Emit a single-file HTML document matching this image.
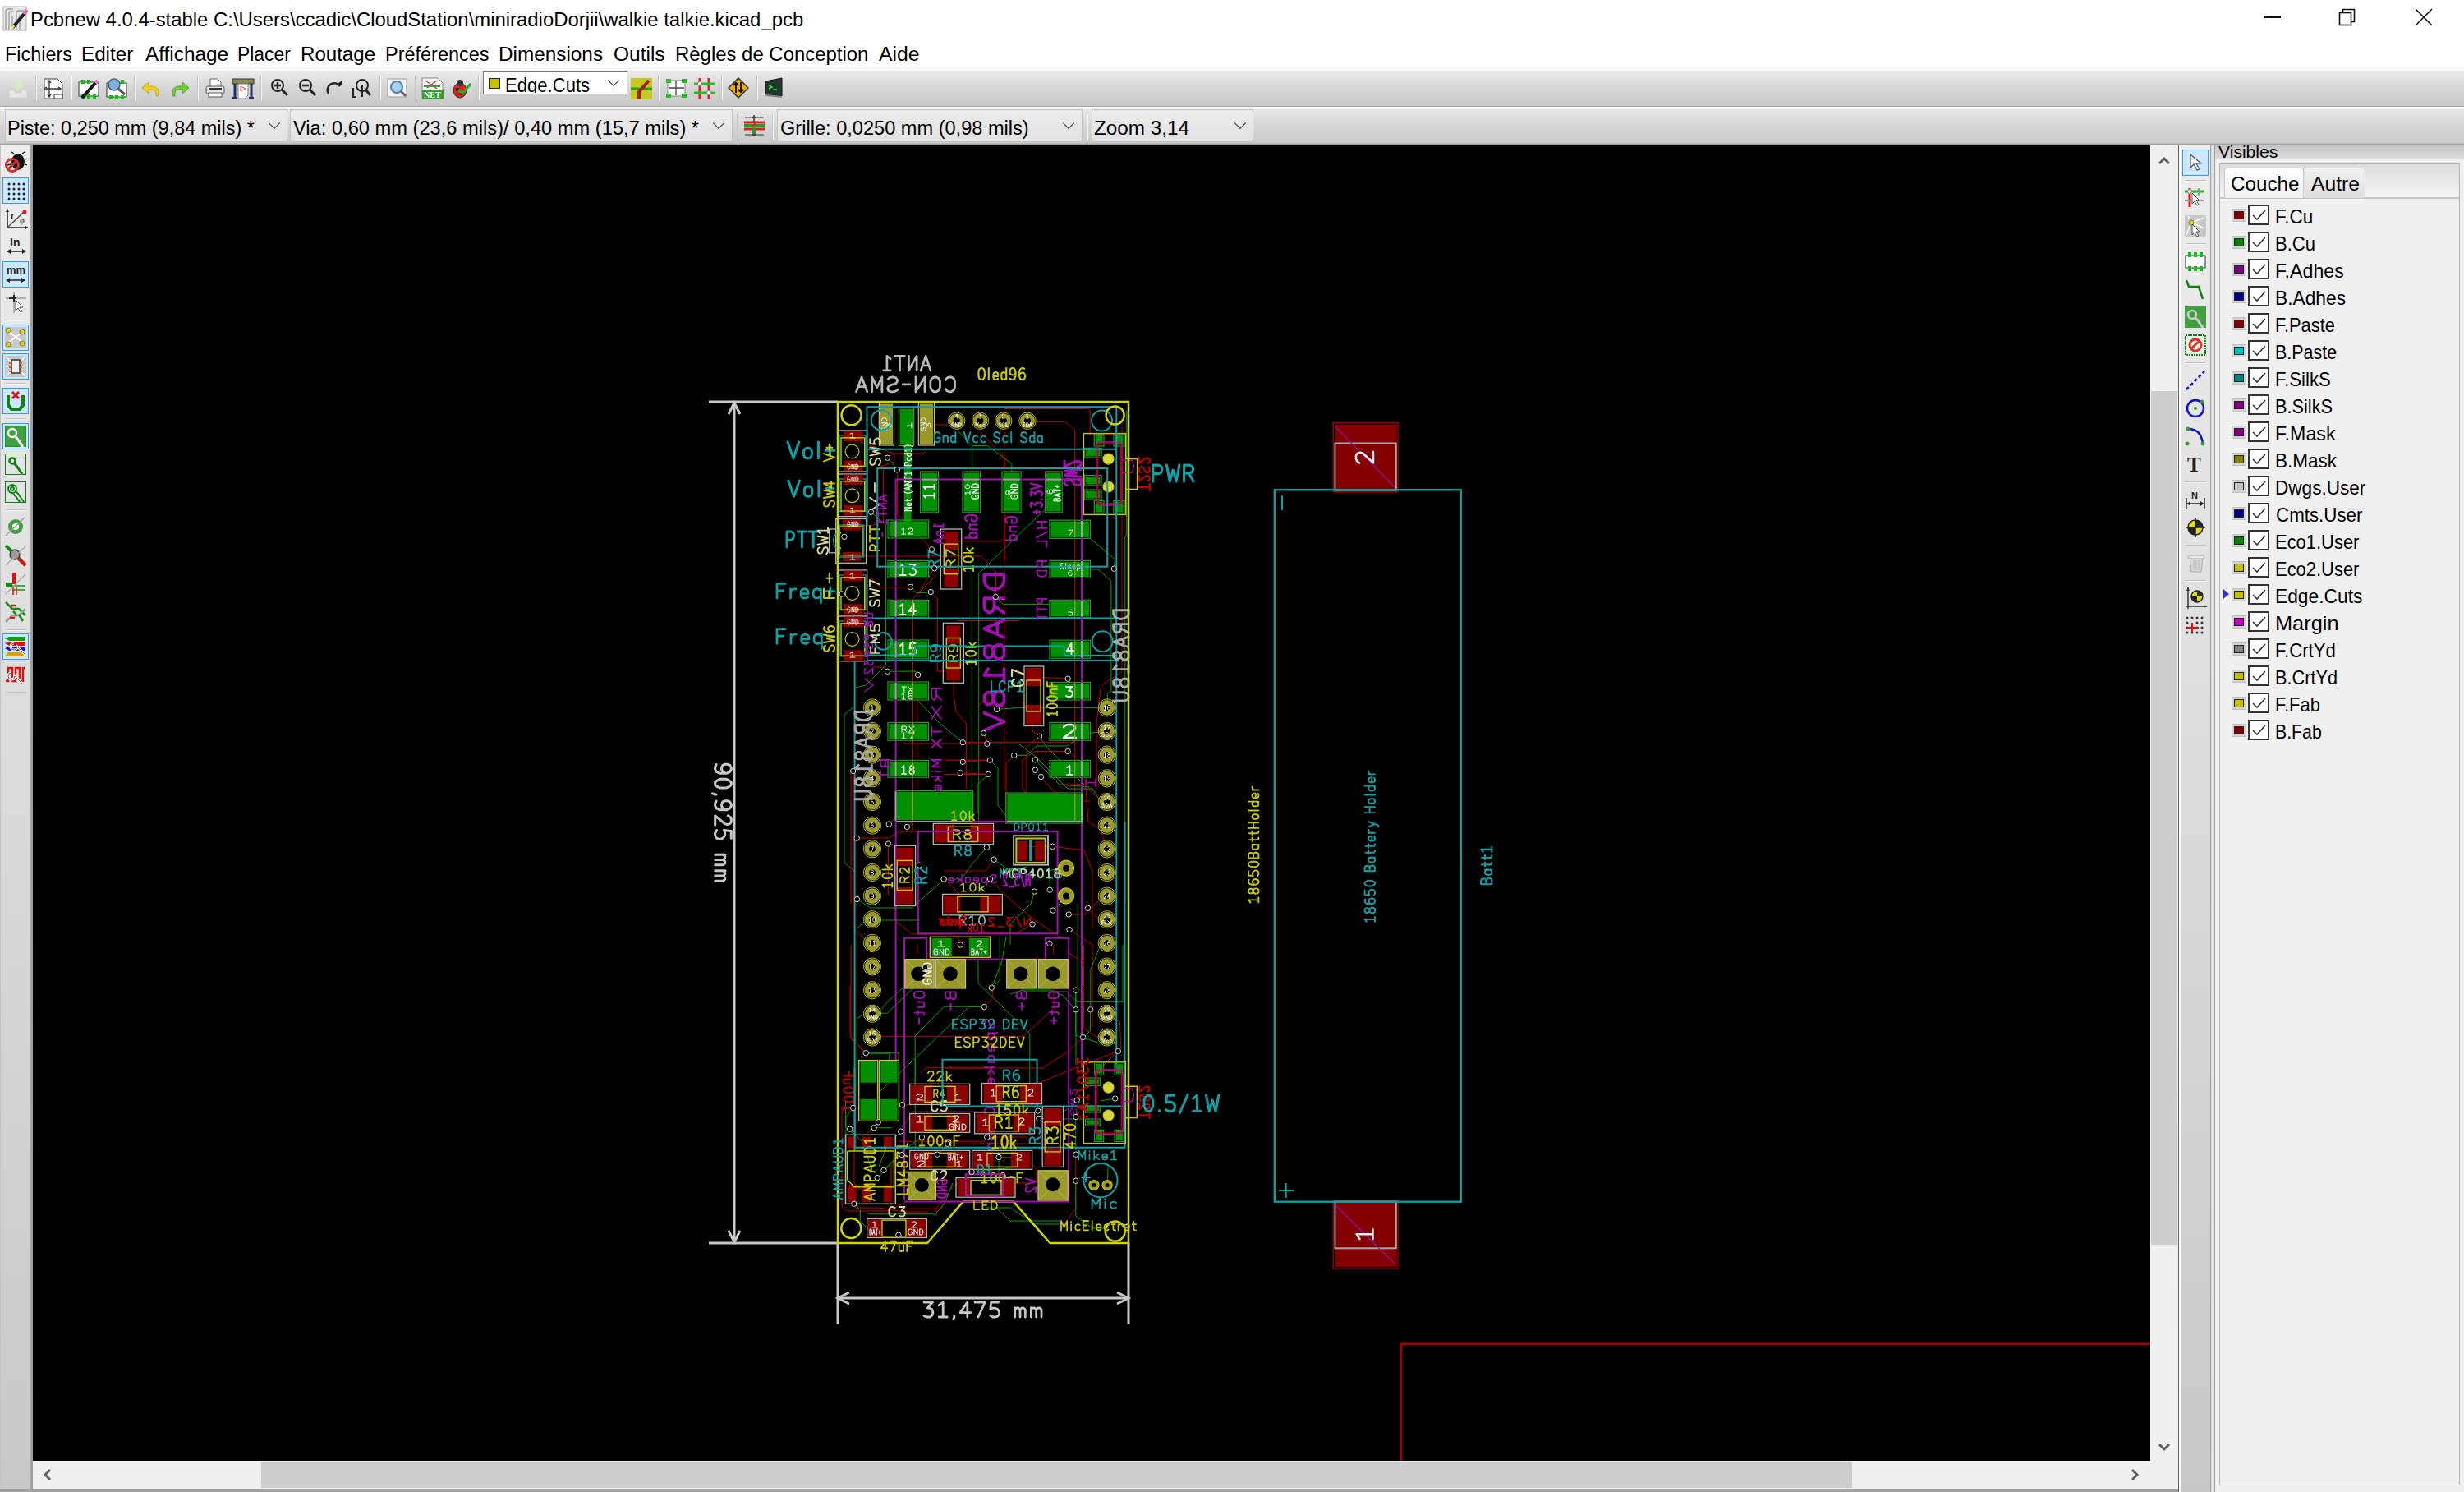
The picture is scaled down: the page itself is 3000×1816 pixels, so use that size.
<!DOCTYPE html>
<html><head><meta charset="utf-8"><style>
*{margin:0;padding:0;box-sizing:border-box}
html,body{width:3000px;height:1816px;overflow:hidden;background:#fff;font-family:"Liberation Sans",sans-serif;color:#000}
.a{position:absolute}
.t{position:absolute;white-space:nowrap;font-size:23px;line-height:1;transform-origin:0 0}
#title{left:0;top:0;width:3000px;height:46px;background:#fff}
#menu{left:0;top:46px;width:3000px;height:37px;background:#fff}
#tb1{left:0;top:83px;width:3000px;height:47px;background:linear-gradient(#f0f0f0 0,#f0f0f0 1px,#ffffff 1px,#ffffff 2px,#ececec 3px,#d6d6d6 50%,#c8c8c8 97%,#a4a4a4 97%,#a4a4a4 100%)}
#tb2{left:0;top:130px;width:3000px;height:47px;background:linear-gradient(#ffffff 0,#ffffff 2px,#e8e8e8 3px,#d6d6d6 50%,#cacaca 94%,#a0a0a0 96%,#a0a0a0 100%)}
#ltb{left:0;top:177px;width:40px;height:1639px;background:linear-gradient(90deg,#c4c4c4 0,#c4c4c4 1px,transparent 1px,transparent 36px,#a8a8a8 36px,#9a9a9a 40px),linear-gradient(#ececec,#c8c8c8)}
#canvas{left:40px;top:177px;width:2578px;height:1601px;background:#000;overflow:hidden}
#hsb{left:40px;top:1778px;width:2578px;height:34px;background:#f0f0f0}
#hth{left:318px;top:1779px;width:1937px;height:32px;background:#cdcdcd}
#vsb{left:2618px;top:177px;width:34px;height:1635px;background:#f0f0f0}
#vth{left:2619px;top:476px;width:32px;height:1039px;background:#cdcdcd}
#bot{left:0;top:1812px;width:3000px;height:4px;background:#a0a0a0}
#rtb{left:2652px;top:177px;width:45px;height:1639px;background:linear-gradient(90deg,#606060 0,#606060 1px,#ffffff 1px,#ffffff 3px,transparent 3px,transparent 39px,#a0a0a0 39px,#a0a0a0 40px,#e0e0e0 40px,#e0e0e0 44px,#a0a0a0 44px,#a0a0a0 45px),linear-gradient(#ededed,#c8c8c8)}
#lp{left:2697px;top:177px;width:303px;height:1639px;background:#f0f0f0}
#vish{left:2697px;top:177px;width:303px;height:17px;background:linear-gradient(#c4c4c4,#dedede)}
#nb{left:2702px;top:199px;width:293px;height:1609px;border:1px solid #b4b4b4;background:linear-gradient(#dcdcdc 0,#f4f4f4 40px,#f0f0f0 44px)}
#nbc{left:2703px;top:240px;width:291px;height:1567px;background:#f0f0f0;border-top:2px solid #c4c4c4}
.tab{position:absolute;top:204px;height:37px;border:1px solid #c6c6c6;border-bottom:none;border-radius:3px 3px 0 0}
.sw{position:absolute;left:2717px;width:18px;height:16px;background:#d4d4d4;border:1px solid #c0c0c0}
.sw i{position:absolute;left:2px;top:2px;width:12px;height:10px;border:1px solid #222}
.ck{position:absolute;left:2737px;width:26px;height:25px;background:#fff;border:2px solid #333}
.ck svg{position:absolute;left:1px;top:1px}
.lt{left:2771px}
.cb{position:absolute;background:linear-gradient(#ececec,#e2e2e2);border:1px solid #c4c4c4}
.chev{position:absolute;width:10px;height:10px;border-right:1.6px solid #333;border-bottom:1.6px solid #333;transform:rotate(45deg)}
.sep{position:absolute;width:2px;background:linear-gradient(90deg,#c4c4c4 50%,#f8f8f8 50%)}
.hsep{position:absolute;height:2px;background:linear-gradient(#c0c0c0 50%,#f6f6f6 50%)}
.btn{position:absolute;width:32px;height:32px;background:#cce8ff;border:1px solid #3399ff}
.ic{position:absolute}
</style></head><body>

<div id="title" class="a"></div>
<div id="menu" class="a"></div>
<div id="tb1" class="a"></div>
<div id="tb2" class="a"></div>
<div id="ltb" class="a"></div>
<div id="canvas" class="a"></div>
<div id="hsb" class="a"></div><div id="hth" class="a"></div>
<div id="vsb" class="a"></div><div id="vth" class="a"></div>
<div id="bot" class="a"></div>
<div id="rtb" class="a"></div>
<div id="lp" class="a"></div>
<div id="vish" class="a"></div>
<div id="nb" class="a"></div>
<div id="nbc" class="a"></div>
<!-- app icon -->
<svg class="ic" style="left:3px;top:6px" width="32" height="32" viewBox="0 0 32 32">
<rect x="1" y="2" width="28" height="29" fill="#e8e8e8" stroke="#b0b0b0"/>
<path d="M4 30V8q0-3 3-3h6M8 30V10q0-2 2-2h4M12 30V13M17 30V10q0-3 3-3h6M21 30V12" fill="none" stroke="#9a9a9a" stroke-width="1.3"/>
<path d="M12 28 L28 9" stroke="#222" stroke-width="4"/><path d="M26 11 L30 6" stroke="#e070b0" stroke-width="4"/><path d="M11 29 l3-4" stroke="#e8e070" stroke-width="3"/>
</svg>
<!-- window buttons -->
<div class="a" style="left:2757px;top:20px;width:20px;height:2px;background:#111"></div>
<svg class="ic" style="left:2846px;top:9px" width="24" height="24"><rect x="2.5" y="6.5" width="14" height="15" fill="none" stroke="#111" stroke-width="1.6"/><path d="M6.5 6.5V2.5H20.5V17.5H16.5" fill="none" stroke="#111" stroke-width="1.6"/></svg>
<svg class="ic" style="left:2939px;top:9px" width="24" height="24"><path d="M2 2L22 22M22 2L2 22" stroke="#111" stroke-width="1.6"/></svg>
<!-- menus -->
<!-- toolbar 1 separators -->
<div class="sep" style="left:43px;top:92px;height:30px"></div>
<div class="sep" style="left:86px;top:92px;height:30px"></div>
<div class="sep" style="left:163px;top:92px;height:30px"></div>
<div class="sep" style="left:240px;top:92px;height:30px"></div>
<div class="sep" style="left:317px;top:92px;height:30px"></div>
<div class="sep" style="left:462px;top:92px;height:30px"></div>
<div class="sep" style="left:505px;top:92px;height:30px"></div>
<div class="sep" style="left:582px;top:92px;height:30px"></div>
<div class="sep" style="left:801px;top:92px;height:30px"></div>
<div class="sep" style="left:878px;top:92px;height:30px"></div>
<div class="sep" style="left:921px;top:92px;height:30px"></div>
<!-- toolbar 1 icons -->
<svg class="ic" style="left:9px;top:95px" width="26" height="26"><path d="M2 14h6l2 4h6l2-4h6v10H2z" fill="#e6e6e6" stroke="#d0d0d0"/><path d="M9 2h8v7h4l-8 7-8-7h4z" fill="#d8e8c0"/></svg>
<svg class="ic" style="left:53px;top:95px" width="25" height="26"><path d="M1 1h16l6 6v18H1z" fill="#fff" stroke="#444"/><path d="M7 3v20M3 13h18M5 6l2-3 2 3M5 20l2 3 2-3M4 11l-3 2 3 2M18 11l3 2-3 2" fill="none" stroke="#333" stroke-width="1.3"/><rect x="13" y="20" width="10" height="5" fill="#fff" stroke="#333"/></svg>
<svg class="ic" style="left:95px;top:95px" width="26" height="26"><rect x="1" y="5" width="24" height="17" fill="#fff" stroke="#333"/><g fill="#10c010"><rect x="4" y="2" width="4" height="5"/><rect x="11" y="2" width="4" height="5"/><rect x="4" y="20" width="4" height="5"/><rect x="11" y="20" width="4" height="5"/><rect x="18" y="20" width="4" height="5"/></g><path d="M5 24L23 4" stroke="#111" stroke-width="4"/><path d="M21 6l3-3" stroke="#e080c0" stroke-width="4"/></svg>
<svg class="ic" style="left:129px;top:94px" width="26" height="27"><rect x="1" y="7" width="24" height="17" fill="#fff" stroke="#333"/><g fill="#10c010"><rect x="18" y="3" width="4" height="5"/><rect x="4" y="22" width="4" height="5"/><rect x="11" y="22" width="4" height="5"/><rect x="18" y="22" width="4" height="5"/></g><circle cx="10" cy="9" r="7" fill="#80b0d8" stroke="#406080" stroke-width="1.5"/><path d="M15 14l8 7" stroke="#555" stroke-width="3"/></svg>
<svg class="ic" style="left:172px;top:95px" width="23" height="24"><path d="M20 22c3-6 0-12-8-12H9V5L1 12l8 7v-5h3c5 0 7 3 6 8z" fill="#f0d020" stroke="#c8a800"/></svg>
<svg class="ic" style="left:208px;top:95px" width="23" height="24"><path d="M3 22c-3-6 0-12 8-12h3V5l8 7-8 7v-5h-3c-5 0-7 3-6 8z" fill="#70d030" stroke="#50a020"/></svg>
<svg class="ic" style="left:250px;top:95px" width="24" height="24"><path d="M6 1h9l4 4v6H6z" fill="#fff" stroke="#666"/><rect x="1" y="10" width="22" height="9" rx="2" fill="#e8e8e8" stroke="#555"/><rect x="4" y="12" width="16" height="3" fill="#333"/><rect x="4" y="18" width="16" height="5" fill="#fff" stroke="#555"/></svg>
<svg class="ic" style="left:282px;top:94px" width="28" height="27"><rect x="1" y="2" width="26" height="6" fill="#8a8a50" stroke="#333"/><path d="M4 8v17M24 8v17" stroke="#203060" stroke-width="3"/><path d="M1 25h6M21 25h6" stroke="#203060" stroke-width="2"/><path d="M8 8h12v14l-4 4H8z" fill="#fff" stroke="#888"/><path d="M11 11l6 3-6 3z" fill="none" stroke="#e04040"/></svg>
<svg class="ic" style="left:329px;top:95px" width="23" height="24"><circle cx="9" cy="9" r="7" fill="none" stroke="#222" stroke-width="2"/><path d="M14 14l7 7" stroke="#222" stroke-width="3"/><path d="M5 9h8M9 5v8" stroke="#222" stroke-width="2.5"/></svg>
<svg class="ic" style="left:363px;top:95px" width="23" height="24"><circle cx="9" cy="9" r="7" fill="none" stroke="#222" stroke-width="2"/><path d="M14 14l7 7" stroke="#222" stroke-width="3"/><path d="M5 9h8" stroke="#222" stroke-width="2.5"/></svg>
<svg class="ic" style="left:397px;top:97px" width="22" height="22"><path d="M3 17A8 8 0 1 1 17 8" fill="none" stroke="#222" stroke-width="2.5"/><path d="M12 7h8v-7z" fill="#222"/></svg>
<svg class="ic" style="left:428px;top:95px" width="25" height="25"><circle cx="13" cy="9" r="7" fill="none" stroke="#222" stroke-width="2"/><path d="M17 14l6 7" stroke="#222" stroke-width="3"/><path d="M2 12v11h4M13 9v14" fill="none" stroke="#222" stroke-width="2"/></svg>
<svg class="ic" style="left:471px;top:95px" width="26" height="25"><rect x="1" y="1" width="23" height="22" fill="#f4f4f4" stroke="#999"/><circle cx="12" cy="11" r="7" fill="#a8d0f0" stroke="#5080b0" stroke-width="2"/><path d="M17 16l6 6" stroke="#666" stroke-width="3"/></svg>
<svg class="ic" style="left:513px;top:94px" width="28" height="27"><path d="M1 1h19l6 6v19H1z" fill="#f8f8f8" stroke="#888"/><path d="M5 4l14 10M19 4L7 13" stroke="#e04040" stroke-width="1.5"/><path d="M3 11h20" stroke="#30a030" stroke-width="2"/><rect x="1" y="16" width="26" height="10" fill="#30a030"/><text x="3" y="25" font-family="Liberation Serif" font-weight="bold" font-size="10" fill="#fff">NET</text></svg>
<svg class="ic" style="left:548px;top:95px" width="26" height="25"><ellipse cx="12" cy="15" rx="8" ry="9" fill="#e02020" stroke="#333"/><circle cx="12" cy="6" r="4" fill="#333"/><circle cx="9" cy="14" r="2" fill="#111"/><circle cx="14" cy="19" r="2" fill="#111"/><path d="M10 14l5 5 10-12" fill="none" stroke="#20b020" stroke-width="3"/></svg>
<!-- layer combo -->
<div class="a" style="left:588px;top:87px;width:176px;height:28px;background:#fff;border:1px solid #7a7a7a"></div>
<div class="a" style="left:595px;top:95px;width:14px;height:13px;background:#c2c200;border:1px solid #222"></div>
<div class="a" style="left:589px;top:88px;width:150px;height:25px;overflow:hidden"><div class="t" style="left:25.5px;top:5px;transform:scaleX(0.96)">Edge.Cuts</div></div>
<div class="chev" style="left:742px;top:93px;border-color:#333"></div>
<svg class="ic" style="left:768px;top:95px" width="26" height="25"><rect x="0" y="0" width="26" height="25" fill="#c8c820"/><path d="M0 13h26" stroke="#20a020" stroke-width="3"/><path d="M10 25v-8l12-14" fill="none" stroke="#a02020" stroke-width="4"/></svg>
<svg class="ic" style="left:810px;top:95px" width="27" height="25"><rect x="3" y="3" width="21" height="19" fill="#fff" stroke="#888"/><g fill="#20c020"><rect x="1" y="1" width="6" height="5"/><rect x="20" y="1" width="6" height="5"/><rect x="1" y="19" width="6" height="5"/><rect x="20" y="19" width="6" height="5"/></g><path d="M13 4v17M4 12h19" stroke="#444" stroke-width="1.3"/></svg>
<svg class="ic" style="left:845px;top:95px" width="25" height="25"><path d="M7 0v25M18 0v25" stroke="#e02020" stroke-width="3"/><path d="M0 7h25M0 18h25" stroke="#20c020" stroke-width="3"/><circle cx="7" cy="7" r="2.5" fill="#fff" stroke="#888"/><circle cx="18" cy="18" r="2.5" fill="#fff" stroke="#888"/></svg>
<svg class="ic" style="left:886px;top:94px" width="26" height="26"><path d="M13 1l12 12-12 12L1 13z" fill="#f0b000" stroke="#333" stroke-width="1.5"/><path d="M10 7v12M7 10l3-3 3 3M16 6v12M13 15l3 3 3-3" fill="none" stroke="#111" stroke-width="2"/></svg>
<svg class="ic" style="left:930px;top:94px" width="26" height="26"><path d="M2 5l20-4v22L2 21z" fill="#333" stroke="#111"/><rect x="4" y="6" width="16" height="13" fill="#1a3a2a"/><path d="M6 10l4 2-4 2M11 15h5" stroke="#40e040" stroke-width="1.5" fill="none"/><path d="M2 21l20 2v2L2 23z" fill="#888"/></svg>
<!-- toolbar 2 -->
<div class="cb" style="left:6px;top:133px;width:344px;height:40px"></div>
<div class="chev" style="left:329px;top:145px"></div>
<div class="cb" style="left:353px;top:133px;width:539px;height:40px"></div>
<div class="chev" style="left:870px;top:145px"></div>
<div class="sep" style="left:897px;top:138px;height:32px"></div>
<svg class="ic" style="left:904px;top:138px" width="29" height="30"><path d="M2 11h25M2 19h25" stroke="#e02020" stroke-width="3"/><path d="M2 15h25" stroke="#20a020" stroke-width="4"/><path d="M14 2v8M14 20v8" stroke="#333" stroke-width="1.5"/><path d="M3 5h8M17 5h9M3 26h8M17 26h9" stroke="#333" stroke-width="1.2"/><path d="M11 3l3 2-3 2M17 3l-3 2 3 2M11 24l3 2-3 2M17 24l-3 2 3 2" fill="#333"/><path d="M14 17v8" stroke="#20a020" stroke-width="4"/><path d="M16 12l-4 4" stroke="#e02020" stroke-width="2"/></svg>
<div class="sep" style="left:940px;top:138px;height:32px"></div>
<div class="cb" style="left:946px;top:133px;width:372px;height:40px"></div>
<div class="chev" style="left:1296px;top:145px"></div>
<div class="sep" style="left:1323px;top:138px;height:32px"></div>
<div class="cb" style="left:1329px;top:133px;width:197px;height:40px"></div>
<div class="chev" style="left:1505px;top:145px"></div>
<!-- scrollbar arrows -->
<svg class="ic" style="left:50px;top:1787px" width="16" height="16"><path d="M11 2L5 8l6 6" fill="none" stroke="#606060" stroke-width="3"/></svg>
<svg class="ic" style="left:2591px;top:1787px" width="16" height="16"><path d="M5 2l6 6-6 6" fill="none" stroke="#606060" stroke-width="3"/></svg>
<svg class="ic" style="left:2627px;top:188px" width="16" height="16"><path d="M2 11l6-6 6 6" fill="none" stroke="#606060" stroke-width="3"/></svg>
<svg class="ic" style="left:2627px;top:1753px" width="16" height="16"><path d="M2 5l6 6 6-6" fill="none" stroke="#606060" stroke-width="3"/></svg>
<!-- right panel -->
<div class="tab" style="left:2708px;width:97px;background:linear-gradient(#ffffff,#f0f0f0)"></div>
<div class="tab" style="left:2806px;width:74px;background:linear-gradient(#f0f0f0,#dedede)"></div>
<svg class="ic" style="left:2706px;top:716px" width="9" height="14"><path d="M1 1l7 6-7 6z" fill="#3030f0"/></svg>
<!-- left toolbar -->
<svg class="ic" style="left:5px;top:184px" width="28" height="27"><ellipse cx="17" cy="13" rx="8" ry="10" fill="#111"/><path d="M12 3l-3-2M22 3l3-2M8 10l-3-1M8 16l-4 1M26 10l2-1M26 16l2 1" stroke="#111" stroke-width="1.3"/><circle cx="10" cy="17" r="7.5" fill="none" stroke="#d03030" stroke-width="3"/><path d="M5 22l10-10" stroke="#d03030" stroke-width="3"/></svg>
<div class="btn" style="left:3px;top:216px"></div>
<svg class="ic" style="left:7px;top:220px" width="26" height="26"><g fill="#222"><circle cx="4" cy="4" r="1.5"/><circle cx="10" cy="4" r="1.5"/><circle cx="16" cy="4" r="1.5"/><circle cx="22" cy="4" r="1.5"/><circle cx="4" cy="10" r="1.5"/><circle cx="10" cy="10" r="1.5"/><circle cx="16" cy="10" r="1.5"/><circle cx="22" cy="10" r="1.5"/><circle cx="4" cy="16" r="1.5"/><circle cx="10" cy="16" r="1.5"/><circle cx="16" cy="16" r="1.5"/><circle cx="22" cy="16" r="1.5"/><circle cx="4" cy="22" r="1.5"/><circle cx="10" cy="22" r="1.5"/><circle cx="16" cy="22" r="1.5"/><circle cx="22" cy="22" r="1.5"/></g></svg>
<svg class="ic" style="left:6px;top:253px" width="28" height="27"><path d="M3 2v22h25" fill="none" stroke="#222" stroke-width="1.5"/><path d="M1 5l2-4 2 4M25 22l3 2-3 2" fill="#222"/><path d="M3 24L23 5" stroke="#444" stroke-width="1.3"/><circle cx="24" cy="5" r="2.5" fill="#e02020"/><text x="7" y="13" font-size="11" font-weight="bold" fill="#222" font-family="Liberation Sans">r</text><text x="18" y="19" font-size="10" fill="#222" font-family="Liberation Serif">φ</text></svg>
<svg class="ic" style="left:6px;top:287px" width="28" height="24"><text x="6" y="13" font-size="14" font-weight="bold" fill="#222" font-family="Liberation Sans">In</text><path d="M3 19h22" stroke="#222" stroke-width="1.5"/><path d="M2 19l5-3v6zM26 19l-5-3v6z" fill="#222"/></svg>
<div class="btn" style="left:3px;top:318px"></div>
<svg class="ic" style="left:5px;top:320px" width="28" height="28"><text x="3" y="13" font-size="13" font-weight="bold" fill="#222" font-family="Liberation Sans">mm</text><path d="M3 21h22" stroke="#222" stroke-width="1.5"/><path d="M2 21l5-3v6zM26 21l-5-3v6z" fill="#222"/></svg>
<svg class="ic" style="left:6px;top:355px" width="28" height="26"><path d="M11 1v25M1 8h25" stroke="#999" stroke-width="1.3"/><path d="M11 4v8M5 8h9" stroke="#222" stroke-width="2"/><path d="M13 10v13l3-3 3 5 2-1-3-5h4z" fill="#fff" stroke="#555"/></svg>
<div class="hsep" style="left:7px;top:389px;width:25px"></div>
<div class="btn" style="left:3px;top:395px"></div>
<svg class="ic" style="left:6px;top:398px" width="26" height="26"><rect x="0" y="0" width="26" height="26" fill="#c8c8c8"/><path d="M4 5l18 14M4 19L22 6" stroke="#fff" stroke-width="2"/><g fill="#e0e000" stroke="#777"><circle cx="4" cy="4" r="3"/><circle cx="21" cy="6" r="3"/><circle cx="4" cy="21" r="3"/><circle cx="21" cy="20" r="3"/></g></svg>
<div class="btn" style="left:3px;top:430px"></div>
<svg class="ic" style="left:6px;top:433px" width="26" height="26"><rect x="0" y="0" width="26" height="26" fill="#c8c8c8"/><path d="M1 1l24 24M25 1L1 25M1 13h24" stroke="#fff" stroke-width="1.5"/><rect x="8" y="5" width="10" height="16" fill="#eee" stroke="#333" stroke-width="1.5"/><g fill="#e06020"><rect x="5" y="8" width="3" height="2"/><rect x="5" y="13" width="3" height="2"/><rect x="5" y="18" width="3" height="2"/><rect x="18" y="8" width="3" height="2"/><rect x="18" y="13" width="3" height="2"/><rect x="18" y="18" width="3" height="2"/></g></svg>
<div class="hsep" style="left:7px;top:466px;width:25px"></div>
<div class="btn" style="left:3px;top:472px"></div>
<svg class="ic" style="left:6px;top:475px" width="26" height="26"><path d="M4 6v12l4 5h10l4-5V6" fill="none" stroke="#108010" stroke-width="4"/><path d="M9 2l8 8M17 2l-8 8" stroke="#e01010" stroke-width="3"/></svg>
<div class="hsep" style="left:7px;top:509px;width:25px"></div>
<div class="btn" style="left:3px;top:515px"></div>
<svg class="ic" style="left:6px;top:518px" width="26" height="26"><rect x="0" y="0" width="26" height="26" fill="#40a040" stroke="#108010"/><circle cx="9" cy="9" r="5" fill="none" stroke="#fff" stroke-width="2.5"/><path d="M12 12l3 4 7 10" fill="none" stroke="#fff" stroke-width="3"/></svg>
<svg class="ic" style="left:6px;top:552px" width="26" height="26"><rect x="0.5" y="0.5" width="25" height="25" fill="none" stroke="#108010"/><circle cx="9" cy="9" r="3.5" fill="none" stroke="#108010" stroke-width="2.5"/><path d="M11 12l3 3 7 10" fill="none" stroke="#108010" stroke-width="3"/></svg>
<svg class="ic" style="left:6px;top:586px" width="26" height="26"><rect x="0.5" y="0.5" width="25" height="25" fill="none" stroke="#108010"/><circle cx="9" cy="9" r="5" fill="none" stroke="#108010" stroke-width="2"/><circle cx="9" cy="9" r="2" fill="none" stroke="#108010" stroke-width="2"/><path d="M13 12l3 3 7 10M10 15l3 3 5 7" fill="none" stroke="#108010" stroke-width="2"/></svg>
<div class="hsep" style="left:7px;top:620px;width:25px"></div>
<svg class="ic" style="left:6px;top:628px" width="26" height="26"><circle cx="13" cy="13" r="9" fill="#40a040"/><circle cx="13" cy="13" r="4" fill="#fff"/><path d="M1 24L24 2" stroke="#999" stroke-width="1.3"/></svg>
<svg class="ic" style="left:6px;top:662px" width="26" height="28"><path d="M1 2l24 24" stroke="#109010" stroke-width="4"/><path d="M13 14l12 12" stroke="#e01010" stroke-width="4"/><circle cx="12" cy="13" r="6" fill="#999" stroke="#444" stroke-width="1.5"/><path d="M1 26L25 3" stroke="#aaa" stroke-width="1.3"/></svg>
<svg class="ic" style="left:6px;top:697px" width="26" height="27"><rect x="9" y="0" width="5" height="14" fill="#e01010"/><rect x="1" y="12" width="8" height="5" fill="#109010"/><path d="M9 16h16M9 21h16" stroke="#109010" stroke-width="1.5"/><path d="M10 18v9M14 18v9" stroke="#e01010" stroke-width="1.5"/><path d="M1 26L25 2" stroke="#aaa" stroke-width="1.3"/></svg>
<svg class="ic" style="left:6px;top:732px" width="26" height="26"><path d="M1 1l8 8 8 0 8 8" fill="none" stroke="#109010" stroke-width="2.5"/><path d="M1 25l8-8 8 0 8-8" fill="none" stroke="#999" stroke-width="2.5"/><path d="M7 5h6M6 20h6" stroke="#e01010" stroke-width="2.5"/><path d="M10 12l4 4M17 16l5 8" stroke="#109010" stroke-width="2.5"/></svg>
<div class="hsep" style="left:7px;top:766px;width:25px"></div>
<div class="btn" style="left:3px;top:771px"></div>
<svg class="ic" style="left:6px;top:774px" width="26" height="26"><path d="M5 1h20v5H5L0 3z" fill="#10a010"/><path d="M5 7h20v5H5L0 9z" fill="#e01010"/><path d="M5 13h20v5H5L0 15z" fill="#1010d0"/><path d="M3 20h20l3 5H0z" fill="#d8a010"/><path d="M11 9a4 4 0 1 0 4 4l10 10" fill="none" stroke="#eee" stroke-width="3"/><path d="M11 9a4 4 0 1 0 4 4l10 10" fill="none" stroke="#666" stroke-width="1"/></svg>
<svg class="ic" style="left:6px;top:809px" width="26" height="26"><path d="M1 20h3V4h5v16h4V4h5v16h4V4h2" fill="none" stroke="#e01010" stroke-width="2.5"/><path d="M8 10a4 4 0 1 0 4 4l9 9" fill="none" stroke="#eee" stroke-width="3.5"/><path d="M8 10a4 4 0 1 0 4 4l9 9" fill="none" stroke="#666" stroke-width="1"/></svg>
<div class="hsep" style="left:7px;top:842px;width:25px"></div>
<!-- right toolbar -->
<div class="btn" style="left:2657px;top:182px"></div>
<svg class="ic" style="left:2665px;top:187px" width="18" height="22"><path d="M2 1v16l4-4 4 7 3-1-4-7h6z" fill="#f4f4f4" stroke="#555" stroke-width="1.2"/></svg>
<div class="hsep" style="left:2661px;top:219px;width:25px"></div>
<svg class="ic" style="left:2659px;top:228px" width="28" height="25"><path d="M1 5h24" stroke="#10c010" stroke-width="3"/><path d="M7 1v23" stroke="#e01010" stroke-width="3"/><path d="M18 1v10M1 16h24" stroke="#999" stroke-width="2.5"/><circle cx="7" cy="5" r="2.5" fill="#fff" stroke="#888"/><path d="M10 7v13l3-3 3 5 2-1-3-5h4z" fill="#fff" stroke="#555"/></svg>
<svg class="ic" style="left:2660px;top:262px" width="26" height="26"><rect x="0" y="0" width="26" height="26" rx="2" fill="#c8c8c8"/><path d="M8 9L2 24M8 9l16-6M8 9L24 16M8 9L4 1" stroke="#fff" stroke-width="1.5"/><circle cx="8" cy="9" r="3" fill="#e0e000" stroke="#777"/><path d="M9 11v13l3-3 3 5 2-1-3-5h4z" fill="#fff" stroke="#555"/></svg>
<div class="hsep" style="left:2661px;top:296px;width:25px"></div>
<svg class="ic" style="left:2660px;top:306px" width="26" height="25"><rect x="1" y="5" width="24" height="15" fill="#fff" stroke="#333"/><g fill="#10c010"><rect x="4" y="1" width="4" height="6"/><rect x="11" y="1" width="4" height="6"/><rect x="18" y="1" width="4" height="6"/><rect x="4" y="18" width="4" height="6"/><rect x="11" y="18" width="4" height="6"/><rect x="18" y="18" width="4" height="6"/></g></svg>
<svg class="ic" style="left:2660px;top:340px" width="26" height="25"><path d="M2 1l3 8h12l5 15" fill="none" stroke="#108010" stroke-width="2.5"/></svg>
<svg class="ic" style="left:2660px;top:373px" width="26" height="26"><rect x="0" y="0" width="26" height="26" fill="#40a040"/><circle cx="9" cy="10" r="5" fill="none" stroke="#ccc" stroke-width="2.5"/><path d="M12 13l4 4 6 9" fill="none" stroke="#ccc" stroke-width="3"/></svg>
<svg class="ic" style="left:2660px;top:407px" width="26" height="26"><rect x="1" y="1" width="24" height="24" fill="#e8f8e8" stroke="#108010" stroke-width="2" stroke-dasharray="2 1"/><circle cx="13" cy="13" r="7" fill="none" stroke="#e03030" stroke-width="3"/><path d="M8 17l10-9" stroke="#e03030" stroke-width="3"/></svg>
<div class="hsep" style="left:2661px;top:441px;width:25px"></div>
<svg class="ic" style="left:2660px;top:450px" width="26" height="26"><path d="M2 24L24 2" stroke="#1010d0" stroke-width="2.5" stroke-dasharray="4 3"/></svg>
<svg class="ic" style="left:2660px;top:484px" width="26" height="26"><circle cx="13" cy="13" r="10" fill="none" stroke="#1010d0" stroke-width="2.5"/><circle cx="13" cy="13" r="2" fill="#30a030"/><circle cx="21" cy="5" r="2.5" fill="#30a030"/></svg>
<svg class="ic" style="left:2660px;top:518px" width="26" height="26"><path d="M4 4q16 0 18 18" fill="none" stroke="#1010d0" stroke-width="2.5"/><circle cx="4" cy="4" r="2.5" fill="#30a030"/><circle cx="22" cy="22" r="2.5" fill="#30a030"/><circle cx="3" cy="22" r="2.5" fill="#30a030"/></svg>
<svg class="ic" style="left:2662px;top:554px" width="24" height="22"><text x="1" y="20" font-size="25" font-weight="bold" font-family="Liberation Serif" fill="#222">T</text></svg>
<div class="hsep" style="left:2661px;top:586px;width:25px"></div>
<svg class="ic" style="left:2660px;top:596px" width="26" height="25"><text x="8" y="11" font-size="11" font-weight="bold" font-family="Liberation Sans" fill="#222">N</text><path d="M2 10v14M24 10v14M2 17h22" stroke="#222" stroke-width="1.5"/><path d="M3 17l4-3v6zM23 17l-4-3v6z" fill="#222"/></svg>
<svg class="ic" style="left:2661px;top:630px" width="24" height="24"><circle cx="12" cy="12" r="9" fill="#e0e000" stroke="#222" stroke-width="1.5"/><path d="M12 3a9 9 0 0 1 9 9H12zM12 21a9 9 0 0 1-9-9h9z" fill="#222"/><path d="M12 0v24M0 12h24" stroke="#222" stroke-width="1.5"/></svg>
<div class="hsep" style="left:2661px;top:663px;width:25px"></div>
<svg class="ic" style="left:2663px;top:673px" width="22" height="24"><path d="M3 6h16l-2 17H5z" fill="#d8d8d8" stroke="#aaa"/><rect x="1" y="3" width="20" height="4" rx="2" fill="#e8e8e8" stroke="#aaa"/><path d="M8 9v12M11 9v12M14 9v12" stroke="#bbb"/></svg>
<div class="hsep" style="left:2661px;top:706px;width:25px"></div>
<svg class="ic" style="left:2660px;top:714px" width="28" height="28"><path d="M4 1v26M1 24h26" stroke="#333" stroke-width="1.5"/><path d="M2 5l2-4 2 4M23 22l4 2-4 2" fill="#333"/><circle cx="15" cy="12" r="7" fill="#e0e000" stroke="#222" stroke-width="1.5"/><path d="M15 5a7 7 0 0 1 7 7h-7zM15 19a7 7 0 0 1-7-7h7z" fill="#222"/></svg>
<svg class="ic" style="left:2661px;top:750px" width="26" height="24"><g fill="#333"><circle cx="2" cy="2" r="1.5"/><circle cx="8" cy="2" r="1.5"/><circle cx="14" cy="2" r="1.5"/><circle cx="20" cy="2" r="1.5"/><circle cx="2" cy="8" r="1.5"/><circle cx="20" cy="8" r="1.5"/><circle cx="2" cy="14" r="1.5"/><circle cx="20" cy="14" r="1.5"/><circle cx="2" cy="20" r="1.5"/><circle cx="8" cy="20" r="1.5"/><circle cx="14" cy="20" r="1.5"/><circle cx="20" cy="20" r="1.5"/><circle cx="14" cy="8" r="1.5"/><circle cx="14" cy="14" r="1.5"/></g><path d="M2 14h14M8 8v12" stroke="#e01010" stroke-width="2"/></svg>
<div class="sw" style="top:254px"><i style="background:#840000"></i></div><div class="ck" style="top:249px"><svg width="21" height="20"><path d="M3 10 L8 15 L18 4" fill="none" stroke="#333" stroke-width="1.6"/></svg></div>
<div class="sw" style="top:287px"><i style="background:#008400"></i></div><div class="ck" style="top:282px"><svg width="21" height="20"><path d="M3 10 L8 15 L18 4" fill="none" stroke="#333" stroke-width="1.6"/></svg></div>
<div class="sw" style="top:320px"><i style="background:#840084"></i></div><div class="ck" style="top:315px"><svg width="21" height="20"><path d="M3 10 L8 15 L18 4" fill="none" stroke="#333" stroke-width="1.6"/></svg></div>
<div class="sw" style="top:353px"><i style="background:#000084"></i></div><div class="ck" style="top:348px"><svg width="21" height="20"><path d="M3 10 L8 15 L18 4" fill="none" stroke="#333" stroke-width="1.6"/></svg></div>
<div class="sw" style="top:386px"><i style="background:#840000"></i></div><div class="ck" style="top:381px"><svg width="21" height="20"><path d="M3 10 L8 15 L18 4" fill="none" stroke="#333" stroke-width="1.6"/></svg></div>
<div class="sw" style="top:419px"><i style="background:#00c2c2"></i></div><div class="ck" style="top:414px"><svg width="21" height="20"><path d="M3 10 L8 15 L18 4" fill="none" stroke="#333" stroke-width="1.6"/></svg></div>
<div class="sw" style="top:452px"><i style="background:#008484"></i></div><div class="ck" style="top:447px"><svg width="21" height="20"><path d="M3 10 L8 15 L18 4" fill="none" stroke="#333" stroke-width="1.6"/></svg></div>
<div class="sw" style="top:485px"><i style="background:#840084"></i></div><div class="ck" style="top:480px"><svg width="21" height="20"><path d="M3 10 L8 15 L18 4" fill="none" stroke="#333" stroke-width="1.6"/></svg></div>
<div class="sw" style="top:518px"><i style="background:#840084"></i></div><div class="ck" style="top:513px"><svg width="21" height="20"><path d="M3 10 L8 15 L18 4" fill="none" stroke="#333" stroke-width="1.6"/></svg></div>
<div class="sw" style="top:551px"><i style="background:#848400"></i></div><div class="ck" style="top:546px"><svg width="21" height="20"><path d="M3 10 L8 15 L18 4" fill="none" stroke="#333" stroke-width="1.6"/></svg></div>
<div class="sw" style="top:584px"><i style="background:#c2c2c2"></i></div><div class="ck" style="top:579px"><svg width="21" height="20"><path d="M3 10 L8 15 L18 4" fill="none" stroke="#333" stroke-width="1.6"/></svg></div>
<div class="sw" style="top:617px"><i style="background:#000084"></i></div><div class="ck" style="top:612px"><svg width="21" height="20"><path d="M3 10 L8 15 L18 4" fill="none" stroke="#333" stroke-width="1.6"/></svg></div>
<div class="sw" style="top:650px"><i style="background:#008400"></i></div><div class="ck" style="top:645px"><svg width="21" height="20"><path d="M3 10 L8 15 L18 4" fill="none" stroke="#333" stroke-width="1.6"/></svg></div>
<div class="sw" style="top:683px"><i style="background:#c2c200"></i></div><div class="ck" style="top:678px"><svg width="21" height="20"><path d="M3 10 L8 15 L18 4" fill="none" stroke="#333" stroke-width="1.6"/></svg></div>
<div class="sw" style="top:716px"><i style="background:#c2c200"></i></div><div class="ck" style="top:711px"><svg width="21" height="20"><path d="M3 10 L8 15 L18 4" fill="none" stroke="#333" stroke-width="1.6"/></svg></div>
<div class="sw" style="top:749px"><i style="background:#c200c2"></i></div><div class="ck" style="top:744px"><svg width="21" height="20"><path d="M3 10 L8 15 L18 4" fill="none" stroke="#333" stroke-width="1.6"/></svg></div>
<div class="sw" style="top:782px"><i style="background:#848484"></i></div><div class="ck" style="top:777px"><svg width="21" height="20"><path d="M3 10 L8 15 L18 4" fill="none" stroke="#333" stroke-width="1.6"/></svg></div>
<div class="sw" style="top:815px"><i style="background:#c2c200"></i></div><div class="ck" style="top:810px"><svg width="21" height="20"><path d="M3 10 L8 15 L18 4" fill="none" stroke="#333" stroke-width="1.6"/></svg></div>
<div class="sw" style="top:848px"><i style="background:#c2c200"></i></div><div class="ck" style="top:843px"><svg width="21" height="20"><path d="M3 10 L8 15 L18 4" fill="none" stroke="#333" stroke-width="1.6"/></svg></div>
<div class="sw" style="top:881px"><i style="background:#840000"></i></div><div class="ck" style="top:876px"><svg width="21" height="20"><path d="M3 10 L8 15 L18 4" fill="none" stroke="#333" stroke-width="1.6"/></svg></div>
<div class="t" style="left:37.3px;top:13px;font-size:23px;transform:scaleX(1.0384)">Pcbnew 4.0.4-stable C:\Users\ccadic\CloudStation\miniradioDorjii\walkie talkie.kicad_pcb</div>
<div class="t" style="left:6.1px;top:55px;font-size:23px;transform:scaleX(1.0169)">Fichiers</div>
<div class="t" style="left:99.4px;top:55px;font-size:23px;transform:scaleX(1.0526)">Editer</div>
<div class="t" style="left:176.5px;top:55px;font-size:23px;transform:scaleX(1.0585)">Affichage</div>
<div class="t" style="left:289.4px;top:55px;font-size:23px;transform:scaleX(0.9935)">Placer</div>
<div class="t" style="left:366.4px;top:55px;font-size:23px;transform:scaleX(1.0470)">Routage</div>
<div class="t" style="left:468.8px;top:55px;font-size:23px;transform:scaleX(1.0208)">Préférences</div>
<div class="t" style="left:606.7px;top:55px;font-size:23px;transform:scaleX(1.0573)">Dimensions</div>
<div class="t" style="left:746.9px;top:55px;font-size:23px;transform:scaleX(1.0643)">Outils</div>
<div class="t" style="left:821.9px;top:55px;font-size:23px;transform:scaleX(1.0401)">Règles de Conception</div>
<div class="t" style="left:1070.0px;top:55px;font-size:23px;transform:scaleX(1.0773)">Aide</div>
<div class="t" style="left:8.5px;top:145px;font-size:23px;transform:scaleX(1.0188)">Piste: 0,250 mm (9,84 mils) *</div>
<div class="t" style="left:356.8px;top:145px;font-size:23px;transform:scaleX(1.0290)">Via: 0,60 mm (23,6 mils)/ 0,40 mm (15,7 mils) *</div>
<div class="t" style="left:949.6px;top:145px;font-size:23px;transform:scaleX(1.0253)">Grille: 0,0250 mm (0,98 mils)</div>
<div class="t" style="left:1331.9px;top:145px;font-size:23px;transform:scaleX(1.0561)">Zoom 3,14</div>
<div class="t" style="left:2700.6px;top:175px;font-size:20px;transform:scaleX(1.0552)">Visibles</div>
<div class="t" style="left:2715.6px;top:213px;font-size:23px;transform:scaleX(1.0526)">Couche</div>
<div class="t" style="left:2813.6px;top:213px;font-size:23px;transform:scaleX(1.0717)">Autre</div>
<div class="t" style="left:2770.1px;top:252px;font-size:24px;transform:scaleX(0.9378)">F.Cu</div>
<div class="t" style="left:2770.2px;top:285px;font-size:24px;transform:scaleX(0.9184)">B.Cu</div>
<div class="t" style="left:2770.1px;top:318px;font-size:24px;transform:scaleX(0.9663)">F.Adhes</div>
<div class="t" style="left:2770.1px;top:351px;font-size:24px;transform:scaleX(0.9483)">B.Adhes</div>
<div class="t" style="left:2770.2px;top:384px;font-size:24px;transform:scaleX(0.9105)">F.Paste</div>
<div class="t" style="left:2770.2px;top:417px;font-size:24px;transform:scaleX(0.8938)">B.Paste</div>
<div class="t" style="left:2770.2px;top:450px;font-size:24px;transform:scaleX(0.9246)">F.SilkS</div>
<div class="t" style="left:2770.2px;top:483px;font-size:24px;transform:scaleX(0.9055)">B.SilkS</div>
<div class="t" style="left:2770.1px;top:516px;font-size:24px;transform:scaleX(0.9671)">F.Mask</div>
<div class="t" style="left:2770.1px;top:549px;font-size:24px;transform:scaleX(0.9390)">B.Mask</div>
<div class="t" style="left:2770.1px;top:582px;font-size:24px;transform:scaleX(0.9404)">Dwgs.User</div>
<div class="t" style="left:2771.1px;top:615px;font-size:24px;transform:scaleX(0.9306)">Cmts.User</div>
<div class="t" style="left:2770.2px;top:648px;font-size:24px;transform:scaleX(0.9138)">Eco1.User</div>
<div class="t" style="left:2770.2px;top:681px;font-size:24px;transform:scaleX(0.9138)">Eco2.User</div>
<div class="t" style="left:2770.1px;top:714px;font-size:24px;transform:scaleX(0.9491)">Edge.Cuts</div>
<div class="t" style="left:2769.9px;top:747px;font-size:24px;transform:scaleX(1.0565)">Margin</div>
<div class="t" style="left:2770.2px;top:780px;font-size:24px;transform:scaleX(0.9211)">F.CrtYd</div>
<div class="t" style="left:2770.2px;top:813px;font-size:24px;transform:scaleX(0.9038)">B.CrtYd</div>
<div class="t" style="left:2770.2px;top:846px;font-size:24px;transform:scaleX(0.9143)">F.Fab</div>
<div class="t" style="left:2770.2px;top:879px;font-size:24px;transform:scaleX(0.8867)">B.Fab</div><svg class="a" style="left:40px;top:177px" width="2578" height="1601" viewBox="40 177 2578 1601"><polyline points="1222.6,676.0 1222.6,497.5 1326.1,497.5 1327.2,499.2 1327.2,529.3 1364.5,529.3" fill="none" stroke="#c00000" stroke-width="1.0"/>
<polyline points="1261.5,513.4 1297.7,513.4 1308.6,523.8 1308.6,590.0" fill="none" stroke="#c00000" stroke-width="1.0"/>
<polyline points="1137.0,517.0 1154.0,517.0" fill="none" stroke="#c00000" stroke-width="1.0"/>
<polyline points="1047.0,538.0 1088.3,552.0 1124.4,552.0 1127.5,548.0 1127.5,540.0" fill="none" stroke="#c00000" stroke-width="1.0"/>
<polyline points="1088.9,552.0 1088.9,561.7 1068.3,569.6" fill="none" stroke="#c00000" stroke-width="1.0"/>
<polyline points="1075.6,570.0 1075.6,635.3 1061.7,639.5 1040.0,639.5" fill="none" stroke="#c00000" stroke-width="1.0"/>
<polyline points="1092.5,571.8 1092.5,625.6 1134.7,667.9" fill="none" stroke="#c00000" stroke-width="1.0"/>
<polyline points="1040.0,676.9 1194.4,676.9 1212.5,695.6 1212.5,726.6" fill="none" stroke="#c00000" stroke-width="1.0"/>
<polyline points="1222.1,655.8 1218.5,658.8 1167.9,658.8" fill="none" stroke="#c00000" stroke-width="1.0"/>
<polyline points="1137.7,691.7 1119.6,719.7" fill="none" stroke="#c00000" stroke-width="1.0"/>
<polyline points="1059.3,702.4 1072.0,714.5 1108.5,714.5" fill="none" stroke="#c00000" stroke-width="1.0"/>
<polyline points="1133.5,720.3 1141.3,728.3 1141.3,817.0 1153.4,817.0" fill="none" stroke="#c00000" stroke-width="1.0"/>
<polyline points="1140.0,700.0 1110.6,729.6 1110.6,1010.0" fill="none" stroke="#c00000" stroke-width="1.0"/>
<polyline points="1165.5,755.5 1240.0,755.5 1245.0,750.0" fill="none" stroke="#c00000" stroke-width="1.0"/>
<polyline points="1116.6,821.4 1116.6,960.0" fill="none" stroke="#c00000" stroke-width="1.0"/>
<polyline points="1161.2,828.5 1161.2,846.6 1164.2,867.0 1176.3,880.0 1176.3,960.0" fill="none" stroke="#c00000" stroke-width="1.0"/>
<polyline points="1080.4,817.3 1075.0,812.2 1061.7,812.0" fill="none" stroke="#c00000" stroke-width="1.0"/>
<polyline points="1308.7,590.0 1308.7,1000.0" fill="none" stroke="#c00000" stroke-width="1.0"/>
<polyline points="1366.0,520.0 1366.0,817.6 1340.7,834.5 1335.0,880.0 1335.0,960.0" fill="none" stroke="#c00000" stroke-width="1.0"/>
<polyline points="1267.5,824.2 1300.2,826.2" fill="none" stroke="#c00000" stroke-width="1.0"/>
<polyline points="1222.5,676.0 1222.5,960.0" fill="none" stroke="#c00000" stroke-width="1.0"/>
<polyline points="1165.0,523.3 1183.7,542.5 1202.3,542.5 1231.9,564.4 1231.9,574.0" fill="none" stroke="#00a000" stroke-width="1.0"/>
<polyline points="1183.7,542.5 1183.7,574.0" fill="none" stroke="#00a000" stroke-width="1.0"/>
<polyline points="1183.5,623.0 1183.5,1000.0" fill="none" stroke="#00a000" stroke-width="1.0"/>
<polyline points="1194.6,523.8 1194.6,527.0 1223.1,556.7 1223.1,680.0" fill="none" stroke="#c00000" stroke-width="1.0"/>
<polyline points="1080.5,557.2 1092.4,571.8" fill="none" stroke="#00a000" stroke-width="1.0"/>
<polyline points="1060.5,623.3 1078.6,638.9 1078.6,809.2 1054.5,833.9 1040.0,837.5" fill="none" stroke="#00a000" stroke-width="1.0"/>
<polyline points="1191.7,698.0 1240.0,651.0 1272.6,620.0" fill="none" stroke="#00a000" stroke-width="1.0"/>
<polyline points="1191.7,698.0 1191.7,1000.0" fill="none" stroke="#00a000" stroke-width="1.0"/>
<polyline points="1108.5,714.5 1116.0,721.7 1133.5,721.0" fill="none" stroke="#00a000" stroke-width="1.0"/>
<polyline points="1080.4,817.3 1114.2,817.0 1117.6,821.4" fill="none" stroke="#00a000" stroke-width="1.0"/>
<polyline points="1117.2,852.6 1143.7,880.0 1172.3,903.7" fill="none" stroke="#00a000" stroke-width="1.0"/>
<polyline points="1212.4,726.6 1221.5,735.6 1278.0,735.6" fill="none" stroke="#00a000" stroke-width="1.0"/>
<polyline points="1213.6,863.3 1240.0,861.6 1347.8,861.6" fill="none" stroke="#00a000" stroke-width="1.0"/>
<polyline points="1327.0,655.0 1357.6,680.7 1356.4,692.2" fill="none" stroke="#00a000" stroke-width="1.0"/>
<polyline points="1327.0,693.0 1337.0,693.0 1352.9,707.0 1352.9,842.0 1348.2,843.9 1348.2,861.0" fill="none" stroke="#00a000" stroke-width="1.0"/>
<polyline points="1371.7,500.0 1371.7,650.0 1369.8,654.4 1369.8,1100.0" fill="none" stroke="#00a000" stroke-width="1.0"/>
<polyline points="1300.2,826.2 1303.2,830.5" fill="none" stroke="#00a000" stroke-width="1.0"/>
<polyline points="1293.0,590.0 1300.0,583.0 1320.0,583.0" fill="none" stroke="#00a000" stroke-width="1.0"/>
<polyline points="1038.6,938.5 1038.6,1094.6 1043.5,1094.6" fill="none" stroke="#c00000" stroke-width="1.0"/>
<polyline points="1038.6,1094.6 1038.6,1130.0 1055.0,1145.0" fill="none" stroke="#c00000" stroke-width="1.0"/>
<polyline points="1172.3,903.7 1240.0,903.7 1309.0,903.7" fill="none" stroke="#c00000" stroke-width="1.0"/>
<polyline points="1172.3,927.3 1205.4,925.2" fill="none" stroke="#c00000" stroke-width="1.0"/>
<polyline points="1169.3,940.6 1203.3,942.5" fill="none" stroke="#c00000" stroke-width="1.0"/>
<polyline points="1198.4,892.4 1201.8,905.3" fill="none" stroke="#c00000" stroke-width="1.0"/>
<polyline points="1201.8,905.3 1180.0,905.0 1100.0,905.0" fill="none" stroke="#c00000" stroke-width="1.0"/>
<polyline points="1205.4,925.2 1150.0,925.2" fill="none" stroke="#c00000" stroke-width="1.0"/>
<polyline points="1203.3,942.5 1150.0,942.5" fill="none" stroke="#c00000" stroke-width="1.0"/>
<polyline points="1234.6,919.4 1225.0,929.0 1225.0,1003.0" fill="none" stroke="#c00000" stroke-width="1.0"/>
<polyline points="1265.5,896.3 1250.0,910.0 1250.0,965.0" fill="none" stroke="#c00000" stroke-width="1.0"/>
<polyline points="1300.2,914.5 1320.0,930.0 1325.0,1000.0 1340.0,1010.0 1347.8,1032.5" fill="none" stroke="#c00000" stroke-width="1.0"/>
<polyline points="1082.3,1003.0 1095.0,990.0 1110.0,975.0" fill="none" stroke="#c00000" stroke-width="1.0"/>
<polyline points="1104.4,1006.4 1120.0,990.0 1130.0,975.0" fill="none" stroke="#c00000" stroke-width="1.0"/>
<polyline points="1043.2,1020.2 1082.0,1020.0 1095.0,1012.0 1130.0,1012.0" fill="none" stroke="#c00000" stroke-width="1.0"/>
<polyline points="1081.6,1027.0 1081.6,1090.0" fill="none" stroke="#c00000" stroke-width="1.0"/>
<polyline points="1090.0,1029.0 1090.0,1120.0 1110.0,1137.0 1160.0,1137.0 1175.0,1150.0" fill="none" stroke="#c00000" stroke-width="1.0"/>
<polyline points="1149.7,1070.2 1170.0,1090.0" fill="none" stroke="#c00000" stroke-width="1.0"/>
<polyline points="1205.5,1070.0 1230.0,1095.0 1260.0,1120.0 1290.0,1140.0" fill="none" stroke="#c00000" stroke-width="1.0"/>
<polyline points="1281.1,1030.1 1320.0,1035.0 1330.0,1060.0 1330.0,1130.0" fill="none" stroke="#c00000" stroke-width="1.0"/>
<polyline points="1257.0,1125.0 1240.0,1135.0 1190.0,1135.0" fill="none" stroke="#c00000" stroke-width="1.0"/>
<polyline points="1302.0,1131.5 1330.0,1150.0 1330.0,1250.0" fill="none" stroke="#c00000" stroke-width="1.0"/>
<polyline points="1210.3,1046.2 1200.0,1060.0 1150.0,1060.0" fill="none" stroke="#c00000" stroke-width="1.0"/>
<polyline points="1281.5,1030.3 1240.0,1030.3" fill="none" stroke="#c00000" stroke-width="1.0"/>
<polyline points="1324.6,1105.4 1340.0,1120.0 1347.8,1118.0" fill="none" stroke="#c00000" stroke-width="1.0"/>
<polyline points="1301.4,1113.3 1320.0,1113.0 1345.0,1090.0" fill="none" stroke="#c00000" stroke-width="1.0"/>
<polyline points="1201.4,1031.4 1185.0,1050.0 1170.0,1070.0 1150.0,1070.0" fill="none" stroke="#00a000" stroke-width="1.0"/>
<polyline points="1210.2,1046.2 1230.0,1060.0 1250.0,1055.0" fill="none" stroke="#00a000" stroke-width="1.0"/>
<polyline points="1043.5,1094.6 1060.0,1105.0 1110.0,1105.0 1150.0,1070.0 1149.7,1070.2" fill="none" stroke="#00a000" stroke-width="1.0"/>
<polyline points="1120.0,1120.0 1055.0,1120.0 1043.4,1130.0" fill="none" stroke="#00a000" stroke-width="1.0"/>
<polyline points="1282.0,1108.1 1295.0,1095.0 1298.0,1090.4" fill="none" stroke="#00a000" stroke-width="1.0"/>
<polyline points="1259.4,1085.1 1255.0,1100.0 1240.0,1115.0 1230.0,1125.0 1230.0,1150.0" fill="none" stroke="#00a000" stroke-width="1.0"/>
<polyline points="1278.2,1083.2 1278.0,1060.0 1290.0,1056.0" fill="none" stroke="#00a000" stroke-width="1.0"/>
<polyline points="1126.7,1177.3 1080.0,1220.0 1070.0,1232.0 1062.0,1232.5" fill="none" stroke="#00a000" stroke-width="1.0"/>
<polyline points="1309.8,1205.2 1309.8,1260.0 1340.0,1270.0 1360.0,1270.0" fill="none" stroke="#00a000" stroke-width="1.0"/>
<polyline points="1198.4,1225.5 1180.0,1225.5 1070.0,1330.0" fill="none" stroke="#00a000" stroke-width="1.0"/>
<polyline points="1207.3,1202.2 1220.0,1170.0 1225.0,1140.0" fill="none" stroke="#00a000" stroke-width="1.0"/>
<polyline points="1230.0,1210.0 1245.0,1205.0 1280.0,1205.0 1295.0,1212.0 1310.0,1230.0" fill="none" stroke="#00a000" stroke-width="1.0"/>
<polyline points="1327.8,1228.8 1327.8,1180.0 1340.0,1150.0 1347.8,1147.0" fill="none" stroke="#00a000" stroke-width="1.0"/>
<polyline points="1054.3,1281.7 1035.0,1262.0 1035.0,1200.0" fill="none" stroke="#c00000" stroke-width="1.0"/>
<polyline points="1098.5,1344.7 1140.0,1344.7 1150.0,1340.0" fill="none" stroke="#c00000" stroke-width="1.0"/>
<polyline points="1153.7,1392.3 1200.0,1392.0 1260.0,1392.0" fill="none" stroke="#c00000" stroke-width="1.0"/>
<polyline points="1098.0,1405.6 1085.0,1420.0 1085.0,1470.0" fill="none" stroke="#c00000" stroke-width="1.0"/>
<polyline points="1141.3,1405.2 1155.0,1395.0" fill="none" stroke="#c00000" stroke-width="1.0"/>
<polyline points="1182.9,1426.3 1160.0,1445.0 1140.0,1470.0 1140.0,1480.0" fill="none" stroke="#c00000" stroke-width="1.0"/>
<polyline points="1201.8,1384.2 1225.0,1384.0 1250.0,1384.0" fill="none" stroke="#c00000" stroke-width="1.0"/>
<polyline points="1216.1,1408.6 1245.0,1408.6 1260.0,1420.0" fill="none" stroke="#c00000" stroke-width="1.0"/>
<polyline points="1263.8,1352.1 1250.0,1340.0 1250.0,1330.0" fill="none" stroke="#c00000" stroke-width="1.0"/>
<polyline points="1309.8,1405.2 1309.8,1470.0 1300.0,1485.0" fill="none" stroke="#c00000" stroke-width="1.0"/>
<polyline points="1318.6,1262.5 1300.0,1280.0 1270.0,1300.0 1200.0,1300.0 1150.0,1300.0" fill="none" stroke="#c00000" stroke-width="1.0"/>
<polyline points="1361.4,1279.5 1350.0,1290.0 1340.0,1300.0" fill="none" stroke="#c00000" stroke-width="1.0"/>
<polyline points="1040.0,1470.0 1070.0,1470.0 1100.0,1475.0 1130.0,1475.0" fill="none" stroke="#c00000" stroke-width="1.0"/>
<polyline points="1069.3,1365.8 1055.0,1380.0" fill="none" stroke="#c00000" stroke-width="1.0"/>
<polyline points="1054.3,1281.7 1094.0,1281.7 1094.0,1290.0" fill="none" stroke="#00a000" stroke-width="1.0"/>
<polyline points="1038.6,1348.5 1030.0,1360.0 1030.0,1440.0" fill="none" stroke="#00a000" stroke-width="1.0"/>
<polyline points="1034.7,1374.2 1050.0,1390.0 1060.0,1420.0" fill="none" stroke="#00a000" stroke-width="1.0"/>
<polyline points="1064.2,1372.7 1085.0,1372.7" fill="none" stroke="#00a000" stroke-width="1.0"/>
<polyline points="1096.6,1377.1 1080.0,1395.0 1070.0,1420.0" fill="none" stroke="#00a000" stroke-width="1.0"/>
<polyline points="1122.4,1384.2 1100.0,1400.0" fill="none" stroke="#00a000" stroke-width="1.0"/>
<polyline points="1311.3,1339.2 1300.0,1350.0 1280.0,1360.0" fill="none" stroke="#00a000" stroke-width="1.0"/>
<polyline points="1357.7,1337.0 1340.0,1340.0" fill="none" stroke="#00a000" stroke-width="1.0"/>
<polyline points="1264.8,1361.4 1290.0,1362.0 1320.0,1362.0" fill="none" stroke="#00a000" stroke-width="1.0"/>
<polyline points="1309.8,1359.4 1309.8,1400.0" fill="none" stroke="#00a000" stroke-width="1.0"/>
<polyline points="1309.8,1437.3 1309.8,1480.0 1330.0,1495.0 1350.0,1495.0" fill="none" stroke="#00a000" stroke-width="1.0"/>
<polyline points="1216.1,1408.6 1216.0,1440.0" fill="none" stroke="#00a000" stroke-width="1.0"/>
<polyline points="1349.0,1420.0 1348.0,1442.5" fill="none" stroke="#00a000" stroke-width="1.0"/>
<polyline points="1200.0,1470.0 1230.0,1470.0 1260.0,1490.0 1290.0,1490.0" fill="none" stroke="#00a000" stroke-width="1.0"/>
<polyline points="1111.3,1203.3 1079.9,1233.3 1062.0,1233.3" fill="none" stroke="#00a000" stroke-width="1.0"/>
<polyline points="1051.4,1234.7 1043.4,1239.9 1043.4,1330.0" fill="none" stroke="#00a000" stroke-width="1.0"/>
<polyline points="1054.3,1282.2 1082.8,1282.2 1082.8,1290.0" fill="none" stroke="#00a000" stroke-width="1.0"/>
<polyline points="1198.3,1225.2 1149.3,1225.2 1114.2,1261.0 1114.2,1340.0" fill="none" stroke="#00a000" stroke-width="1.0"/>
<polyline points="1191.0,1167.5 1191.0,1196.8 1253.8,1258.0 1253.8,1320.0" fill="none" stroke="#00a000" stroke-width="1.0"/>
<polyline points="1207.8,1201.9 1217.3,1193.1 1217.3,1140.0" fill="none" stroke="#00a000" stroke-width="1.0"/>
<polyline points="1243.6,1203.0 1248.0,1207.0 1299.0,1207.0 1310.0,1218.7 1367.0,1218.7 1367.0,1150.0" fill="none" stroke="#00a000" stroke-width="1.0"/>
<polyline points="1310.0,1205.5 1310.0,1296.0" fill="none" stroke="#00a000" stroke-width="1.0"/>
<polyline points="1327.6,1228.8 1327.6,1254.5 1318.8,1262.5" fill="none" stroke="#00a000" stroke-width="1.0"/>
<polyline points="1312.2,1100.0 1312.2,1205.0" fill="none" stroke="#00a000" stroke-width="1.0"/>
<polyline points="1062.0,1261.8 1245.7,1261.8 1283.0,1227.4 1283.0,1180.0" fill="none" stroke="#c00000" stroke-width="1.0"/>
<polyline points="1198.3,1225.2 1208.5,1215.0 1207.8,1201.9" fill="none" stroke="#c00000" stroke-width="1.0"/>
<polyline points="1036.0,1150.0 1036.0,1264.0 1054.3,1282.2" fill="none" stroke="#c00000" stroke-width="1.0"/>
<polyline points="1319.5,1150.0 1319.5,1250.8 1334.0,1261.8 1347.8,1261.8" fill="none" stroke="#c00000" stroke-width="1.0"/>
<polyline points="1361.2,1279.3 1302.0,1302.7 1265.5,1318.0" fill="none" stroke="#c00000" stroke-width="1.0"/>
<polyline points="1120.8,1307.0 1127.4,1299.8 1205.6,1299.8 1205.6,1330.0" fill="none" stroke="#c00000" stroke-width="1.0"/>
<polyline points="1347.8,1232.5 1363.4,1243.5 1364.8,1277.0" fill="none" stroke="#c00000" stroke-width="1.0"/>
<polyline points="1297.6,1157.3 1319.5,1171.9" fill="none" stroke="#c00000" stroke-width="1.0"/>
<polyline points="1282.3,1150.0 1282.3,1161.7" fill="none" stroke="#c00000" stroke-width="1.0"/>
<polyline points="1265.5,896.3 1257.0,890.0 1257.0,870.0 1245.0,855.0" fill="none" stroke="#c00000" stroke-width="1.0"/>
<polyline points="1300.2,914.5 1260.0,914.5 1245.0,925.0 1245.0,960.0 1255.0,975.0 1270.0,985.0" fill="none" stroke="#c00000" stroke-width="1.0"/>
<polyline points="1213.6,863.3 1200.0,850.0 1190.0,860.0" fill="none" stroke="#c00000" stroke-width="1.0"/>
<polyline points="1201.8,905.3 1240.0,905.3 1260.0,920.0 1280.0,940.0 1300.0,960.0 1330.0,960.0 1340.0,975.0" fill="none" stroke="#00a000" stroke-width="1.0"/>
<polyline points="1234.6,919.4 1250.0,919.4 1262.0,908.0 1300.0,908.0 1320.0,893.0 1347.8,890.0" fill="none" stroke="#00a000" stroke-width="1.0"/>
<polyline points="1260.4,924.8 1270.0,935.0 1290.0,955.0 1327.0,958.0" fill="none" stroke="#00a000" stroke-width="1.0"/>
<polyline points="1205.4,925.2 1215.0,935.0 1215.0,980.0 1230.0,1000.0" fill="none" stroke="#00a000" stroke-width="1.0"/>
<polyline points="1203.3,942.5 1190.0,955.0 1190.0,990.0" fill="none" stroke="#00a000" stroke-width="1.0"/>
<polyline points="1267.5,945.5 1280.0,960.0 1300.0,975.0 1327.0,975.0" fill="none" stroke="#c00000" stroke-width="1.0"/>
<polyline points="1296.0,955.0 1320.0,955.0 1340.0,975.0 1347.8,976.0" fill="none" stroke="#c00000" stroke-width="1.0"/>
<polyline points="1265.5,896.3 1275.0,910.0 1300.0,935.0 1320.0,955.0" fill="none" stroke="#00a000" stroke-width="1.0"/>
<polyline points="1117.0,1150.0 1117.0,1160.0" fill="none" stroke="#c00000" stroke-width="1.0"/>
<polyline points="1040.0,860.0 1028.0,870.0 1028.0,1050.0 1040.0,1060.0" fill="none" stroke="#00a000" stroke-width="1.0"/>
<polyline points="1036.0,940.0 1036.0,1100.0" fill="none" stroke="#c00000" stroke-width="1.0"/>
<polyline points="1025.0,1346.6 1025.0,1468.9 1031.5,1474.0 1081.0,1474.0 1101.5,1463.8" fill="none" stroke="#c00000" stroke-width="1.0"/>
<polyline points="1101.5,1471.4 1146.0,1471.4 1150.0,1462.5 1150.0,1428.0" fill="none" stroke="#c00000" stroke-width="1.0"/>
<polyline points="1096.4,1377.1 1111.7,1353.0 1198.3,1353.0" fill="none" stroke="#c00000" stroke-width="1.0"/>
<polyline points="1093.9,1389.2 1199.6,1389.2" fill="none" stroke="#c00000" stroke-width="1.0"/>
<polyline points="1029.6,1340.0 1029.6,1372.0 1040.4,1381.0" fill="none" stroke="#00a000" stroke-width="1.0"/>
<polyline points="1039.7,1465.0 1047.4,1472.7 1047.4,1486.7 1068.4,1505.8" fill="none" stroke="#00a000" stroke-width="1.0"/>
<polyline points="1057.0,1477.8 1138.5,1477.8 1150.0,1465.0 1160.0,1440.0" fill="none" stroke="#00a000" stroke-width="1.0"/>
<polyline points="1114.3,1290.0 1114.3,1398.8" fill="none" stroke="#00a000" stroke-width="1.0"/>
<polyline points="1068.4,1433.2 1096.4,1405.2" fill="none" stroke="#00a000" stroke-width="1.0"/>
<polyline points="1076.0,1424.3 1099.0,1401.0" fill="none" stroke="#00a000" stroke-width="1.0"/>
<polyline points="1066.5,1416.6 1066.5,1433.0" fill="none" stroke="#00a000" stroke-width="1.0"/>
<polyline points="1040.0,1380.0 1040.0,1440.0 1060.0,1460.0" fill="none" stroke="#c00000" stroke-width="1.0"/>
<polyline points="1183.0,1426.8 1200.0,1425.0 1240.0,1420.0" fill="none" stroke="#00a000" stroke-width="1.0"/>
<polyline points="1236.0,1440.0 1262.0,1440.0 1262.0,1420.0" fill="none" stroke="#c00000" stroke-width="1.0"/>
<polyline points="1290.0,1486.0 1230.0,1486.0 1215.0,1472.0" fill="none" stroke="#00a000" stroke-width="1.0"/>
<polyline points="894.0,490.0 894.0,1512.0" fill="none" stroke="#c8c8c8" stroke-width="3"/>
<polyline points="887.0,504.0 894.0,490.0 901.0,504.0" fill="none" stroke="#c8c8c8" stroke-width="3"/>
<polyline points="887.0,1498.0 894.0,1512.0 901.0,1498.0" fill="none" stroke="#c8c8c8" stroke-width="3"/>
<polyline points="863.0,489.0 1020.0,489.0" fill="none" stroke="#c8c8c8" stroke-width="3"/>
<polyline points="863.0,1513.0 1020.0,1513.0" fill="none" stroke="#c8c8c8" stroke-width="3"/>
<polyline points="1020.0,1513.0 1020.0,1611.0" fill="none" stroke="#c8c8c8" stroke-width="3"/>
<polyline points="1374.0,1513.0 1374.0,1611.0" fill="none" stroke="#c8c8c8" stroke-width="3"/>
<polyline points="1020.0,1580.0 1374.0,1580.0" fill="none" stroke="#c8c8c8" stroke-width="3"/>
<polyline points="1034.0,1573.0 1020.0,1580.0 1034.0,1587.0" fill="none" stroke="#c8c8c8" stroke-width="3"/>
<polyline points="1360.0,1573.0 1374.0,1580.0 1360.0,1587.0" fill="none" stroke="#c8c8c8" stroke-width="3"/>
<path transform="translate(1196.5,1594.0)" d="M-71.5 -9.0 L-61.1 -9.0 L-67.2 -1.8 L-64.6 -1.8 L-61.7 -0.4 L-60.5 3.6 L-61.7 7.2 L-64.0 9.0 L-68.9 9.0 L-71.5 7.6 M-53.2 -5.4 L-48.3 -9.0 L-48.3 9.0 M-53.2 9.0 L-43.3 9.0 M-34.7 7.7 L-34.7 9.5 L-35.8 11.9 M-18.7 9.0 L-18.7 -9.0 L-27.4 3.6 L-14.8 3.6 M-9.5 -9.0 L2.8 -9.0 L-5.5 9.0 M19.1 -9.0 L10.2 -9.0 L9.3 -0.7 L11.6 -1.8 L15.2 -1.8 L18.3 -0.4 L20.1 2.7 L20.1 5.4 L18.3 8.1 L15.2 9.0 L12.2 9.0 L9.3 7.2 M39.2 -2.3 L39.2 9.0 M39.2 0.0 L41.2 -2.0 L43.5 -2.0 L45.5 0.0 L45.5 9.0 M45.5 0.0 L47.5 -2.0 L49.8 -2.0 L51.8 0.0 L51.8 9.0 M58.9 -2.3 L58.9 9.0 M58.9 0.0 L60.9 -2.0 L63.2 -2.0 L65.2 0.0 L65.2 9.0 M65.2 0.0 L67.2 -2.0 L69.5 -2.0 L71.5 0.0 L71.5 9.0" fill="none" stroke="#c8c8c8" stroke-width="2.79" stroke-linecap="round" stroke-linejoin="round"/>
<rect x="1070.4" y="490.0" width="18.1" height="52.0" fill="none" stroke="#c8c860" stroke-width="1.2"/>
<rect x="1071.9" y="491.5" width="15.1" height="49.0" fill="#9a9a2a"/>
<rect x="1094.4" y="496.5" width="18.3" height="46.0" fill="none" stroke="#30b030" stroke-width="1.2"/>
<rect x="1095.9" y="498.0" width="15.3" height="43.0" fill="#009000"/>
<rect x="1118.3" y="490.0" width="19.2" height="52.0" fill="none" stroke="#c8c860" stroke-width="1.2"/>
<rect x="1119.8" y="491.5" width="16.2" height="49.0" fill="#9a9a2a"/>
<rect x="1100.8" y="540.0" width="8.8" height="100.0" fill="#009000"/>
<path transform="translate(1105.5,581.8) rotate(-90)" d="M-39.8 4.0 L-39.8 -4.0 L-36.1 4.0 L-36.1 -4.0 M-33.6 1.6 L-30.4 1.6 L-30.4 0.6 L-30.8 -0.6 L-31.6 -1.1 L-32.4 -1.1 L-33.3 -0.6 L-33.6 0.4 L-33.6 2.4 L-33.3 3.6 L-32.4 4.0 L-31.5 4.0 L-30.6 3.5 M-27.3 -3.4 L-27.3 3.1 L-26.8 3.9 L-25.8 4.0 M-28.3 -1.1 L-25.8 -1.1 M-23.7 0.0 L-20.7 0.0 M-17.0 -4.5 L-17.8 -2.8 L-18.3 -0.8 L-18.3 1.2 L-17.8 3.2 L-17.0 4.9 M-15.0 4.0 L-12.7 -4.0 L-10.4 4.0 M-14.2 1.3 L-11.2 1.3 M-8.4 4.0 L-8.4 -4.0 L-4.7 4.0 L-4.7 -4.0 M-2.7 -4.0 L1.8 -4.0 M-0.5 -4.0 L-0.5 4.0 M3.9 -2.4 L5.6 -4.0 L5.6 4.0 M3.9 4.0 L7.2 4.0 M9.8 0.0 L12.8 0.0 M15.3 4.0 L15.3 -4.0 L17.6 -4.0 L18.6 -3.4 L19.1 -2.0 L18.6 -0.4 L17.6 0.2 L15.3 0.2 M24.5 -1.1 L24.5 4.0 M24.4 0.0 L23.7 -0.8 L23.1 -1.1 L22.4 -1.1 L21.6 -0.6 L21.3 0.4 L21.3 2.4 L21.6 3.6 L22.4 4.0 L23.1 4.0 L23.7 3.7 L24.4 2.8 M30.0 -4.0 L30.0 4.0 M29.9 0.0 L29.2 -0.8 L28.6 -1.1 L27.9 -1.1 L27.1 -0.6 L26.8 0.4 L26.8 2.4 L27.1 3.6 L27.9 4.0 L28.6 4.0 L29.2 3.7 L29.9 2.8 M32.5 -2.4 L34.2 -4.0 L34.2 4.0 M32.5 4.0 L35.9 4.0 M38.5 -4.5 L39.3 -2.8 L39.8 -0.8 L39.8 1.2 L39.3 3.2 L38.5 4.9" fill="none" stroke="#f0f0f0" stroke-width="1.26" stroke-linecap="round" stroke-linejoin="round"/>
<path transform="translate(1076.5,516.5) rotate(-90)" d="M-4.1 -2.1 L-4.7 -2.8 L-5.7 -3.0 L-6.3 -3.0 L-7.3 -2.4 L-7.7 -1.2 L-7.7 1.2 L-7.3 2.4 L-6.3 3.0 L-5.4 3.0 L-4.4 2.5 L-3.9 1.8 L-3.9 0.3 L-5.7 0.3 M-1.8 3.0 L-1.8 -3.0 L1.8 3.0 L1.8 -3.0 M4.0 3.0 L4.0 -3.0 L5.6 -3.0 L6.7 -2.5 L7.4 -1.5 L7.7 0.0 L7.4 1.5 L6.7 2.5 L5.6 3.0 L4.0 3.0" fill="none" stroke="#f0f0f0" stroke-width="1.00" stroke-linecap="round" stroke-linejoin="round"/>
<path transform="translate(1082.5,517.5) rotate(-90)" d="M-2.5 -2.5 L2.2 -2.5 L-0.5 -0.5 L0.6 -0.5 L2.0 -0.1 L2.5 1.0 L2.0 2.0 L0.9 2.5 L-1.3 2.5 L-2.5 2.1" fill="none" stroke="#f0f0f0" stroke-width="1.00" stroke-linecap="round" stroke-linejoin="round"/>
<path transform="translate(1124.0,516.5) rotate(-90)" d="M-4.1 -2.1 L-4.7 -2.8 L-5.7 -3.0 L-6.3 -3.0 L-7.3 -2.4 L-7.7 -1.2 L-7.7 1.2 L-7.3 2.4 L-6.3 3.0 L-5.4 3.0 L-4.4 2.6 L-3.9 1.8 L-3.9 0.3 L-5.7 0.3 M-1.8 3.0 L-1.8 -3.0 L1.8 3.0 L1.8 -3.0 M4.0 3.0 L4.0 -3.0 L5.6 -3.0 L6.7 -2.5 L7.4 -1.5 L7.7 0.0 L7.4 1.5 L6.7 2.5 L5.6 3.0 L4.0 3.0" fill="none" stroke="#f0f0f0" stroke-width="1.00" stroke-linecap="round" stroke-linejoin="round"/>
<path transform="translate(1130.5,517.5) rotate(-90)" d="M-2.5 -2.5 L2.2 -2.5 L-0.5 -0.5 L0.6 -0.5 L2.0 -0.1 L2.5 1.0 L2.0 2.0 L0.9 2.5 L-1.3 2.5 L-2.5 2.1" fill="none" stroke="#f0f0f0" stroke-width="1.00" stroke-linecap="round" stroke-linejoin="round"/>
<path transform="translate(1107.3,518.0) rotate(-90)" d="M-3.0 -1.6 L0.0 -2.6 L0.0 2.6 M-3.0 2.6 L3.0 2.6" fill="none" stroke="#f0f0f0" stroke-width="1.00" stroke-linecap="round" stroke-linejoin="round"/>
<path transform="translate(1104.3,442.1) scale(-1,1)" d="M-28.7 8.8 L-22.8 -8.8 L-16.9 8.8 M-26.6 2.8 L-19.0 2.8 M-11.8 8.8 L-11.8 -8.8 L-2.1 8.8 L-2.1 -8.8 M2.9 -8.8 L14.7 -8.8 M8.8 -8.8 L8.8 8.8 M20.1 -5.3 L24.4 -8.8 L24.4 8.8 M20.1 8.8 L28.7 8.8" fill="none" stroke="#b8b8b8" stroke-width="2.74" stroke-linecap="round" stroke-linejoin="round"/>
<path transform="translate(1102.5,467.9) scale(-1,1)" d="M-48.6 -5.3 L-50.6 -8.0 L-53.4 -8.9 L-55.7 -8.9 L-58.7 -7.1 L-60.0 -3.6 L-60.0 3.6 L-58.7 7.1 L-55.7 8.9 L-53.4 8.9 L-50.6 8.0 L-48.6 5.3 M-37.6 -8.9 L-40.6 -7.1 L-42.0 -3.6 L-42.0 3.6 L-40.6 7.1 L-37.6 8.9 L-34.7 8.9 L-31.7 7.1 L-30.4 3.6 L-30.4 -3.6 L-31.7 -7.1 L-34.7 -8.9 L-37.6 -8.9 M-23.5 8.9 L-23.5 -8.9 L-12.5 8.9 L-12.5 -8.9 M-5.4 0.0 L3.4 0.0 M21.3 -6.2 L19.4 -8.4 L16.4 -8.9 L14.4 -8.9 L11.5 -8.0 L10.1 -5.7 L10.1 -3.6 L11.5 -1.4 L14.4 -0.4 L18.0 0.7 L20.7 2.3 L21.9 5.0 L20.9 7.7 L18.0 8.9 L14.4 8.9 L11.5 8.0 L9.5 6.2 M28.6 8.9 L28.6 -8.9 L34.7 3.6 L40.8 -8.9 L40.8 8.9 M46.7 8.9 L53.4 -8.9 L60.0 8.9 M49.0 2.8 L57.7 2.8" fill="none" stroke="#b8b8b8" stroke-width="2.76" stroke-linecap="round" stroke-linejoin="round"/>
<path transform="translate(1219.8,455.0)" d="M-25.6 -7.0 L-27.5 -5.6 L-28.4 -2.8 L-28.4 2.8 L-27.5 5.6 L-25.6 7.0 L-23.8 7.0 L-21.9 5.6 L-21.0 2.8 L-21.0 -2.8 L-21.9 -5.6 L-23.8 -7.0 L-25.6 -7.0 M-16.0 -7.0 L-16.0 7.0 M-10.4 2.8 L-4.5 2.8 L-4.5 1.1 L-5.2 -1.0 L-6.7 -1.8 L-8.2 -1.8 L-9.8 -1.0 L-10.4 0.7 L-10.4 4.2 L-9.8 6.2 L-8.2 7.0 L-6.4 7.0 L-4.8 6.0 M5.4 -7.0 L5.4 7.0 M5.3 0.0 L4.1 -1.4 L2.8 -1.8 L1.6 -1.8 L0.1 -1.0 L-0.5 0.7 L-0.5 4.2 L0.1 6.2 L1.6 7.0 L2.8 7.0 L4.1 6.4 L5.3 4.9 M16.7 -2.1 L15.5 0.4 L13.6 1.4 L12.4 1.4 L10.5 0.4 L9.7 -1.7 L9.7 -3.5 L10.5 -5.9 L12.4 -7.0 L13.6 -7.0 L15.5 -5.9 L16.7 -2.8 L16.7 2.8 L15.5 5.9 L13.6 7.0 L11.8 7.0 L9.9 6.0 M27.4 -6.3 L25.5 -7.0 L24.3 -7.0 L22.4 -5.6 L21.2 -2.8 L21.2 2.8 L22.4 6.0 L24.3 7.0 L26.1 7.0 L27.4 6.0 L28.4 3.5 L28.4 2.1 L27.4 -0.4 L26.1 -1.4 L24.3 -1.4 L22.4 -0.4 L21.2 2.1" fill="none" stroke="#c8c800" stroke-width="2.17" stroke-linecap="round" stroke-linejoin="round"/>
<circle cx="1164.7" cy="512.2" r="10.2" fill="none" stroke="#b0b030" stroke-width="1.0"/>
<circle cx="1164.7" cy="512.2" r="9.0" fill="#9a9a2a"/>
<circle cx="1164.7" cy="512.2" r="4.2" fill="#000"/>
<path transform="translate(1164.7,506.5)" d="M0.6 2.5 L0.6 -2.5 L-1.5 1.0 L1.5 1.0" fill="none" stroke="#f0f0f0" stroke-width="1.00" stroke-linecap="round" stroke-linejoin="round"/>
<path transform="translate(1164.7,517.0)" d="M-2.9 -1.8 L-3.4 -2.4 L-4.1 -2.5 L-4.5 -2.5 L-5.2 -2.0 L-5.5 -1.0 L-5.5 1.0 L-5.2 2.0 L-4.5 2.5 L-3.8 2.5 L-3.2 2.2 L-2.8 1.5 L-2.8 0.2 L-4.1 0.2 M-1.3 2.5 L-1.3 -2.5 L1.3 2.5 L1.3 -2.5 M2.9 2.5 L2.9 -2.5 L4.0 -2.5 L4.8 -2.1 L5.3 -1.2 L5.5 0.0 L5.3 1.2 L4.8 2.1 L4.0 2.5 L2.9 2.5" fill="none" stroke="#f0f0f0" stroke-width="1.00" stroke-linecap="round" stroke-linejoin="round"/>
<circle cx="1193.4" cy="512.2" r="10.2" fill="none" stroke="#b0b030" stroke-width="1.0"/>
<circle cx="1193.4" cy="512.2" r="9.0" fill="#9a9a2a"/>
<circle cx="1193.4" cy="512.2" r="4.2" fill="#000"/>
<path transform="translate(1193.4,506.5)" d="M-1.5 -2.5 L1.3 -2.5 L-0.3 -0.5 L0.4 -0.5 L1.2 -0.1 L1.5 1.0 L1.2 2.0 L0.5 2.5 L-0.8 2.5 L-1.5 2.1" fill="none" stroke="#f0f0f0" stroke-width="1.00" stroke-linecap="round" stroke-linejoin="round"/>
<path transform="translate(1193.4,517.0)" d="M-5.5 -2.5 L-3.8 2.5 L-2.1 -2.5 M1.5 -0.2 L1.0 -0.6 L0.3 -0.6 L-0.4 -0.4 L-0.7 0.2 L-0.7 1.5 L-0.4 2.2 L0.3 2.5 L1.0 2.5 L1.5 2.2 M5.5 -0.2 L5.0 -0.6 L4.3 -0.6 L3.6 -0.4 L3.3 0.2 L3.3 1.5 L3.6 2.2 L4.3 2.5 L5.0 2.5 L5.5 2.2" fill="none" stroke="#f0f0f0" stroke-width="1.00" stroke-linecap="round" stroke-linejoin="round"/>
<circle cx="1221.7" cy="512.2" r="10.2" fill="none" stroke="#b0b030" stroke-width="1.0"/>
<circle cx="1221.7" cy="512.2" r="9.0" fill="#9a9a2a"/>
<circle cx="1221.7" cy="512.2" r="4.2" fill="#000"/>
<path transform="translate(1221.7,506.5)" d="M-1.5 -1.5 L-1.0 -2.2 L-0.5 -2.5 L0.6 -2.5 L1.1 -2.1 L1.3 -1.2 L1.1 -0.5 L-1.5 2.5 L1.5 2.5" fill="none" stroke="#f0f0f0" stroke-width="1.00" stroke-linecap="round" stroke-linejoin="round"/>
<path transform="translate(1221.7,517.0)" d="M-2.8 -1.8 L-3.2 -2.4 L-3.9 -2.5 L-4.4 -2.5 L-5.0 -2.2 L-5.4 -1.6 L-5.4 -1.0 L-5.0 -0.4 L-4.4 -0.1 L-3.5 0.2 L-2.9 0.6 L-2.6 1.4 L-2.9 2.2 L-3.5 2.5 L-4.4 2.5 L-5.0 2.2 L-5.5 1.8 M1.5 -1.5 L1.0 -2.2 L0.4 -2.5 L-0.2 -2.5 L-0.9 -2.0 L-1.2 -1.0 L-1.2 1.0 L-0.9 2.0 L-0.2 2.5 L0.4 2.5 L1.0 2.2 L1.5 1.5 M3.1 -2.5 L3.1 2.5 L5.5 2.5" fill="none" stroke="#f0f0f0" stroke-width="1.00" stroke-linecap="round" stroke-linejoin="round"/>
<circle cx="1251.0" cy="512.2" r="10.2" fill="none" stroke="#b0b030" stroke-width="1.0"/>
<circle cx="1251.0" cy="512.2" r="9.0" fill="#9a9a2a"/>
<circle cx="1251.0" cy="512.2" r="4.2" fill="#000"/>
<path transform="translate(1251.0,506.5)" d="M-1.5 -1.5 L0.0 -2.5 L0.0 2.5 M-1.5 2.5 L1.5 2.5" fill="none" stroke="#f0f0f0" stroke-width="1.00" stroke-linecap="round" stroke-linejoin="round"/>
<path transform="translate(1251.0,517.0)" d="M-2.9 -1.8 L-3.3 -2.4 L-4.0 -2.5 L-4.4 -2.5 L-5.1 -2.2 L-5.4 -1.6 L-5.4 -1.0 L-5.1 -0.4 L-4.4 -0.1 L-3.6 0.2 L-3.0 0.6 L-2.7 1.4 L-3.0 2.2 L-3.6 2.5 L-4.4 2.5 L-5.1 2.2 L-5.5 1.8 M-1.2 2.5 L-1.2 -2.5 L-0.2 -2.5 L0.6 -2.1 L1.1 -1.2 L1.3 0.0 L1.1 1.2 L0.6 2.1 L-0.2 2.5 L-1.2 2.5 M2.5 2.5 L4.0 -2.5 L5.5 2.5 M3.0 0.8 L5.0 0.8" fill="none" stroke="#f0f0f0" stroke-width="1.00" stroke-linecap="round" stroke-linejoin="round"/>
<path transform="translate(1203.3,532.2)" d="M-59.1 -4.3 L-60.2 -5.8 L-61.9 -6.2 L-63.1 -6.2 L-64.8 -5.0 L-65.6 -2.5 L-65.6 2.5 L-64.8 5.0 L-63.1 6.2 L-61.4 6.2 L-59.6 5.3 L-58.7 3.7 L-58.7 0.6 L-61.9 0.6 M-54.8 -1.6 L-54.8 6.2 M-54.8 0.0 L-53.4 -1.2 L-52.1 -1.6 L-50.9 -1.6 L-49.8 -0.9 L-49.3 0.6 L-49.3 6.2 M-39.9 -6.2 L-39.9 6.2 M-40.1 0.0 L-41.2 -1.2 L-42.4 -1.6 L-43.5 -1.6 L-44.9 -0.9 L-45.5 0.6 L-45.5 3.7 L-44.9 5.5 L-43.5 6.2 L-42.4 6.2 L-41.2 5.7 L-40.1 4.3 M-29.5 -6.2 L-25.6 6.2 L-21.7 -6.2 M-13.1 -0.6 L-14.2 -1.6 L-16.0 -1.6 L-17.6 -0.9 L-18.3 0.6 L-18.3 3.7 L-17.6 5.5 L-16.0 6.2 L-14.2 6.2 L-13.1 5.3 M-3.8 -0.6 L-5.0 -1.6 L-6.7 -1.6 L-8.3 -0.9 L-9.0 0.6 L-9.0 3.7 L-8.3 5.5 L-6.7 6.2 L-5.0 6.2 L-3.8 5.3 M13.7 -4.3 L12.5 -5.8 L10.8 -6.2 L9.6 -6.2 L7.9 -5.6 L7.1 -4.0 L7.1 -2.5 L7.9 -1.0 L9.6 -0.2 L11.7 0.5 L13.3 1.6 L14.0 3.5 L13.4 5.3 L11.7 6.2 L9.6 6.2 L7.9 5.6 L6.7 4.3 M23.2 -0.6 L22.0 -1.6 L20.3 -1.6 L18.6 -0.9 L17.9 0.6 L17.9 3.7 L18.6 5.5 L20.3 6.2 L22.0 6.2 L23.2 5.3 M27.9 -6.2 L27.9 6.2 M46.5 -4.3 L45.4 -5.8 L43.7 -6.2 L42.5 -6.2 L40.8 -5.6 L39.9 -4.0 L39.9 -2.5 L40.8 -1.0 L42.5 -0.2 L44.6 0.5 L46.2 1.6 L46.9 3.5 L46.3 5.3 L44.6 6.2 L42.5 6.2 L40.8 5.6 L39.6 4.3 M56.2 -6.2 L56.2 6.2 M56.0 0.0 L54.9 -1.2 L53.7 -1.6 L52.6 -1.6 L51.2 -0.9 L50.6 0.6 L50.6 3.7 L51.2 5.5 L52.6 6.2 L53.7 6.2 L54.9 5.7 L56.0 4.3 M65.6 -1.6 L65.6 6.2 M65.5 0.0 L64.4 -1.2 L63.2 -1.6 L62.1 -1.6 L60.7 -0.9 L60.1 0.6 L60.1 3.7 L60.7 5.5 L62.1 6.2 L63.2 6.2 L64.4 5.7 L65.5 4.3" fill="none" stroke="#0fa0a4" stroke-width="1.92" stroke-linecap="round" stroke-linejoin="round"/>
<rect x="1120.5" y="574.0" width="22.1" height="49.8" fill="none" stroke="#20a020" stroke-width="1.2"/>
<rect x="1122.0" y="575.5" width="19.1" height="46.8" fill="#009000"/>
<rect x="1172.0" y="574.0" width="21.5" height="49.8" fill="none" stroke="#20a020" stroke-width="1.2"/>
<rect x="1173.5" y="575.5" width="18.5" height="46.8" fill="#009000"/>
<rect x="1220.0" y="574.0" width="23.0" height="49.8" fill="none" stroke="#20a020" stroke-width="1.2"/>
<rect x="1221.5" y="575.5" width="20.0" height="46.8" fill="#009000"/>
<rect x="1272.6" y="574.0" width="20.6" height="49.8" fill="none" stroke="#20a020" stroke-width="1.2"/>
<rect x="1274.1" y="575.5" width="17.6" height="46.8" fill="#009000"/>
<path transform="translate(1131.1,598.0) rotate(-90)" d="M-8.2 -3.9 L-5.3 -6.5 L-5.3 6.5 M-8.2 6.5 L-2.4 6.5 M2.4 -3.9 L5.3 -6.5 L5.3 6.5 M2.4 6.5 L8.2 6.5" fill="none" stroke="#f0f0f0" stroke-width="2.02" stroke-linecap="round" stroke-linejoin="round"/>
<path transform="translate(1178.0,596.0) rotate(-90)" d="M-6.0 -1.8 L-3.9 -3.0 L-3.9 3.0 M-6.0 3.0 L-1.8 3.0 M1.4 -1.2 L1.4 1.2 L2.2 2.4 L3.1 3.0 L4.3 3.0 L5.2 2.4 L6.0 1.2 L6.0 -1.2 L5.2 -2.4 L4.3 -3.0 L3.1 -3.0 L2.2 -2.4 L1.4 -1.2" fill="none" stroke="#f0f0f0" stroke-width="1.00" stroke-linecap="round" stroke-linejoin="round"/>
<path transform="translate(1187.3,598.0) rotate(-90)" d="M-4.8 -3.0 L-5.5 -4.0 L-6.6 -4.3 L-7.4 -4.3 L-8.5 -3.4 L-9.0 -1.7 L-9.0 1.7 L-8.5 3.4 L-7.4 4.3 L-6.3 4.3 L-5.2 3.7 L-4.6 2.6 L-4.6 0.4 L-6.6 0.4 M-2.1 4.3 L-2.1 -4.3 L2.1 4.3 L2.1 -4.3 M4.7 4.3 L4.7 -4.3 L6.6 -4.3 L7.8 -3.6 L8.6 -2.1 L9.0 0.0 L8.6 2.1 L7.8 3.6 L6.6 4.3 L4.7 4.3" fill="none" stroke="#f0f0f0" stroke-width="1.33" stroke-linecap="round" stroke-linejoin="round"/>
<path transform="translate(1227.3,599.4) rotate(-90)" d="M2.6 -0.8 L1.7 0.2 L0.3 0.5 L-0.6 0.5 L-2.0 0.2 L-2.6 -0.6 L-2.6 -1.3 L-2.0 -2.2 L-0.6 -2.6 L0.3 -2.6 L1.7 -2.2 L2.6 -1.1 L2.6 1.1 L1.7 2.2 L0.3 2.6 L-1.1 2.6 L-2.5 2.3" fill="none" stroke="#f0f0f0" stroke-width="1.00" stroke-linecap="round" stroke-linejoin="round"/>
<path transform="translate(1234.8,598.0) rotate(-90)" d="M-4.8 -2.8 L-5.5 -3.7 L-6.6 -4.0 L-7.4 -4.0 L-8.5 -3.2 L-9.0 -1.6 L-9.0 1.6 L-8.5 3.2 L-7.4 4.0 L-6.3 4.0 L-5.2 3.4 L-4.6 2.4 L-4.6 0.4 L-6.6 0.4 M-2.1 4.0 L-2.1 -4.0 L2.1 4.0 L2.1 -4.0 M4.7 4.0 L4.7 -4.0 L6.6 -4.0 L7.8 -3.3 L8.6 -2.0 L9.0 0.0 L8.6 2.0 L7.8 3.3 L6.6 4.0 L4.7 4.0" fill="none" stroke="#f0f0f0" stroke-width="1.22" stroke-linecap="round" stroke-linejoin="round"/>
<path transform="translate(1278.2,598.5) rotate(-90)" d="M0.0 -0.3 L-1.6 -0.6 L-2.2 -1.3 L-2.2 -2.2 L-1.1 -3.1 L1.0 -3.1 L2.1 -2.2 L2.1 -1.3 L1.5 -0.6 L0.0 -0.3 L-1.6 0.1 L-2.5 1.0 L-2.5 2.3 L-1.3 3.2 L1.2 3.2 L2.5 2.3 L2.5 1.0 L1.6 0.1 L0.0 -0.3" fill="none" stroke="#f0f0f0" stroke-width="1.00" stroke-linecap="round" stroke-linejoin="round"/>
<path transform="translate(1287.0,600.2) rotate(-90)" d="M-9.6 4.0 L-9.6 -4.0 L-7.5 -4.0 L-6.7 -3.4 L-6.4 -2.0 L-6.7 -0.8 L-7.5 -0.2 L-9.6 -0.2 M-7.5 -0.2 L-6.7 0.4 L-6.2 1.8 L-6.5 3.4 L-7.4 4.0 L-9.6 4.0 M-4.5 4.0 L-2.5 -4.0 L-0.5 4.0 M-3.8 1.3 L-1.2 1.3 M0.8 -4.0 L4.8 -4.0 M2.8 -4.0 L2.8 4.0 M6.4 0.2 L9.6 0.2 M8.0 -2.0 L8.0 2.3" fill="none" stroke="#f0f0f0" stroke-width="1.24" stroke-linecap="round" stroke-linejoin="round"/>
<rect x="1081.0" y="633.0" width="49.6" height="22.0" fill="none" stroke="#20a020" stroke-width="1.2"/>
<rect x="1082.5" y="634.5" width="46.6" height="19.0" fill="#009000"/>
<rect x="1081.0" y="682.4" width="49.6" height="21.1" fill="none" stroke="#20a020" stroke-width="1.2"/>
<rect x="1082.5" y="683.9" width="46.6" height="18.1" fill="#009000"/>
<rect x="1081.0" y="730.3" width="49.6" height="21.4" fill="none" stroke="#20a020" stroke-width="1.2"/>
<rect x="1082.5" y="731.8" width="46.6" height="18.4" fill="#009000"/>
<rect x="1081.0" y="779.0" width="49.6" height="22.8" fill="none" stroke="#20a020" stroke-width="1.2"/>
<rect x="1082.5" y="780.5" width="46.6" height="19.8" fill="#009000"/>
<rect x="1081.0" y="830.0" width="49.6" height="22.0" fill="none" stroke="#20a020" stroke-width="1.2"/>
<rect x="1082.5" y="831.5" width="46.6" height="19.0" fill="#009000"/>
<rect x="1278.0" y="633.2" width="49.5" height="22.2" fill="none" stroke="#20a020" stroke-width="1.2"/>
<rect x="1279.5" y="634.7" width="46.5" height="19.2" fill="#009000"/>
<rect x="1278.0" y="682.4" width="49.5" height="21.1" fill="none" stroke="#20a020" stroke-width="1.2"/>
<rect x="1279.5" y="683.9" width="46.5" height="18.1" fill="#009000"/>
<rect x="1278.0" y="730.3" width="49.5" height="21.4" fill="none" stroke="#20a020" stroke-width="1.2"/>
<rect x="1279.5" y="731.8" width="46.5" height="18.4" fill="#009000"/>
<rect x="1278.0" y="779.2" width="49.5" height="22.1" fill="none" stroke="#20a020" stroke-width="1.2"/>
<rect x="1279.5" y="780.7" width="46.5" height="19.1" fill="#009000"/>
<rect x="1278.0" y="830.5" width="49.5" height="21.5" fill="none" stroke="#20a020" stroke-width="1.2"/>
<rect x="1279.5" y="832.0" width="46.5" height="18.5" fill="#009000"/>
<path transform="translate(1104.5,646.5)" d="M-6.5 -2.1 L-4.3 -3.5 L-4.3 3.5 M-6.5 3.5 L-2.1 3.5 M1.4 -2.1 L2.3 -3.1 L3.1 -3.5 L4.9 -3.5 L5.8 -2.9 L6.2 -1.8 L5.8 -0.7 L1.4 3.5 L6.5 3.5" fill="none" stroke="#f0f0f0" stroke-width="1.08" stroke-linecap="round" stroke-linejoin="round"/>
<path transform="translate(1105.5,693.5)" d="M-9.5 -3.9 L-6.2 -6.5 L-6.2 6.5 M-9.5 6.5 L-2.9 6.5 M2.2 -6.5 L9.1 -6.5 L5.0 -1.3 L6.7 -1.3 L8.7 -0.3 L9.5 2.6 L8.7 5.2 L7.1 6.5 L3.9 6.5 L2.2 5.5" fill="none" stroke="#f0f0f0" stroke-width="2.02" stroke-linecap="round" stroke-linejoin="round"/>
<path transform="translate(1105.5,741.5)" d="M-9.5 -3.9 L-6.3 -6.5 L-6.3 6.5 M-9.5 6.5 L-3.1 6.5 M6.9 6.5 L6.9 -6.5 L1.3 2.6 L9.5 2.6" fill="none" stroke="#f0f0f0" stroke-width="2.02" stroke-linecap="round" stroke-linejoin="round"/>
<path transform="translate(1105.5,790.0)" d="M-9.5 -4.2 L-6.2 -7.0 L-6.2 7.0 M-9.5 7.0 L-2.9 7.0 M8.8 -7.0 L2.9 -7.0 L2.2 -0.6 L3.8 -1.4 L6.2 -1.4 L8.3 -0.3 L9.5 2.1 L9.5 4.2 L8.3 6.3 L6.2 7.0 L4.2 7.0 L2.2 5.6" fill="none" stroke="#f0f0f0" stroke-width="2.17" stroke-linecap="round" stroke-linejoin="round"/>
<path transform="translate(1303.5,648.2)" d="M-2.5 -3.0 L2.5 -3.0 L-0.9 3.0" fill="none" stroke="#f0f0f0" stroke-width="1.00" stroke-linecap="round" stroke-linejoin="round"/>
<path transform="translate(1302.8,688.9)" d="M-8.0 -2.3 L-8.7 -3.1 L-9.7 -3.3 L-10.4 -3.3 L-11.4 -3.0 L-11.8 -2.1 L-11.8 -1.3 L-11.4 -0.5 L-10.4 -0.1 L-9.2 0.3 L-8.2 0.9 L-7.8 1.8 L-8.2 2.8 L-9.2 3.3 L-10.4 3.3 L-11.4 3.0 L-12.1 2.3 M-5.2 -3.3 L-5.2 3.3 M-2.1 1.3 L1.1 1.3 L1.1 0.5 L0.7 -0.5 L-0.1 -0.9 L-0.9 -0.9 L-1.8 -0.5 L-2.1 0.3 L-2.1 2.0 L-1.8 2.9 L-0.9 3.3 L0.0 3.3 L0.9 2.8 M3.3 1.3 L6.6 1.3 L6.6 0.5 L6.2 -0.5 L5.4 -0.9 L4.6 -0.9 L3.7 -0.5 L3.3 0.3 L3.3 2.0 L3.7 2.9 L4.6 3.3 L5.5 3.3 L6.4 2.8 M8.8 -0.9 L8.8 5.5 M8.8 0.0 L9.5 -0.7 L10.2 -0.9 L10.8 -0.9 L11.6 -0.5 L12.1 0.3 L12.1 2.0 L11.6 2.9 L10.8 3.3 L10.2 3.3 L9.5 3.0 L8.8 2.3" fill="none" stroke="#f0f0f0" stroke-width="1.02" stroke-linecap="round" stroke-linejoin="round"/>
<path transform="translate(1303.0,697.7)" d="M1.6 -2.7 L0.5 -3.0 L-0.3 -3.0 L-1.5 -2.4 L-2.2 -1.2 L-2.2 1.2 L-1.5 2.6 L-0.3 3.0 L0.9 3.0 L1.6 2.6 L2.2 1.5 L2.2 0.9 L1.6 -0.2 L0.9 -0.6 L-0.3 -0.6 L-1.5 -0.2 L-2.2 0.9" fill="none" stroke="#f0f0f0" stroke-width="1.00" stroke-linecap="round" stroke-linejoin="round"/>
<path transform="translate(1303.5,745.6)" d="M2.0 -3.4 L-2.0 -3.4 L-2.5 -0.3 L-1.4 -0.7 L0.2 -0.7 L1.7 -0.1 L2.5 1.0 L2.5 2.0 L1.7 3.0 L0.2 3.4 L-1.1 3.4 L-2.5 2.7" fill="none" stroke="#f0f0f0" stroke-width="1.04" stroke-linecap="round" stroke-linejoin="round"/>
<path transform="translate(1303.0,789.5)" d="M1.5 6.5 L1.5 -6.5 L-4.0 2.6 L4.0 2.6" fill="none" stroke="#f0f0f0" stroke-width="2.02" stroke-linecap="round" stroke-linejoin="round"/>
<rect x="1020.3" y="524.0" width="35.4" height="50.0" fill="none" stroke="#b4b4b4" stroke-width="1.3"/>
<rect x="1022.0" y="530.0" width="32.0" height="38.0" fill="none" stroke="#0fa0a4" stroke-width="1.3"/>
<rect x="1027.0" y="524.7" width="23.5" height="12.5" fill="#8c0000"/>
<rect x="1027.0" y="560.5" width="23.5" height="12.5" fill="#8c0000"/>
<rect x="1024.0" y="532.8" width="28.7" height="34.6" fill="none" stroke="#c8c800" stroke-width="1.4"/>
<circle cx="1037.5" cy="549.5" r="8.4" fill="none" stroke="#c8c800" stroke-width="1.2"/>
<rect x="1020.3" y="577.0" width="35.4" height="51.6" fill="none" stroke="#b4b4b4" stroke-width="1.3"/>
<rect x="1022.0" y="583.0" width="32.0" height="39.6" fill="none" stroke="#0fa0a4" stroke-width="1.3"/>
<rect x="1027.0" y="577.7" width="23.5" height="12.5" fill="#8c0000"/>
<rect x="1027.0" y="615.1" width="23.5" height="12.5" fill="#8c0000"/>
<rect x="1024.0" y="585.8" width="28.7" height="36.2" fill="none" stroke="#c8c800" stroke-width="1.4"/>
<circle cx="1037.5" cy="603.3" r="8.4" fill="none" stroke="#c8c800" stroke-width="1.2"/>
<rect x="1020.3" y="694.0" width="35.4" height="54.7" fill="none" stroke="#b4b4b4" stroke-width="1.3"/>
<rect x="1022.0" y="700.0" width="32.0" height="42.7" fill="none" stroke="#0fa0a4" stroke-width="1.3"/>
<rect x="1027.0" y="694.7" width="23.5" height="12.5" fill="#8c0000"/>
<rect x="1027.0" y="735.2" width="23.5" height="12.5" fill="#8c0000"/>
<rect x="1024.0" y="702.8" width="28.7" height="39.3" fill="none" stroke="#c8c800" stroke-width="1.4"/>
<circle cx="1037.5" cy="721.9" r="8.4" fill="none" stroke="#c8c800" stroke-width="1.2"/>
<rect x="1020.3" y="750.0" width="35.4" height="54.8" fill="none" stroke="#b4b4b4" stroke-width="1.3"/>
<rect x="1022.0" y="756.0" width="32.0" height="42.8" fill="none" stroke="#0fa0a4" stroke-width="1.3"/>
<rect x="1027.0" y="750.7" width="23.5" height="12.5" fill="#8c0000"/>
<rect x="1027.0" y="791.3" width="23.5" height="12.5" fill="#8c0000"/>
<rect x="1024.0" y="758.8" width="28.7" height="39.4" fill="none" stroke="#c8c800" stroke-width="1.4"/>
<circle cx="1037.5" cy="777.9" r="8.4" fill="none" stroke="#c8c800" stroke-width="1.2"/>
<rect x="1017.7" y="631.5" width="36.9" height="53.8" fill="none" stroke="#b4b4b4" stroke-width="1.3"/>
<rect x="1009.6" y="644.0" width="8.1" height="28.8" fill="none" stroke="#b4b4b4" stroke-width="1.3"/>
<rect x="1025.9" y="632.2" width="22.1" height="13.3" fill="#8c0000"/>
<rect x="1025.9" y="672.0" width="22.1" height="11.0" fill="#8c0000"/>
<rect x="1022.0" y="641.0" width="29.0" height="34.7" fill="none" stroke="#c8c800" stroke-width="1.4"/>
<rect x="1021.4" y="639.0" width="30.3" height="39.0" fill="none" stroke="#0fa0a4" stroke-width="1.3"/>
<path d="M1021 646 Q1008 658 1021 671" fill="none" stroke="#0fa0a4" stroke-width="1.3"/>
<path d="M1024 648 Q1014 658 1024 668" fill="none" stroke="#c8c800" stroke-width="1.2"/>
<path transform="translate(1038.0,530.0)" d="M-3.0 -1.8 L0.0 -3.0 L0.0 3.0 M-3.0 3.0 L3.0 3.0" fill="none" stroke="#f0f0f0" stroke-width="1.00" stroke-linecap="round" stroke-linejoin="round"/>
<path transform="translate(1038.5,568.0)" d="M-3.5 -2.1 L-4.0 -2.8 L-4.8 -3.0 L-5.3 -3.0 L-6.1 -2.4 L-6.5 -1.2 L-6.5 1.2 L-6.1 2.4 L-5.3 3.0 L-4.5 3.0 L-3.7 2.6 L-3.3 1.8 L-3.3 0.3 L-4.8 0.3 M-1.5 3.0 L-1.5 -3.0 L1.5 3.0 L1.5 -3.0 M3.4 3.0 L3.4 -3.0 L4.7 -3.0 L5.6 -2.5 L6.2 -1.5 L6.5 0.0 L6.2 1.5 L5.6 2.5 L4.7 3.0 L3.4 3.0" fill="none" stroke="#f0f0f0" stroke-width="1.00" stroke-linecap="round" stroke-linejoin="round"/>
<path transform="translate(1038.5,583.0)" d="M-3.5 -2.1 L-4.0 -2.8 L-4.8 -3.0 L-5.3 -3.0 L-6.1 -2.4 L-6.5 -1.2 L-6.5 1.2 L-6.1 2.4 L-5.3 3.0 L-4.5 3.0 L-3.7 2.6 L-3.3 1.8 L-3.3 0.3 L-4.8 0.3 M-1.5 3.0 L-1.5 -3.0 L1.5 3.0 L1.5 -3.0 M3.4 3.0 L3.4 -3.0 L4.7 -3.0 L5.6 -2.5 L6.2 -1.5 L6.5 0.0 L6.2 1.5 L5.6 2.5 L4.7 3.0 L3.4 3.0" fill="none" stroke="#f0f0f0" stroke-width="1.00" stroke-linecap="round" stroke-linejoin="round"/>
<path transform="translate(1038.0,621.0)" d="M-3.0 -1.8 L0.0 -3.0 L0.0 3.0 M-3.0 3.0 L3.0 3.0" fill="none" stroke="#f0f0f0" stroke-width="1.00" stroke-linecap="round" stroke-linejoin="round"/>
<path transform="translate(1038.5,638.0)" d="M-3.5 -2.1 L-4.0 -2.8 L-4.8 -3.0 L-5.3 -3.0 L-6.1 -2.4 L-6.5 -1.2 L-6.5 1.2 L-6.1 2.4 L-5.3 3.0 L-4.5 3.0 L-3.7 2.6 L-3.3 1.8 L-3.3 0.3 L-4.8 0.3 M-1.5 3.0 L-1.5 -3.0 L1.5 3.0 L1.5 -3.0 M3.4 3.0 L3.4 -3.0 L4.7 -3.0 L5.6 -2.5 L6.2 -1.5 L6.5 0.0 L6.2 1.5 L5.6 2.5 L4.7 3.0 L3.4 3.0" fill="none" stroke="#f0f0f0" stroke-width="1.00" stroke-linecap="round" stroke-linejoin="round"/>
<path transform="translate(1038.0,678.0)" d="M-3.0 -1.8 L0.0 -3.0 L0.0 3.0 M-3.0 3.0 L3.0 3.0" fill="none" stroke="#f0f0f0" stroke-width="1.00" stroke-linecap="round" stroke-linejoin="round"/>
<path transform="translate(1038.0,701.0)" d="M-3.0 -1.8 L0.0 -3.0 L0.0 3.0 M-3.0 3.0 L3.0 3.0" fill="none" stroke="#f0f0f0" stroke-width="1.00" stroke-linecap="round" stroke-linejoin="round"/>
<path transform="translate(1038.5,742.0)" d="M-3.5 -2.1 L-4.0 -2.8 L-4.8 -3.0 L-5.3 -3.0 L-6.1 -2.4 L-6.5 -1.2 L-6.5 1.2 L-6.1 2.4 L-5.3 3.0 L-4.5 3.0 L-3.7 2.6 L-3.3 1.8 L-3.3 0.3 L-4.8 0.3 M-1.5 3.0 L-1.5 -3.0 L1.5 3.0 L1.5 -3.0 M3.4 3.0 L3.4 -3.0 L4.7 -3.0 L5.6 -2.5 L6.2 -1.5 L6.5 0.0 L6.2 1.5 L5.6 2.5 L4.7 3.0 L3.4 3.0" fill="none" stroke="#f0f0f0" stroke-width="1.00" stroke-linecap="round" stroke-linejoin="round"/>
<path transform="translate(1038.5,757.0)" d="M-3.5 -2.1 L-4.0 -2.8 L-4.8 -3.0 L-5.3 -3.0 L-6.1 -2.4 L-6.5 -1.2 L-6.5 1.2 L-6.1 2.4 L-5.3 3.0 L-4.5 3.0 L-3.7 2.6 L-3.3 1.8 L-3.3 0.3 L-4.8 0.3 M-1.5 3.0 L-1.5 -3.0 L1.5 3.0 L1.5 -3.0 M3.4 3.0 L3.4 -3.0 L4.7 -3.0 L5.6 -2.5 L6.2 -1.5 L6.5 0.0 L6.2 1.5 L5.6 2.5 L4.7 3.0 L3.4 3.0" fill="none" stroke="#f0f0f0" stroke-width="1.00" stroke-linecap="round" stroke-linejoin="round"/>
<path transform="translate(1038.0,797.0)" d="M-3.0 -1.8 L0.0 -3.0 L0.0 3.0 M-3.0 3.0 L3.0 3.0" fill="none" stroke="#f0f0f0" stroke-width="1.00" stroke-linecap="round" stroke-linejoin="round"/>
<path transform="translate(987.5,547.9)" d="M-28.5 -9.9 L-21.6 9.9 L-14.8 -9.9 M-4.9 -2.6 L-7.7 -1.4 L-8.9 1.0 L-8.9 5.9 L-7.7 8.7 L-4.9 9.9 L-2.8 9.9 L-0.4 8.7 L0.8 5.9 L0.8 1.0 L-0.4 -1.4 L-2.8 -2.6 L-4.9 -2.6 M8.9 -9.9 L8.9 9.9 M17.6 0.4 L28.5 0.4 M23.0 -4.9 L23.0 5.7" fill="none" stroke="#0fa0a4" stroke-width="3.07" stroke-linecap="round" stroke-linejoin="round"/>
<path transform="translate(987.4,594.6)" d="M-27.6 -9.6 L-20.8 9.6 L-14.0 -9.6 M-4.1 -2.5 L-6.9 -1.4 L-8.1 1.0 L-8.1 5.8 L-6.9 8.5 L-4.1 9.6 L-2.1 9.6 L0.3 8.5 L1.5 5.8 L1.5 1.0 L0.3 -1.4 L-2.1 -2.5 L-4.1 -2.5 M9.5 -9.6 L9.5 9.6 M18.6 0.0 L27.6 0.0" fill="none" stroke="#0fa0a4" stroke-width="2.99" stroke-linecap="round" stroke-linejoin="round"/>
<path transform="translate(976.8,656.5)" d="M-18.8 9.5 L-18.8 -9.5 L-13.4 -9.5 L-11.1 -8.0 L-10.0 -4.8 L-11.1 -1.0 L-13.4 0.6 L-18.8 0.6 M-5.6 -9.5 L4.9 -9.5 M-0.4 -9.5 L-0.4 9.5 M8.3 -9.5 L18.8 -9.5 M13.5 -9.5 L13.5 9.5" fill="none" stroke="#0fa0a4" stroke-width="2.94" stroke-linecap="round" stroke-linejoin="round"/>
<path transform="translate(981.0,719.2)" d="M-24.8 -8.8 L-35.0 -8.8 L-35.0 8.8 M-35.0 -0.4 L-27.4 -0.4 M-18.4 -2.3 L-18.4 8.8 M-18.4 0.9 L-16.8 -1.2 L-14.6 -2.3 L-12.1 -2.3 M-5.9 3.5 L3.2 3.5 L3.2 1.4 L2.1 -1.2 L-0.2 -2.3 L-2.5 -2.3 L-4.9 -1.2 L-5.9 0.9 L-5.9 5.3 L-4.9 7.7 L-2.5 8.8 L0.2 8.8 L2.6 7.6 M18.4 -2.3 L18.4 14.6 M18.2 0.0 L16.3 -1.8 L14.4 -2.3 L12.5 -2.3 L10.2 -1.2 L9.3 0.9 L9.3 5.3 L10.2 7.7 L12.5 8.8 L14.4 8.8 L16.3 8.1 L18.2 6.2 M24.8 0.4 L35.0 0.4 M29.9 -4.4 L29.9 5.1" fill="none" stroke="#0fa0a4" stroke-width="2.73" stroke-linecap="round" stroke-linejoin="round"/>
<path transform="translate(981.0,774.5)" d="M-24.6 -8.8 L-35.0 -8.8 L-35.0 8.8 M-35.0 -0.4 L-27.3 -0.4 M-18.0 -2.3 L-18.0 8.8 M-18.0 0.9 L-16.5 -1.2 L-14.2 -2.3 L-11.7 -2.3 M-5.3 3.5 L4.0 3.5 L4.0 1.4 L2.8 -1.2 L0.5 -2.3 L-1.8 -2.3 L-4.3 -1.2 L-5.3 0.9 L-5.3 5.3 L-4.3 7.8 L-1.8 8.8 L0.9 8.8 L3.4 7.6 M19.4 -2.3 L19.4 14.7 M19.2 0.0 L17.3 -1.8 L15.3 -2.3 L13.4 -2.3 L11.1 -1.2 L10.1 0.9 L10.1 5.3 L11.1 7.8 L13.4 8.8 L15.3 8.8 L17.3 8.1 L19.2 6.2 M26.3 0.0 L35.0 0.0" fill="none" stroke="#0fa0a4" stroke-width="2.74" stroke-linecap="round" stroke-linejoin="round"/>
<path transform="translate(1009.5,551.2) rotate(-90)" d="M-10.2 -6.5 L-5.6 6.5 L-0.9 -6.5 M2.8 0.3 L10.2 0.3 M6.5 -3.2 L6.5 3.8" fill="none" stroke="#c8c800" stroke-width="2.02" stroke-linecap="round" stroke-linejoin="round"/>
<path transform="translate(1009.5,601.4) rotate(-90)" d="M-8.2 -4.5 L-9.4 -6.1 L-11.2 -6.5 L-12.4 -6.5 L-14.2 -5.8 L-15.0 -4.2 L-15.0 -2.6 L-14.2 -1.0 L-12.4 -0.3 L-10.2 0.5 L-8.6 1.7 L-7.8 3.6 L-8.4 5.6 L-10.2 6.5 L-12.4 6.5 L-14.2 5.8 L-15.4 4.6 M-4.6 -6.5 L-2.3 6.5 L0.1 -2.6 L2.5 6.5 L4.7 -6.5 M13.0 6.5 L13.0 -6.5 L7.7 2.6 L15.4 2.6" fill="none" stroke="#c8c800" stroke-width="2.02" stroke-linecap="round" stroke-linejoin="round"/>
<path transform="translate(1001.8,658.2) rotate(-90)" d="M-8.2 -4.3 L-9.4 -5.8 L-11.3 -6.2 L-12.6 -6.2 L-14.5 -5.6 L-15.4 -4.0 L-15.4 -2.5 L-14.5 -1.0 L-12.6 -0.2 L-10.3 0.5 L-8.5 1.6 L-7.8 3.5 L-8.4 5.3 L-10.3 6.2 L-12.6 6.2 L-14.5 5.6 L-15.8 4.3 M-4.4 -6.2 L-2.0 6.2 L0.6 -2.5 L3.1 6.2 L5.5 -6.2 M9.4 -3.7 L12.6 -6.2 L12.6 6.2 M9.4 6.2 L15.7 6.2" fill="none" stroke="#d8d898" stroke-width="1.92" stroke-linecap="round" stroke-linejoin="round"/>
<path transform="translate(1009.5,713.0) rotate(-90)" d="M-3.4 -6.5 L-15.0 -6.5 L-15.0 6.5 M-15.0 -0.3 L-6.4 -0.3 M3.4 0.3 L15.0 0.3 M9.2 -3.2 L9.2 3.8" fill="none" stroke="#c8c800" stroke-width="2.02" stroke-linecap="round" stroke-linejoin="round"/>
<path transform="translate(1009.5,777.5) rotate(-90)" d="M-8.2 -4.5 L-9.4 -6.1 L-11.2 -6.5 L-12.5 -6.5 L-14.3 -5.8 L-15.1 -4.2 L-15.1 -2.6 L-14.3 -1.0 L-12.5 -0.3 L-10.3 0.5 L-8.6 1.7 L-7.8 3.6 L-8.4 5.6 L-10.3 6.5 L-12.5 6.5 L-14.3 5.8 L-15.5 4.6 M-4.6 -6.5 L-2.2 6.5 L0.2 -2.6 L2.6 6.5 L4.9 -6.5 M14.5 -5.8 L12.7 -6.5 L11.5 -6.5 L9.7 -5.2 L8.4 -2.6 L8.4 2.6 L9.7 5.6 L11.5 6.5 L13.3 6.5 L14.5 5.6 L15.5 3.2 L15.5 2.0 L14.5 -0.4 L13.3 -1.3 L11.5 -1.3 L9.7 -0.4 L8.4 2.0" fill="none" stroke="#c8c800" stroke-width="2.02" stroke-linecap="round" stroke-linejoin="round"/>
<path transform="translate(1065.6,549.8) rotate(-90)" d="M-8.5 -4.4 L-9.8 -5.9 L-11.7 -6.3 L-13.0 -6.3 L-15.0 -5.7 L-15.9 -4.0 L-15.9 -2.5 L-15.0 -1.0 L-13.0 -0.3 L-10.7 0.5 L-8.9 1.6 L-8.1 3.5 L-8.8 5.4 L-10.7 6.3 L-13.0 6.3 L-15.0 5.7 L-16.2 4.4 M-4.6 -6.3 L-2.2 6.3 L0.4 -2.5 L3.0 6.3 L5.4 -6.3 M15.6 -6.3 L9.8 -6.3 L9.2 -0.5 L10.7 -1.3 L13.0 -1.3 L15.1 -0.3 L16.2 1.9 L16.2 3.8 L15.1 5.7 L13.0 6.3 L11.1 6.3 L9.2 5.0" fill="none" stroke="#d8d898" stroke-width="1.95" stroke-linecap="round" stroke-linejoin="round"/>
<path transform="translate(1065.0,605.0) rotate(-90)" d="M-17.0 -6.0 L-8.9 6.0 L-0.7 -6.0 M6.2 0.0 L17.0 0.0" fill="none" stroke="#d8d898" stroke-width="1.86" stroke-linecap="round" stroke-linejoin="round"/>
<path transform="translate(1065.0,655.0) rotate(-90)" d="M-15.0 6.0 L-15.0 -6.0 L-10.7 -6.0 L-8.8 -5.0 L-8.0 -3.0 L-8.8 -0.6 L-10.7 0.4 L-15.0 0.4 M-4.5 -6.0 L3.9 -6.0 M-0.3 -6.0 L-0.3 6.0 M6.6 -6.0 L15.0 -6.0 M10.8 -6.0 L10.8 6.0" fill="none" stroke="#c8c800" stroke-width="1.86" stroke-linecap="round" stroke-linejoin="round"/>
<path transform="translate(1065.0,722.0) rotate(-90)" d="M-8.5 -4.2 L-9.7 -5.6 L-11.6 -6.0 L-12.9 -6.0 L-14.7 -5.4 L-15.6 -3.8 L-15.6 -2.4 L-14.7 -1.0 L-12.9 -0.2 L-10.6 0.5 L-8.8 1.6 L-8.1 3.4 L-8.7 5.2 L-10.6 6.0 L-12.9 6.0 L-14.7 5.4 L-16.0 4.2 M-4.7 -6.0 L-2.3 6.0 L0.2 -2.4 L2.7 6.0 L5.1 -6.0 M8.2 -6.0 L16.0 -6.0 L10.7 6.0" fill="none" stroke="#d8d898" stroke-width="1.86" stroke-linecap="round" stroke-linejoin="round"/>
<rect x="1145.3" y="644.0" width="25.4" height="73.0" fill="none" stroke="#b4b4b4" stroke-width="1.3"/>
<rect x="1149.3" y="647.0" width="17.4" height="22.5" fill="#8c0000"/>
<rect x="1149.3" y="691.5" width="17.4" height="22.5" fill="#8c0000"/>
<rect x="1149.3" y="662.2" width="17.4" height="36.5" fill="none" stroke="#c8c800" stroke-width="1.4"/>
<rect x="1148.3" y="758.3" width="25.1" height="73.0" fill="none" stroke="#b4b4b4" stroke-width="1.3"/>
<rect x="1152.3" y="761.3" width="17.1" height="22.5" fill="#8c0000"/>
<rect x="1152.3" y="805.8" width="17.1" height="22.5" fill="#8c0000"/>
<rect x="1152.3" y="776.5" width="17.1" height="36.5" fill="none" stroke="#c8c800" stroke-width="1.4"/>
<path transform="translate(1178.8,681.0) rotate(-90)" d="M-14.0 -3.7 L-10.9 -6.2 L-10.9 6.2 M-14.0 6.2 L-7.9 6.2 M-3.1 -2.5 L-3.1 2.5 L-1.8 5.0 L-0.6 6.2 L1.2 6.2 L2.5 5.0 L3.7 2.5 L3.7 -2.5 L2.5 -5.0 L1.2 -6.2 L-0.6 -6.2 L-1.8 -5.0 L-3.1 -2.5 M8.1 -6.2 L8.1 6.2 M13.6 -1.6 L8.1 3.5 M10.2 1.9 L14.0 6.2" fill="none" stroke="#c8c800" stroke-width="1.92" stroke-linecap="round" stroke-linejoin="round"/>
<path transform="translate(1182.0,795.5) rotate(-90)" d="M-13.5 -3.6 L-10.5 -6.0 L-10.5 6.0 M-13.5 6.0 L-7.6 6.0 M-3.0 -2.4 L-3.0 2.4 L-1.8 4.8 L-0.6 6.0 L1.2 6.0 L2.4 4.8 L3.6 2.4 L3.6 -2.4 L2.4 -4.8 L1.2 -6.0 L-0.6 -6.0 L-1.8 -4.8 L-3.0 -2.4 M7.8 -6.0 L7.8 6.0 M13.1 -1.6 L7.8 3.4 M9.8 1.8 L13.5 6.0" fill="none" stroke="#c8c800" stroke-width="1.86" stroke-linecap="round" stroke-linejoin="round"/>
<path transform="translate(1136.8,680.1) rotate(-90)" d="M-9.6 6.2 L-9.6 -6.2 L-5.1 -6.2 L-3.2 -5.2 L-2.3 -3.1 L-3.2 -0.9 L-5.1 0.0 L-9.6 0.0 M-5.8 0.0 L-2.2 6.2 M1.7 -6.2 L9.6 -6.2 L4.2 6.2" fill="none" stroke="#0fa0a4" stroke-width="1.92" stroke-linecap="round" stroke-linejoin="round"/>
<path transform="translate(1139.0,795.0) rotate(-90)" d="M-10.0 6.0 L-10.0 -6.0 L-5.2 -6.0 L-3.2 -5.0 L-2.2 -3.0 L-3.2 -0.8 L-5.2 0.0 L-10.0 0.0 M-5.9 0.0 L-2.1 6.0 M10.0 -1.8 L8.6 0.4 L6.6 1.2 L5.2 1.2 L3.2 0.4 L2.2 -1.4 L2.2 -3.0 L3.2 -5.0 L5.2 -6.0 L6.6 -6.0 L8.6 -5.0 L10.0 -2.4 L10.0 2.4 L8.6 5.0 L6.6 6.0 L4.6 6.0 L2.5 5.2" fill="none" stroke="#0fa0a4" stroke-width="1.86" stroke-linecap="round" stroke-linejoin="round"/>
<path transform="translate(1157.5,679.5) rotate(-90)" d="M-10.5 5.5 L-10.5 -5.5 L-5.6 -5.5 L-3.5 -4.6 L-2.5 -2.8 L-3.5 -0.8 L-5.6 0.0 L-10.5 0.0 M-6.3 0.0 L-2.4 5.5 M1.8 -5.5 L10.5 -5.5 L4.6 5.5" fill="none" stroke="#c8c800" stroke-width="1.71" stroke-linecap="round" stroke-linejoin="round"/>
<path transform="translate(1160.5,795.0) rotate(-90)" d="M-10.0 5.5 L-10.0 -5.5 L-5.2 -5.5 L-3.2 -4.6 L-2.2 -2.8 L-3.2 -0.8 L-5.2 0.0 L-10.0 0.0 M-5.9 0.0 L-2.1 5.5 M10.0 -1.6 L8.6 0.3 L6.6 1.1 L5.2 1.1 L3.2 0.3 L2.2 -1.3 L2.2 -2.8 L3.2 -4.6 L5.2 -5.5 L6.6 -5.5 L8.6 -4.6 L10.0 -2.2 L10.0 2.2 L8.6 4.6 L6.6 5.5 L4.6 5.5 L2.5 4.7" fill="none" stroke="#c8c800" stroke-width="1.71" stroke-linecap="round" stroke-linejoin="round"/>
<rect x="1319.4" y="527.6" width="51.2" height="98.8" fill="none" stroke="#c8c800" stroke-width="1.4"/>
<polyline points="1370.6,558.6 1384.6,558.6 1384.6,595.4 1370.6,595.4" fill="none" stroke="#c8c800" stroke-width="1.4"/>
<rect x="1332.3" y="528.4" width="11.7" height="14.6" fill="none" stroke="#20a020" stroke-width="1.2"/>
<rect x="1333.8" y="529.9" width="8.7" height="11.6" fill="#009000"/>
<rect x="1332.3" y="609.4" width="11.7" height="15.6" fill="none" stroke="#20a020" stroke-width="1.2"/>
<rect x="1333.8" y="610.9" width="8.7" height="12.6" fill="#009000"/>
<rect x="1355.9" y="528.4" width="13.1" height="14.6" fill="none" stroke="#20a020" stroke-width="1.2"/>
<rect x="1357.4" y="529.9" width="10.1" height="11.6" fill="#009000"/>
<rect x="1355.9" y="609.4" width="13.1" height="15.6" fill="none" stroke="#20a020" stroke-width="1.2"/>
<rect x="1357.4" y="610.9" width="10.1" height="12.6" fill="#009000"/>
<rect x="1320.5" y="545.3" width="20.5" height="11.7" fill="none" stroke="#20a020" stroke-width="1.2"/>
<rect x="1322.0" y="546.8" width="17.5" height="8.7" fill="#009000"/>
<rect x="1320.5" y="578.5" width="20.5" height="12.5" fill="none" stroke="#20a020" stroke-width="1.2"/>
<rect x="1322.0" y="580.0" width="17.5" height="9.5" fill="#009000"/>
<rect x="1320.5" y="596.0" width="20.5" height="12.0" fill="none" stroke="#20a020" stroke-width="1.2"/>
<rect x="1322.0" y="597.5" width="17.5" height="9.0" fill="#009000"/>
<circle cx="1349.5" cy="558.6" r="6.5" fill="#d8d840" stroke="#c8c800" stroke-width="1.2"/>
<circle cx="1349.5" cy="592.5" r="6.5" fill="#d8d840" stroke="#c8c800" stroke-width="1.2"/>
<rect x="1335" y="538" width="31" height="77" rx="4" fill="none" stroke="#a010b0" stroke-width="1.3"/>
<rect x="1336.5" y="540.0" width="28.0" height="73.0" fill="none" stroke="#c00000" stroke-width="1.5"/>
<path d="M1367 560 H1378 Q1383 567 1378 575 H1367" fill="none" stroke="#a010b0" stroke-width="1.3"/>
<path transform="translate(1393.4,577.0) rotate(90) scale(-1,1)" d="M-20.0 -6.6 L-12.0 -6.6 M-16.0 -6.6 L-16.0 6.6 M-8.5 -4.0 L-7.3 -5.9 L-6.2 -6.6 L-3.8 -6.6 L-2.6 -5.5 L-2.0 -3.3 L-2.6 -1.3 L-8.5 6.6 L-1.7 6.6 M8.8 -4.6 L7.6 -6.2 L5.8 -6.6 L4.6 -6.6 L2.8 -5.9 L2.0 -4.2 L2.0 -2.6 L2.8 -1.1 L4.6 -0.3 L6.7 0.5 L8.4 1.7 L9.1 3.7 L8.5 5.7 L6.7 6.6 L4.6 6.6 L2.8 5.9 L1.7 4.6 M13.1 -4.0 L14.3 -5.9 L15.5 -6.6 L17.9 -6.6 L19.1 -5.5 L19.6 -3.3 L19.1 -1.3 L13.1 6.6 L20.0 6.6" fill="none" stroke="#c00000" stroke-width="2.05" stroke-linecap="round" stroke-linejoin="round"/>
<path transform="translate(1428.4,576.0)" d="M-24.6 9.9 L-24.6 -9.9 L-17.7 -9.9 L-14.8 -8.4 L-13.4 -5.0 L-14.8 -1.0 L-17.7 0.6 L-24.6 0.6 M-7.9 -9.9 L-4.1 9.9 L-0.2 -4.0 L3.7 9.9 L7.5 -9.9 M13.2 9.9 L13.2 -9.9 L20.1 -9.9 L23.0 -8.4 L24.4 -5.0 L23.0 -1.4 L20.1 0.0 L13.2 0.0 M19.1 0.0 L24.6 9.9" fill="none" stroke="#0fa0a4" stroke-width="3.08" stroke-linecap="round" stroke-linejoin="round"/>
<path transform="translate(1306.2,575.9) rotate(90) scale(-1,1)" d="M-7.9 -7.1 L-9.0 -9.5 L-10.8 -10.1 L-11.9 -10.1 L-13.7 -9.1 L-14.5 -6.5 L-14.5 -4.1 L-13.7 -1.6 L-11.9 -0.4 L-9.8 0.8 L-8.2 2.6 L-7.5 5.7 L-8.1 8.7 L-9.8 10.1 L-11.9 10.1 L-13.7 9.1 L-14.9 7.1 M-4.4 -10.1 L-2.2 10.1 L0.2 -4.1 L2.5 10.1 L4.7 -10.1 M8.1 -6.1 L9.3 -9.1 L10.4 -10.1 L12.8 -10.1 L13.9 -8.5 L14.5 -5.1 L13.9 -2.0 L8.1 10.1 L14.9 10.1" fill="none" stroke="#a010b0" stroke-width="3.15" stroke-linecap="round" stroke-linejoin="round"/>
<polyline points="1055.5,640.0 1055.5,495.2 1359.3,495.2 1359.3,1300.0" fill="none" stroke="#0fa0a4" stroke-width="2"/>
<polyline points="1055.5,546.8 1359.0,546.8" fill="none" stroke="#0fa0a4" stroke-width="2"/>
<rect x="1068.2" y="570.0" width="280.0" height="119.7" fill="none" stroke="#0fa0a4" stroke-width="2"/>
<polyline points="1056.0,752.5 1359.0,752.5" fill="none" stroke="#0fa0a4" stroke-width="2"/>
<polyline points="1056.0,804.0 1359.0,804.0" fill="none" stroke="#0fa0a4" stroke-width="2"/>
<polyline points="1114.0,786.6 1295.8,786.6 1295.8,798.0 1359.0,798.0" fill="none" stroke="#0fa0a4" stroke-width="2"/>
<polyline points="1056.0,797.4 1114.0,797.4 1114.0,786.6" fill="none" stroke="#0fa0a4" stroke-width="2"/>
<circle cx="1073.0" cy="511.4" r="12.2" fill="none" stroke="#0fa0a4" stroke-width="2"/>
<circle cx="1341.6" cy="512.0" r="12.5" fill="none" stroke="#0fa0a4" stroke-width="2"/>
<circle cx="1342.2" cy="780.7" r="12.5" fill="none" stroke="#0fa0a4" stroke-width="2"/>
<circle cx="1075.3" cy="780.4" r="10.3" fill="none" stroke="#0fa0a4" stroke-width="2"/>
<polyline points="1040.6,804.0 1040.6,1400.0" fill="none" stroke="#0fa0a4" stroke-width="2"/>
<polyline points="1090.6,1300.0 1090.6,583.6 1317.0,583.6 1317.0,1300.0" fill="none" stroke="#a010b0" stroke-width="2"/>
<path transform="translate(1210.5,794.2) rotate(90) scale(1,-1)" d="M-94.8 12.1 L-94.8 -12.1 L-87.0 -12.1 L-81.7 -10.2 L-78.3 -6.0 L-76.7 0.0 L-78.3 6.0 L-81.7 10.2 L-87.0 12.1 L-94.8 12.1 M-66.2 12.1 L-66.2 -12.1 L-55.3 -12.1 L-50.6 -10.2 L-48.5 -6.0 L-50.6 -1.7 L-55.3 0.0 L-66.2 0.0 M-56.9 0.0 L-48.2 12.1 M-39.5 12.1 L-28.9 -12.1 L-18.3 12.1 M-35.7 3.9 L-22.1 3.9 M-0.6 -1.0 L-5.9 -2.4 L-8.1 -4.8 L-8.1 -8.5 L-4.3 -11.9 L2.8 -11.9 L6.5 -8.5 L6.5 -4.8 L4.3 -2.4 L-0.6 -1.0 L-5.9 0.5 L-9.0 3.6 L-9.0 8.7 L-5.0 12.1 L3.4 12.1 L7.8 8.7 L7.8 3.6 L4.7 0.5 L-0.6 -1.0 M19.9 -7.3 L27.6 -12.1 L27.6 12.1 M19.9 12.1 L35.4 12.1 M55.9 -1.0 L50.6 -2.4 L48.5 -4.8 L48.5 -8.5 L52.2 -11.9 L59.3 -11.9 L63.1 -8.5 L63.1 -4.8 L60.9 -2.4 L55.9 -1.0 L50.6 0.5 L47.5 3.6 L47.5 8.7 L51.6 12.1 L60.0 12.1 L64.3 8.7 L64.3 3.6 L61.2 0.5 L55.9 -1.0 M73.6 -12.1 L84.2 12.1 L94.8 -12.1" fill="none" stroke="#a010b0" stroke-width="3.75" stroke-linecap="round" stroke-linejoin="round"/>
<path transform="translate(1268.5,650.5) rotate(90) scale(1,-1)" d="M-15.5 -5.9 L-15.5 5.9 M-7.6 -5.9 L-7.6 5.9 M-15.5 -0.2 L-7.6 -0.2 M3.7 -6.5 L-3.3 7.1 M8.1 -5.9 L8.1 5.9 L15.5 5.9" fill="none" stroke="#a010b0" stroke-width="1.83" stroke-linecap="round" stroke-linejoin="round"/>
<path transform="translate(1268.5,692.5) rotate(90) scale(1,-1)" d="M-9.5 5.9 L-9.5 -5.9 L-5.1 -5.9 L-3.2 -5.0 L-2.3 -3.0 L-3.2 -0.6 L-5.1 0.4 L-9.5 0.4 M2.2 5.9 L2.2 -5.9 L5.3 -5.9 L7.5 -5.0 L8.9 -3.0 L9.5 0.0 L8.9 3.0 L7.5 5.0 L5.3 5.9 L2.2 5.9" fill="none" stroke="#a010b0" stroke-width="1.83" stroke-linecap="round" stroke-linejoin="round"/>
<path transform="translate(1268.5,741.7) rotate(90) scale(1,-1)" d="M-12.9 5.9 L-12.9 -5.9 L-9.2 -5.9 L-7.6 -5.0 L-6.8 -3.0 L-7.6 -0.6 L-9.2 0.4 L-12.9 0.4 M-3.9 -5.9 L3.3 -5.9 M-0.3 -5.9 L-0.3 5.9 M5.7 -5.9 L12.9 -5.9 M9.3 -5.9 L9.3 5.9" fill="none" stroke="#a010b0" stroke-width="1.83" stroke-linecap="round" stroke-linejoin="round"/>
<path transform="translate(1262.0,607.1) rotate(-90)" d="M-18.6 0.3 L-13.3 0.3 M-15.9 -3.5 L-15.9 4.1 M-9.9 -7.0 L-4.7 -7.0 L-7.7 -1.4 L-6.5 -1.4 L-5.0 -0.3 L-4.4 2.8 L-5.0 5.6 L-6.2 7.0 L-8.6 7.0 L-9.9 5.9 M-0.5 6.3 L-0.5 7.0 M3.6 -7.0 L8.8 -7.0 L5.8 -1.4 L7.1 -1.4 L8.5 -0.3 L9.1 2.8 L8.5 5.6 L7.4 7.0 L4.9 7.0 L3.6 5.9 M11.9 -7.0 L15.2 7.0 L18.6 -7.0" fill="none" stroke="#a010b0" stroke-width="2.17" stroke-linecap="round" stroke-linejoin="round"/>
<path transform="translate(1231.2,643.3) rotate(90) scale(1,-1)" d="M-7.0 -4.6 L-8.2 -6.2 L-10.2 -6.6 L-11.5 -6.6 L-13.4 -5.3 L-14.3 -2.6 L-14.3 2.6 L-13.4 5.3 L-11.5 6.6 L-9.5 6.6 L-7.6 5.7 L-6.6 4.0 L-6.6 0.7 L-10.2 0.7 M-2.2 -1.7 L-2.2 6.6 M-2.2 0.0 L-0.6 -1.3 L0.8 -1.7 L2.1 -1.7 L3.3 -0.9 L3.9 0.7 L3.9 6.6 M14.3 -6.6 L14.3 6.6 M14.2 0.0 L12.9 -1.3 L11.6 -1.7 L10.3 -1.7 L8.8 -0.9 L8.1 0.7 L8.1 4.0 L8.8 5.8 L10.3 6.6 L11.6 6.6 L12.9 6.1 L14.2 4.6" fill="none" stroke="#a010b0" stroke-width="2.05" stroke-linecap="round" stroke-linejoin="round"/>
<path transform="translate(1182.3,640.8) rotate(90) scale(1,-1)" d="M-6.7 -5.1 L-8.0 -6.9 L-9.9 -7.3 L-11.1 -7.3 L-13.0 -5.8 L-13.9 -2.9 L-13.9 2.9 L-13.0 5.8 L-11.1 7.3 L-9.2 7.3 L-7.4 6.3 L-6.4 4.4 L-6.4 0.7 L-9.9 0.7 M-2.1 -1.9 L-2.1 7.3 M-2.1 0.0 L-0.6 -1.5 L0.7 -1.9 L2.0 -1.9 L3.2 -1.0 L3.7 0.7 L3.7 7.3 M13.9 -7.3 L13.9 7.3 M13.7 0.0 L12.5 -1.5 L11.2 -1.9 L10.0 -1.9 L8.5 -1.0 L7.9 0.7 L7.9 4.4 L8.5 6.4 L10.0 7.3 L11.2 7.3 L12.5 6.7 L13.7 5.1" fill="none" stroke="#a010b0" stroke-width="2.26" stroke-linecap="round" stroke-linejoin="round"/>
<path transform="translate(1142.5,649.8) rotate(90) scale(1,-1)" d="M-12.0 -3.6 L-9.5 -6.0 L-9.5 6.0 M-12.0 6.0 L-6.9 6.0 M-2.8 -1.6 L-2.8 6.0 M-2.8 0.0 L-1.6 -1.2 L-0.5 -1.6 L0.6 -1.6 L1.6 -0.8 L2.0 0.6 L2.0 6.0 M5.0 6.0 L8.5 -6.0 L12.0 6.0 M6.3 1.9 L10.8 1.9" fill="none" stroke="#a010b0" stroke-width="1.88" stroke-linecap="round" stroke-linejoin="round"/>
<path transform="translate(1074.4,628.0) rotate(90) scale(1,-1)" d="M-25.3 5.4 L-21.7 -5.4 L-18.1 5.4 M-24.1 1.7 L-19.4 1.7 M-14.9 5.4 L-14.9 -5.4 L-9.0 5.4 L-9.0 -5.4 M-5.9 -5.4 L1.3 -5.4 M-2.3 -5.4 L-2.3 5.4 M4.6 -3.2 L7.3 -5.4 L7.3 5.4 M4.6 5.4 L9.9 5.4 M20.6 0.0 L25.3 0.0" fill="none" stroke="#a010b0" stroke-width="1.67" stroke-linecap="round" stroke-linejoin="round"/>
<path transform="translate(1364.8,797.9) rotate(90) scale(1,-1)" d="M-55.1 9.2 L-55.1 -9.2 L-50.5 -9.2 L-47.4 -7.8 L-45.4 -4.6 L-44.5 0.0 L-45.4 4.6 L-47.4 7.8 L-50.5 9.2 L-55.1 9.2 M-38.3 9.2 L-38.3 -9.2 L-32.0 -9.2 L-29.2 -7.8 L-28.0 -4.6 L-29.2 -1.3 L-32.0 0.0 L-38.3 0.0 M-32.9 0.0 L-27.8 9.2 M-22.7 9.2 L-16.5 -9.2 L-10.3 9.2 M-20.5 3.0 L-12.5 3.0 M0.1 -0.7 L-3.0 -1.8 L-4.3 -3.7 L-4.3 -6.5 L-2.1 -9.1 L2.1 -9.1 L4.3 -6.5 L4.3 -3.7 L3.0 -1.8 L0.1 -0.7 L-3.0 0.4 L-4.8 2.8 L-4.8 6.7 L-2.5 9.2 L2.5 9.2 L5.0 6.7 L5.0 2.8 L3.2 0.4 L0.1 -0.7 M12.1 -5.5 L16.7 -9.2 L16.7 9.2 M12.1 9.2 L21.2 9.2 M33.2 -0.7 L30.1 -1.8 L28.9 -3.7 L28.9 -6.5 L31.1 -9.1 L35.2 -9.1 L37.4 -6.5 L37.4 -3.7 L36.2 -1.8 L33.2 -0.7 L30.1 0.4 L28.3 2.8 L28.3 6.7 L30.7 9.2 L35.6 9.2 L38.2 6.7 L38.2 2.8 L36.3 0.4 L33.2 -0.7 M44.9 -9.2 L44.9 4.6 L46.2 8.0 L48.5 9.2 L51.5 9.2 L53.8 8.0 L55.1 4.6 L55.1 -9.2" fill="none" stroke="#a8a8a8" stroke-width="2.87" stroke-linecap="round" stroke-linejoin="round"/>
<polyline points="1020.0,489.0 1374.0,489.0 1374.0,1513.0 1278.5,1513.0 1234.0,1462.6 1172.6,1462.6 1129.0,1513.0 1020.0,1513.0 1020.0,489.0" fill="none" stroke="#d0d400" stroke-width="2.5"/>
<circle cx="1036.6" cy="505.3" r="12.0" fill="none" stroke="#d0d400" stroke-width="2.5"/>
<circle cx="1357.6" cy="505.5" r="11.0" fill="none" stroke="#d0d400" stroke-width="2.5"/>
<circle cx="1036.3" cy="1495.0" r="12.0" fill="none" stroke="#d0d400" stroke-width="2.5"/>
<circle cx="1357.7" cy="1498.6" r="12.0" fill="none" stroke="#d0d400" stroke-width="2.5"/>
<circle cx="1062.0" cy="861.4" r="10.6" fill="none" stroke="#b0b030" stroke-width="1.0"/>
<circle cx="1062.0" cy="861.4" r="9.4" fill="#9a9a2a"/>
<circle cx="1062.0" cy="861.4" r="3.8" fill="#000"/>
<path transform="translate(1062.0,861.4)" d="M-1.5 -1.8 L0.0 -3.0 L0.0 3.0 M-1.5 3.0 L1.5 3.0" fill="none" stroke="#f0f0f0" stroke-width="1.00" stroke-linecap="round" stroke-linejoin="round"/>
<circle cx="1347.8" cy="861.4" r="10.6" fill="none" stroke="#b0b030" stroke-width="1.0"/>
<circle cx="1347.8" cy="861.4" r="9.4" fill="#9a9a2a"/>
<circle cx="1347.8" cy="861.4" r="3.8" fill="#000"/>
<path transform="translate(1347.8,861.4)" d="M-3.5 -1.8 L-2.3 -3.0 L-2.3 3.0 M-3.5 3.0 L-1.1 3.0 M3.1 -2.7 L2.4 -3.0 L1.9 -3.0 L1.2 -2.4 L0.7 -1.2 L0.7 1.2 L1.2 2.6 L1.9 3.0 L2.6 3.0 L3.1 2.6 L3.5 1.5 L3.5 0.9 L3.1 -0.2 L2.6 -0.6 L1.9 -0.6 L1.2 -0.2 L0.7 0.9" fill="none" stroke="#f0f0f0" stroke-width="1.00" stroke-linecap="round" stroke-linejoin="round"/>
<circle cx="1062.0" cy="890.0" r="10.6" fill="none" stroke="#b0b030" stroke-width="1.0"/>
<circle cx="1062.0" cy="890.0" r="9.4" fill="#9a9a2a"/>
<circle cx="1062.0" cy="890.0" r="3.8" fill="#000"/>
<path transform="translate(1062.0,890.0)" d="M-1.5 -1.8 L-1.0 -2.7 L-0.5 -3.0 L0.6 -3.0 L1.1 -2.5 L1.3 -1.5 L1.1 -0.6 L-1.5 3.0 L1.5 3.0" fill="none" stroke="#f0f0f0" stroke-width="1.00" stroke-linecap="round" stroke-linejoin="round"/>
<circle cx="1347.8" cy="890.0" r="10.6" fill="none" stroke="#b0b030" stroke-width="1.0"/>
<circle cx="1347.8" cy="890.0" r="9.4" fill="#9a9a2a"/>
<circle cx="1347.8" cy="890.0" r="3.8" fill="#000"/>
<path transform="translate(1347.8,885.3)" d="M-3.5 -1.4 L-2.3 -2.2 L-2.3 2.2 M-3.5 2.2 L-1.1 2.2 M0.5 -2.2 L3.5 -2.2 L1.5 2.2" fill="none" stroke="#f0f0f0" stroke-width="1.00" stroke-linecap="round" stroke-linejoin="round"/>
<path transform="translate(1347.8,894.0)" d="M-3.0 -1.8 L-3.5 -2.4 L-4.3 -2.5 L-4.8 -2.5 L-5.5 -2.2 L-5.9 -1.6 L-5.9 -1.0 L-5.5 -0.4 L-4.8 -0.1 L-3.9 0.2 L-3.2 0.6 L-2.9 1.4 L-3.1 2.2 L-3.9 2.5 L-4.8 2.5 L-5.5 2.2 L-6.0 1.8 M1.6 -1.5 L1.1 -2.2 L0.4 -2.5 L-0.2 -2.5 L-0.9 -2.0 L-1.3 -1.0 L-1.3 1.0 L-0.9 2.0 L-0.2 2.5 L0.4 2.5 L1.1 2.2 L1.6 1.5 M3.4 -2.5 L3.4 2.5 L6.0 2.5" fill="none" stroke="#f0f0f0" stroke-width="1.00" stroke-linecap="round" stroke-linejoin="round"/>
<circle cx="1062.0" cy="918.7" r="10.6" fill="none" stroke="#b0b030" stroke-width="1.0"/>
<circle cx="1062.0" cy="918.7" r="9.4" fill="#9a9a2a"/>
<circle cx="1062.0" cy="918.7" r="3.8" fill="#000"/>
<path transform="translate(1062.0,918.7)" d="M-1.5 -3.0 L1.3 -3.0 L-0.3 -0.6 L0.4 -0.6 L1.2 -0.1 L1.5 1.2 L1.2 2.4 L0.5 3.0 L-0.8 3.0 L-1.5 2.5" fill="none" stroke="#f0f0f0" stroke-width="1.00" stroke-linecap="round" stroke-linejoin="round"/>
<circle cx="1347.8" cy="918.7" r="10.6" fill="none" stroke="#b0b030" stroke-width="1.0"/>
<circle cx="1347.8" cy="918.7" r="9.4" fill="#9a9a2a"/>
<circle cx="1347.8" cy="918.7" r="3.8" fill="#000"/>
<path transform="translate(1347.8,918.7)" d="M-3.5 -1.8 L-2.3 -3.0 L-2.3 3.0 M-3.5 3.0 L-1.1 3.0 M2.2 -0.2 L1.3 -0.6 L1.0 -1.2 L1.0 -2.1 L1.6 -2.9 L2.7 -2.9 L3.3 -2.1 L3.3 -1.2 L3.0 -0.6 L2.2 -0.2 L1.3 0.1 L0.9 0.9 L0.9 2.2 L1.5 3.0 L2.8 3.0 L3.5 2.2 L3.5 0.9 L3.0 0.1 L2.2 -0.2" fill="none" stroke="#f0f0f0" stroke-width="1.00" stroke-linecap="round" stroke-linejoin="round"/>
<circle cx="1062.0" cy="947.3" r="10.6" fill="none" stroke="#b0b030" stroke-width="1.0"/>
<circle cx="1062.0" cy="947.3" r="9.4" fill="#9a9a2a"/>
<circle cx="1062.0" cy="947.3" r="3.8" fill="#000"/>
<path transform="translate(1062.0,947.3)" d="M0.6 3.0 L0.6 -3.0 L-1.5 1.2 L1.5 1.2" fill="none" stroke="#f0f0f0" stroke-width="1.00" stroke-linecap="round" stroke-linejoin="round"/>
<circle cx="1347.8" cy="947.3" r="10.6" fill="none" stroke="#b0b030" stroke-width="1.0"/>
<circle cx="1347.8" cy="947.3" r="9.4" fill="#9a9a2a"/>
<circle cx="1347.8" cy="947.3" r="3.8" fill="#000"/>
<path transform="translate(1347.8,947.3)" d="M-3.5 -1.8 L-2.3 -3.0 L-2.3 3.0 M-3.5 3.0 L-1.1 3.0 M3.5 -0.9 L3.0 0.2 L2.3 0.6 L1.8 0.6 L1.1 0.2 L0.7 -0.7 L0.7 -1.5 L1.1 -2.5 L1.8 -3.0 L2.3 -3.0 L3.0 -2.5 L3.5 -1.2 L3.5 1.2 L3.0 2.5 L2.3 3.0 L1.6 3.0 L0.8 2.6" fill="none" stroke="#f0f0f0" stroke-width="1.00" stroke-linecap="round" stroke-linejoin="round"/>
<circle cx="1062.0" cy="976.0" r="10.6" fill="none" stroke="#b0b030" stroke-width="1.0"/>
<circle cx="1062.0" cy="976.0" r="9.4" fill="#9a9a2a"/>
<circle cx="1062.0" cy="976.0" r="3.8" fill="#000"/>
<path transform="translate(1062.0,976.0)" d="M1.2 -3.0 L-1.2 -3.0 L-1.5 -0.2 L-0.8 -0.6 L0.1 -0.6 L1.0 -0.1 L1.5 0.9 L1.5 1.8 L1.0 2.7 L0.1 3.0 L-0.7 3.0 L-1.5 2.4" fill="none" stroke="#f0f0f0" stroke-width="1.00" stroke-linecap="round" stroke-linejoin="round"/>
<circle cx="1347.8" cy="976.0" r="10.6" fill="none" stroke="#b0b030" stroke-width="1.0"/>
<circle cx="1347.8" cy="976.0" r="9.4" fill="#9a9a2a"/>
<circle cx="1347.8" cy="976.0" r="3.8" fill="#000"/>
<path transform="translate(1347.8,971.2)" d="M-3.5 -1.4 L-3.0 -2.0 L-2.5 -2.2 L-1.6 -2.2 L-1.1 -1.9 L-0.9 -1.1 L-1.1 -0.4 L-3.5 2.2 L-0.7 2.2 M0.9 -0.9 L0.9 0.9 L1.3 1.8 L1.8 2.2 L2.5 2.2 L3.0 1.8 L3.5 0.9 L3.5 -0.9 L3.0 -1.8 L2.5 -2.2 L1.8 -2.2 L1.3 -1.8 L0.9 -0.9" fill="none" stroke="#f0f0f0" stroke-width="1.00" stroke-linecap="round" stroke-linejoin="round"/>
<path transform="translate(1347.8,980.0)" d="M-3.1 -1.8 L-3.6 -2.4 L-4.3 -2.5 L-4.8 -2.5 L-5.5 -2.2 L-5.9 -1.6 L-5.9 -1.0 L-5.5 -0.4 L-4.8 -0.1 L-3.9 0.2 L-3.3 0.6 L-3.0 1.4 L-3.2 2.2 L-3.9 2.5 L-4.8 2.5 L-5.5 2.2 L-6.0 1.8 M-1.4 2.5 L-1.4 -2.5 L-0.2 -2.5 L0.6 -2.1 L1.2 -1.2 L1.4 0.0 L1.2 1.2 L0.6 2.1 L-0.2 2.5 L-1.4 2.5 M2.7 2.5 L4.4 -2.5 L6.0 2.5 M3.3 0.8 L5.4 0.8" fill="none" stroke="#f0f0f0" stroke-width="1.00" stroke-linecap="round" stroke-linejoin="round"/>
<circle cx="1062.0" cy="1004.6" r="10.6" fill="none" stroke="#b0b030" stroke-width="1.0"/>
<circle cx="1062.0" cy="1004.6" r="9.4" fill="#9a9a2a"/>
<circle cx="1062.0" cy="1004.6" r="3.8" fill="#000"/>
<path transform="translate(1062.0,1004.6)" d="M1.1 -2.7 L0.3 -3.0 L-0.2 -3.0 L-1.0 -2.4 L-1.5 -1.2 L-1.5 1.2 L-1.0 2.6 L-0.2 3.0 L0.6 3.0 L1.1 2.6 L1.5 1.5 L1.5 0.9 L1.1 -0.2 L0.6 -0.6 L-0.2 -0.6 L-1.0 -0.2 L-1.5 0.9" fill="none" stroke="#f0f0f0" stroke-width="1.00" stroke-linecap="round" stroke-linejoin="round"/>
<circle cx="1347.8" cy="1004.6" r="10.6" fill="none" stroke="#b0b030" stroke-width="1.0"/>
<circle cx="1347.8" cy="1004.6" r="9.4" fill="#9a9a2a"/>
<circle cx="1347.8" cy="1004.6" r="3.8" fill="#000"/>
<path transform="translate(1347.8,1004.6)" d="M-3.5 -1.8 L-3.0 -2.7 L-2.5 -3.0 L-1.5 -3.0 L-1.1 -2.5 L-0.8 -1.5 L-1.1 -0.6 L-3.5 3.0 L-0.7 3.0 M1.1 -1.8 L2.3 -3.0 L2.3 3.0 M1.1 3.0 L3.5 3.0" fill="none" stroke="#f0f0f0" stroke-width="1.00" stroke-linecap="round" stroke-linejoin="round"/>
<circle cx="1062.0" cy="1033.3" r="10.6" fill="none" stroke="#b0b030" stroke-width="1.0"/>
<circle cx="1062.0" cy="1033.3" r="9.4" fill="#9a9a2a"/>
<circle cx="1062.0" cy="1033.3" r="3.8" fill="#000"/>
<path transform="translate(1062.0,1033.3)" d="M-1.5 -3.0 L1.5 -3.0 L-0.5 3.0" fill="none" stroke="#f0f0f0" stroke-width="1.00" stroke-linecap="round" stroke-linejoin="round"/>
<circle cx="1347.8" cy="1033.3" r="10.6" fill="none" stroke="#b0b030" stroke-width="1.0"/>
<circle cx="1347.8" cy="1033.3" r="9.4" fill="#9a9a2a"/>
<circle cx="1347.8" cy="1033.3" r="3.8" fill="#000"/>
<path transform="translate(1347.8,1033.3)" d="M-3.5 -1.8 L-3.0 -2.7 L-2.6 -3.0 L-1.6 -3.0 L-1.2 -2.5 L-0.9 -1.5 L-1.2 -0.6 L-3.5 3.0 L-0.8 3.0 M0.8 -1.8 L1.2 -2.7 L1.7 -3.0 L2.7 -3.0 L3.1 -2.5 L3.4 -1.5 L3.1 -0.6 L0.8 3.0 L3.5 3.0" fill="none" stroke="#f0f0f0" stroke-width="1.00" stroke-linecap="round" stroke-linejoin="round"/>
<circle cx="1062.0" cy="1062.0" r="10.6" fill="none" stroke="#b0b030" stroke-width="1.0"/>
<circle cx="1062.0" cy="1062.0" r="9.4" fill="#9a9a2a"/>
<circle cx="1062.0" cy="1062.0" r="3.8" fill="#000"/>
<path transform="translate(1062.0,1062.0)" d="M-0.0 -0.2 L-0.9 -0.6 L-1.3 -1.2 L-1.3 -2.1 L-0.7 -2.9 L0.6 -2.9 L1.3 -2.1 L1.3 -1.2 L0.9 -0.6 L-0.0 -0.2 L-0.9 0.1 L-1.5 0.9 L-1.5 2.2 L-0.8 3.0 L0.7 3.0 L1.5 2.2 L1.5 0.9 L0.9 0.1 L-0.0 -0.2" fill="none" stroke="#f0f0f0" stroke-width="1.00" stroke-linecap="round" stroke-linejoin="round"/>
<circle cx="1347.8" cy="1062.0" r="10.6" fill="none" stroke="#b0b030" stroke-width="1.0"/>
<circle cx="1347.8" cy="1062.0" r="9.4" fill="#9a9a2a"/>
<circle cx="1347.8" cy="1062.0" r="3.8" fill="#000"/>
<path transform="translate(1347.8,1062.0)" d="M-3.5 -1.8 L-3.0 -2.7 L-2.5 -3.0 L-1.6 -3.0 L-1.1 -2.5 L-0.9 -1.5 L-1.1 -0.6 L-3.5 3.0 L-0.7 3.0 M0.8 -3.0 L3.4 -3.0 L1.9 -0.6 L2.5 -0.6 L3.2 -0.1 L3.5 1.2 L3.2 2.4 L2.6 3.0 L1.5 3.0 L0.8 2.5" fill="none" stroke="#f0f0f0" stroke-width="1.00" stroke-linecap="round" stroke-linejoin="round"/>
<circle cx="1062.0" cy="1090.6" r="10.6" fill="none" stroke="#b0b030" stroke-width="1.0"/>
<circle cx="1062.0" cy="1090.6" r="9.4" fill="#9a9a2a"/>
<circle cx="1062.0" cy="1090.6" r="3.8" fill="#000"/>
<path transform="translate(1062.0,1090.6)" d="M1.5 -0.9 L1.0 0.2 L0.2 0.6 L-0.3 0.6 L-1.1 0.2 L-1.5 -0.7 L-1.5 -1.5 L-1.1 -2.5 L-0.3 -3.0 L0.2 -3.0 L1.0 -2.5 L1.5 -1.2 L1.5 1.2 L1.0 2.5 L0.2 3.0 L-0.6 3.0 L-1.4 2.6" fill="none" stroke="#f0f0f0" stroke-width="1.00" stroke-linecap="round" stroke-linejoin="round"/>
<circle cx="1347.8" cy="1090.6" r="10.6" fill="none" stroke="#b0b030" stroke-width="1.0"/>
<circle cx="1347.8" cy="1090.6" r="9.4" fill="#9a9a2a"/>
<circle cx="1347.8" cy="1090.6" r="3.8" fill="#000"/>
<path transform="translate(1347.8,1090.6)" d="M-3.5 -1.8 L-3.0 -2.7 L-2.6 -3.0 L-1.6 -3.0 L-1.2 -2.5 L-1.0 -1.5 L-1.2 -0.6 L-3.5 3.0 L-0.8 3.0 M2.6 3.0 L2.6 -3.0 L0.5 1.2 L3.5 1.2" fill="none" stroke="#f0f0f0" stroke-width="1.00" stroke-linecap="round" stroke-linejoin="round"/>
<circle cx="1062.0" cy="1119.2" r="10.6" fill="none" stroke="#b0b030" stroke-width="1.0"/>
<circle cx="1062.0" cy="1119.2" r="9.4" fill="#9a9a2a"/>
<circle cx="1062.0" cy="1119.2" r="3.8" fill="#000"/>
<path transform="translate(1062.0,1119.2)" d="M-3.5 -1.8 L-2.3 -3.0 L-2.3 3.0 M-3.5 3.0 L-1.1 3.0 M0.8 -1.2 L0.8 1.2 L1.3 2.4 L1.8 3.0 L2.5 3.0 L3.0 2.4 L3.5 1.2 L3.5 -1.2 L3.0 -2.4 L2.5 -3.0 L1.8 -3.0 L1.3 -2.4 L0.8 -1.2" fill="none" stroke="#f0f0f0" stroke-width="1.00" stroke-linecap="round" stroke-linejoin="round"/>
<circle cx="1347.8" cy="1119.2" r="10.6" fill="none" stroke="#b0b030" stroke-width="1.0"/>
<circle cx="1347.8" cy="1119.2" r="9.4" fill="#9a9a2a"/>
<circle cx="1347.8" cy="1119.2" r="3.8" fill="#000"/>
<path transform="translate(1347.8,1114.5)" d="M-3.5 -1.4 L-3.0 -2.0 L-2.5 -2.2 L-1.6 -2.2 L-1.1 -1.9 L-0.9 -1.1 L-1.1 -0.4 L-3.5 2.2 L-0.7 2.2 M3.3 -2.2 L1.1 -2.2 L0.9 -0.2 L1.4 -0.4 L2.3 -0.4 L3.1 -0.1 L3.5 0.7 L3.5 1.4 L3.1 2.0 L2.3 2.2 L1.6 2.2 L0.9 1.8" fill="none" stroke="#f0f0f0" stroke-width="1.00" stroke-linecap="round" stroke-linejoin="round"/>
<path transform="translate(1347.8,1123.2)" d="M-6.0 2.5 L-6.0 -2.5 L-3.2 -2.5 L-2.0 -2.1 L-1.4 -1.2 L-2.0 -0.4 L-3.2 0.0 L-6.0 0.0 M-3.6 0.0 L-1.4 2.5 M1.0 -2.5 L6.0 2.5 M6.0 -2.5 L1.0 2.5" fill="none" stroke="#f0f0f0" stroke-width="1.00" stroke-linecap="round" stroke-linejoin="round"/>
<circle cx="1062.0" cy="1147.9" r="10.6" fill="none" stroke="#b0b030" stroke-width="1.0"/>
<circle cx="1062.0" cy="1147.9" r="9.4" fill="#9a9a2a"/>
<circle cx="1062.0" cy="1147.9" r="3.8" fill="#000"/>
<path transform="translate(1062.0,1147.9)" d="M-3.5 -1.8 L-2.3 -3.0 L-2.3 3.0 M-3.5 3.0 L-1.0 3.0 M1.0 -1.8 L2.3 -3.0 L2.3 3.0 M1.0 3.0 L3.5 3.0" fill="none" stroke="#f0f0f0" stroke-width="1.00" stroke-linecap="round" stroke-linejoin="round"/>
<circle cx="1347.8" cy="1147.9" r="10.6" fill="none" stroke="#b0b030" stroke-width="1.0"/>
<circle cx="1347.8" cy="1147.9" r="9.4" fill="#9a9a2a"/>
<circle cx="1347.8" cy="1147.9" r="3.8" fill="#000"/>
<path transform="translate(1347.8,1147.9)" d="M-3.5 -1.8 L-3.0 -2.7 L-2.6 -3.0 L-1.6 -3.0 L-1.2 -2.5 L-0.9 -1.5 L-1.2 -0.6 L-3.5 3.0 L-0.8 3.0 M3.1 -2.7 L2.4 -3.0 L1.9 -3.0 L1.2 -2.4 L0.8 -1.2 L0.8 1.2 L1.2 2.6 L1.9 3.0 L2.7 3.0 L3.1 2.6 L3.5 1.5 L3.5 0.9 L3.1 -0.2 L2.7 -0.6 L1.9 -0.6 L1.2 -0.2 L0.8 0.9" fill="none" stroke="#f0f0f0" stroke-width="1.00" stroke-linecap="round" stroke-linejoin="round"/>
<circle cx="1062.0" cy="1176.5" r="10.6" fill="none" stroke="#b0b030" stroke-width="1.0"/>
<circle cx="1062.0" cy="1176.5" r="9.4" fill="#9a9a2a"/>
<circle cx="1062.0" cy="1176.5" r="3.8" fill="#000"/>
<path transform="translate(1062.0,1176.5)" d="M-3.5 -1.8 L-2.3 -3.0 L-2.3 3.0 M-3.5 3.0 L-1.1 3.0 M0.7 -1.8 L1.2 -2.7 L1.7 -3.0 L2.6 -3.0 L3.1 -2.5 L3.4 -1.5 L3.1 -0.6 L0.7 3.0 L3.5 3.0" fill="none" stroke="#f0f0f0" stroke-width="1.00" stroke-linecap="round" stroke-linejoin="round"/>
<circle cx="1347.8" cy="1176.5" r="10.6" fill="none" stroke="#b0b030" stroke-width="1.0"/>
<circle cx="1347.8" cy="1176.5" r="9.4" fill="#9a9a2a"/>
<circle cx="1347.8" cy="1176.5" r="3.8" fill="#000"/>
<path transform="translate(1347.8,1176.5)" d="M-3.5 -1.8 L-3.0 -2.7 L-2.6 -3.0 L-1.6 -3.0 L-1.2 -2.5 L-0.9 -1.5 L-1.2 -0.6 L-3.5 3.0 L-0.8 3.0 M0.6 -3.0 L3.5 -3.0 L1.5 3.0" fill="none" stroke="#f0f0f0" stroke-width="1.00" stroke-linecap="round" stroke-linejoin="round"/>
<circle cx="1062.0" cy="1205.2" r="10.6" fill="none" stroke="#b0b030" stroke-width="1.0"/>
<circle cx="1062.0" cy="1205.2" r="9.4" fill="#9a9a2a"/>
<circle cx="1062.0" cy="1205.2" r="3.8" fill="#000"/>
<path transform="translate(1062.0,1205.2)" d="M-3.5 -1.8 L-2.3 -3.0 L-2.3 3.0 M-3.5 3.0 L-1.1 3.0 M0.8 -3.0 L3.4 -3.0 L1.9 -0.6 L2.5 -0.6 L3.2 -0.1 L3.5 1.2 L3.2 2.4 L2.6 3.0 L1.4 3.0 L0.8 2.5" fill="none" stroke="#f0f0f0" stroke-width="1.00" stroke-linecap="round" stroke-linejoin="round"/>
<circle cx="1347.8" cy="1205.2" r="10.6" fill="none" stroke="#b0b030" stroke-width="1.0"/>
<circle cx="1347.8" cy="1205.2" r="9.4" fill="#9a9a2a"/>
<circle cx="1347.8" cy="1205.2" r="3.8" fill="#000"/>
<path transform="translate(1347.8,1205.2)" d="M-3.5 -1.8 L-3.0 -2.7 L-2.5 -3.0 L-1.6 -3.0 L-1.1 -2.5 L-0.8 -1.5 L-1.1 -0.6 L-3.5 3.0 L-0.7 3.0 M2.2 -0.2 L1.4 -0.6 L1.0 -1.2 L1.0 -2.1 L1.6 -2.9 L2.7 -2.9 L3.3 -2.1 L3.3 -1.2 L3.0 -0.6 L2.2 -0.2 L1.4 0.1 L0.9 0.9 L0.9 2.2 L1.5 3.0 L2.8 3.0 L3.5 2.2 L3.5 0.9 L3.0 0.1 L2.2 -0.2" fill="none" stroke="#f0f0f0" stroke-width="1.00" stroke-linecap="round" stroke-linejoin="round"/>
<circle cx="1062.0" cy="1233.8" r="10.6" fill="none" stroke="#b0b030" stroke-width="1.0"/>
<circle cx="1062.0" cy="1233.8" r="9.4" fill="#9a9a2a"/>
<circle cx="1062.0" cy="1233.8" r="3.8" fill="#000"/>
<path transform="translate(1062.0,1229.1)" d="M-3.5 -1.4 L-2.3 -2.2 L-2.3 2.2 M-3.5 2.2 L-1.2 2.2 M2.6 2.2 L2.6 -2.2 L0.5 0.9 L3.5 0.9" fill="none" stroke="#f0f0f0" stroke-width="1.00" stroke-linecap="round" stroke-linejoin="round"/>
<path transform="translate(1062.0,1237.8)" d="M-3.2 -1.8 L-3.7 -2.4 L-4.4 -2.5 L-4.9 -2.5 L-5.7 -2.0 L-6.0 -1.0 L-6.0 1.0 L-5.7 2.0 L-4.9 2.5 L-4.2 2.5 L-3.4 2.2 L-3.0 1.5 L-3.0 0.2 L-4.4 0.2 M-1.4 2.5 L-1.4 -2.5 L1.4 2.5 L1.4 -2.5 M3.1 2.5 L3.1 -2.5 L4.4 -2.5 L5.2 -2.1 L5.8 -1.2 L6.0 0.0 L5.8 1.2 L5.2 2.1 L4.4 2.5 L3.1 2.5" fill="none" stroke="#f0f0f0" stroke-width="1.00" stroke-linecap="round" stroke-linejoin="round"/>
<circle cx="1347.8" cy="1233.8" r="10.6" fill="none" stroke="#b0b030" stroke-width="1.0"/>
<circle cx="1347.8" cy="1233.8" r="9.4" fill="#9a9a2a"/>
<circle cx="1347.8" cy="1233.8" r="3.8" fill="#000"/>
<path transform="translate(1347.8,1229.1)" d="M-3.5 -1.4 L-3.0 -2.0 L-2.5 -2.2 L-1.6 -2.2 L-1.1 -1.9 L-0.9 -1.1 L-1.1 -0.4 L-3.5 2.2 L-0.7 2.2 M3.5 -0.7 L3.0 0.1 L2.3 0.5 L1.8 0.5 L1.1 0.1 L0.8 -0.5 L0.8 -1.1 L1.1 -1.9 L1.8 -2.2 L2.3 -2.2 L3.0 -1.9 L3.5 -0.9 L3.5 0.9 L3.0 1.9 L2.3 2.2 L1.6 2.2 L0.9 1.9" fill="none" stroke="#f0f0f0" stroke-width="1.00" stroke-linecap="round" stroke-linejoin="round"/>
<path transform="translate(1347.8,1237.8)" d="M-3.2 -1.8 L-3.7 -2.4 L-4.4 -2.5 L-4.9 -2.5 L-5.7 -2.0 L-6.0 -1.0 L-6.0 1.0 L-5.7 2.0 L-4.9 2.5 L-4.2 2.5 L-3.4 2.2 L-3.0 1.5 L-3.0 0.2 L-4.4 0.2 M-1.4 2.5 L-1.4 -2.5 L1.4 2.5 L1.4 -2.5 M3.1 2.5 L3.1 -2.5 L4.4 -2.5 L5.2 -2.1 L5.8 -1.2 L6.0 0.0 L5.8 1.2 L5.2 2.1 L4.4 2.5 L3.1 2.5" fill="none" stroke="#f0f0f0" stroke-width="1.00" stroke-linecap="round" stroke-linejoin="round"/>
<circle cx="1062.0" cy="1262.5" r="10.6" fill="none" stroke="#b0b030" stroke-width="1.0"/>
<circle cx="1062.0" cy="1262.5" r="9.4" fill="#9a9a2a"/>
<circle cx="1062.0" cy="1262.5" r="3.8" fill="#000"/>
<path transform="translate(1062.0,1257.8)" d="M-3.5 -1.4 L-2.3 -2.2 L-2.3 2.2 M-3.5 2.2 L-1.1 2.2 M3.3 -2.2 L1.1 -2.2 L0.8 -0.2 L1.4 -0.4 L2.3 -0.4 L3.1 -0.1 L3.5 0.7 L3.5 1.4 L3.1 2.0 L2.3 2.2 L1.6 2.2 L0.8 1.8" fill="none" stroke="#f0f0f0" stroke-width="1.00" stroke-linecap="round" stroke-linejoin="round"/>
<path transform="translate(1062.0,1266.5)" d="M-2.1 -2.5 L-5.6 -2.5 L-6.0 -0.2 L-5.1 -0.5 L-3.6 -0.5 L-2.4 -0.1 L-1.7 0.8 L-1.7 1.5 L-2.4 2.2 L-3.6 2.5 L-4.8 2.5 L-6.0 2.0 M0.6 -2.5 L3.3 2.5 L6.0 -2.5" fill="none" stroke="#f0f0f0" stroke-width="1.00" stroke-linecap="round" stroke-linejoin="round"/>
<circle cx="1347.8" cy="1262.5" r="10.6" fill="none" stroke="#b0b030" stroke-width="1.0"/>
<circle cx="1347.8" cy="1262.5" r="9.4" fill="#9a9a2a"/>
<circle cx="1347.8" cy="1262.5" r="3.8" fill="#000"/>
<path transform="translate(1347.8,1257.8)" d="M-3.5 -2.2 L-1.0 -2.2 L-2.4 -0.4 L-1.8 -0.4 L-1.1 -0.1 L-0.8 0.9 L-1.1 1.8 L-1.7 2.2 L-2.9 2.2 L-3.5 1.9 M0.9 -0.9 L0.9 0.9 L1.3 1.8 L1.8 2.2 L2.5 2.2 L3.0 1.8 L3.5 0.9 L3.5 -0.9 L3.0 -1.8 L2.5 -2.2 L1.8 -2.2 L1.3 -1.8 L0.9 -0.9" fill="none" stroke="#f0f0f0" stroke-width="1.00" stroke-linecap="round" stroke-linejoin="round"/>
<path transform="translate(1347.8,1266.5)" d="M-6.0 -2.5 L-4.2 2.5 L-2.3 -2.5 M1.7 -0.2 L1.1 -0.6 L0.3 -0.6 L-0.4 -0.4 L-0.8 0.2 L-0.8 1.5 L-0.4 2.2 L0.3 2.5 L1.1 2.5 L1.7 2.2 M6.0 -0.2 L5.5 -0.6 L4.6 -0.6 L3.9 -0.4 L3.6 0.2 L3.6 1.5 L3.9 2.2 L4.6 2.5 L5.5 2.5 L6.0 2.2" fill="none" stroke="#f0f0f0" stroke-width="1.00" stroke-linecap="round" stroke-linejoin="round"/>
<rect x="1090.5" y="962.5" width="94.1" height="37.0" fill="none" stroke="#20a020" stroke-width="1.2"/>
<rect x="1092.0" y="964.0" width="91.1" height="34.0" fill="#009000"/>
<rect x="1224.8" y="965.0" width="93.3" height="37.0" fill="none" stroke="#20a020" stroke-width="1.2"/>
<rect x="1226.3" y="966.5" width="90.3" height="34.0" fill="#009000"/>
<rect x="1081.0" y="879.5" width="49.6" height="21.7" fill="none" stroke="#20a020" stroke-width="1.2"/>
<rect x="1082.5" y="881.0" width="46.6" height="18.7" fill="#009000"/>
<rect x="1081.0" y="925.5" width="49.6" height="20.7" fill="none" stroke="#20a020" stroke-width="1.2"/>
<rect x="1082.5" y="927.0" width="46.6" height="17.7" fill="#009000"/>
<rect x="1278.0" y="879.5" width="49.5" height="21.7" fill="none" stroke="#20a020" stroke-width="1.2"/>
<rect x="1279.5" y="881.0" width="46.5" height="18.7" fill="#009000"/>
<rect x="1278.0" y="925.5" width="49.5" height="20.7" fill="none" stroke="#20a020" stroke-width="1.2"/>
<rect x="1279.5" y="927.0" width="46.5" height="17.7" fill="#009000"/>
<path transform="translate(1105.5,887.5)" d="M-7.5 3.5 L-7.5 -3.5 L-4.0 -3.5 L-2.5 -2.9 L-1.8 -1.8 L-2.5 -0.5 L-4.0 0.0 L-7.5 0.0 M-4.5 0.0 L-1.7 3.5 M1.3 -3.5 L7.5 3.5 M7.5 -3.5 L1.3 3.5" fill="none" stroke="#f0f0f0" stroke-width="1.08" stroke-linecap="round" stroke-linejoin="round"/>
<path transform="translate(1105.5,895.5)" d="M-7.5 -2.1 L-4.9 -3.5 L-4.9 3.5 M-7.5 3.5 L-2.4 3.5 M1.2 -3.5 L7.5 -3.5 L3.2 3.5" fill="none" stroke="#f0f0f0" stroke-width="1.08" stroke-linecap="round" stroke-linejoin="round"/>
<path transform="translate(1105.5,937.0)" d="M-7.5 -3.0 L-4.9 -5.0 L-4.9 5.0 M-7.5 5.0 L-2.3 5.0 M4.7 -0.4 L2.9 -1.0 L2.2 -2.0 L2.2 -3.5 L3.4 -4.9 L5.8 -4.9 L7.1 -3.5 L7.1 -2.0 L6.3 -1.0 L4.7 -0.4 L2.9 0.2 L1.8 1.5 L1.8 3.6 L3.2 5.0 L6.0 5.0 L7.5 3.6 L7.5 1.5 L6.5 0.2 L4.7 -0.4" fill="none" stroke="#f0f0f0" stroke-width="1.55" stroke-linecap="round" stroke-linejoin="round"/>
<path transform="translate(1302.5,890.0)" d="M-7.5 -4.8 L-4.9 -7.2 L-2.3 -8.0 L2.8 -8.0 L5.4 -6.7 L6.7 -4.0 L5.4 -1.6 L-7.5 8.0 L7.5 8.0" fill="none" stroke="#f0f0f0" stroke-width="2.48" stroke-linecap="round" stroke-linejoin="round"/>
<path transform="translate(1302.5,937.5)" d="M-3.5 -3.3 L0.0 -5.5 L0.0 5.5 M-3.5 5.5 L3.5 5.5" fill="none" stroke="#f0f0f0" stroke-width="1.71" stroke-linecap="round" stroke-linejoin="round"/>
<path transform="translate(1104.5,839.5)" d="M-6.5 -3.5 L-0.8 -3.5 M-3.6 -3.5 L-3.6 3.5 M1.3 -3.5 L6.5 3.5 M6.5 -3.5 L1.3 3.5" fill="none" stroke="#f0f0f0" stroke-width="1.08" stroke-linecap="round" stroke-linejoin="round"/>
<path transform="translate(1104.5,847.5)" d="M-6.5 -2.1 L-4.3 -3.5 L-4.3 3.5 M-6.5 3.5 L-2.1 3.5 M5.8 -3.1 L4.5 -3.5 L3.6 -3.5 L2.3 -2.8 L1.4 -1.4 L1.4 1.4 L2.3 3.0 L3.6 3.5 L4.9 3.5 L5.8 3.0 L6.5 1.8 L6.5 1.0 L5.8 -0.2 L4.9 -0.7 L3.6 -0.7 L2.3 -0.2 L1.4 1.0" fill="none" stroke="#f0f0f0" stroke-width="1.08" stroke-linecap="round" stroke-linejoin="round"/>
<path transform="translate(1302.0,842.0)" d="M-4.0 -6.0 L3.6 -6.0 L-0.9 -1.2 L1.0 -1.2 L3.1 -0.2 L4.0 2.4 L3.1 4.8 L1.4 6.0 L-2.1 6.0 L-4.0 5.0" fill="none" stroke="#f0f0f0" stroke-width="1.86" stroke-linecap="round" stroke-linejoin="round"/>
<rect x="1247.0" y="811.0" width="23.7" height="72.5" fill="none" stroke="#b4b4b4" stroke-width="1.3"/>
<rect x="1248.6" y="813.0" width="19.9" height="22.0" fill="#8c0000"/>
<rect x="1248.6" y="858.0" width="19.9" height="23.3" fill="#8c0000"/>
<rect x="1250.0" y="828.0" width="17.0" height="38.0" fill="none" stroke="#c8c800" stroke-width="1.4"/>
<path transform="translate(1281.0,850.5) rotate(-90)" d="M-20.5 -3.6 L-18.0 -6.0 L-18.0 6.0 M-20.5 6.0 L-15.5 6.0 M-11.5 -2.4 L-11.5 2.4 L-10.5 4.8 L-9.5 6.0 L-8.0 6.0 L-7.0 4.8 L-6.0 2.4 L-6.0 -2.4 L-7.0 -4.8 L-8.0 -6.0 L-9.5 -6.0 L-10.5 -4.8 L-11.5 -2.4 M-2.4 -2.4 L-2.4 2.4 L-1.4 4.8 L-0.4 6.0 L1.2 6.0 L2.2 4.8 L3.2 2.4 L3.2 -2.4 L2.2 -4.8 L1.2 -6.0 L-0.4 -6.0 L-1.4 -4.8 L-2.4 -2.4 M6.8 -1.6 L6.8 6.0 M6.8 0.0 L8.0 -1.2 L9.1 -1.6 L10.1 -1.6 L11.1 -0.8 L11.5 0.6 L11.5 6.0 M20.5 -6.0 L15.1 -6.0 L15.1 6.0 M15.1 -0.2 L19.1 -0.2" fill="none" stroke="#c8c800" stroke-width="1.86" stroke-linecap="round" stroke-linejoin="round"/>
<path transform="translate(1226.0,835.3)" d="M-19.0 -6.3 L-19.0 6.3 L-12.7 6.3 M-2.2 -3.8 L-3.4 -5.7 L-5.1 -6.3 L-6.5 -6.3 L-8.3 -5.0 L-9.1 -2.5 L-9.1 2.5 L-8.3 5.0 L-6.5 6.3 L-5.1 6.3 L-3.4 5.7 L-2.2 3.8 M2.0 6.3 L2.0 -6.3 L6.1 -6.3 L7.9 -5.3 L8.7 -3.2 L7.9 -0.6 L6.1 0.4 L2.0 0.4 M13.1 -3.8 L16.0 -6.3 L16.0 6.3 M13.1 6.3 L19.0 6.3" fill="none" stroke="#0fa0a4" stroke-width="1.95" stroke-linecap="round" stroke-linejoin="round"/>
<path transform="translate(1239.0,825.0) rotate(-90)" d="M-2.4 -4.2 L-3.7 -6.3 L-5.5 -7.0 L-7.1 -7.0 L-9.1 -5.6 L-10.0 -2.8 L-10.0 2.8 L-9.1 5.6 L-7.1 7.0 L-5.5 7.0 L-3.7 6.3 L-2.4 4.2 M1.8 -7.0 L10.0 -7.0 L4.5 7.0" fill="none" stroke="#d8d898" stroke-width="2.17" stroke-linecap="round" stroke-linejoin="round"/>
<polyline points="1090.6,999.9 1318.0,999.9" fill="none" stroke="#a010b0" stroke-width="2"/>
<path transform="translate(1140.1,856.5) rotate(90) scale(1,-1)" d="M-18.5 5.9 L-18.5 -5.9 L-9.9 -5.9 L-6.2 -5.0 L-4.4 -2.9 L-6.2 -0.8 L-9.9 0.0 L-18.5 0.0 M-11.1 0.0 L-4.2 5.9 M3.2 -5.9 L18.5 5.9 M18.5 -5.9 L3.2 5.9" fill="none" stroke="#a010b0" stroke-width="1.83" stroke-linecap="round" stroke-linejoin="round"/>
<path transform="translate(1140.1,897.5) rotate(90) scale(1,-1)" d="M-12.5 -5.9 L-1.5 -5.9 M-7.0 -5.9 L-7.0 5.9 M2.5 -5.9 L12.5 5.9 M12.5 -5.9 L2.5 5.9" fill="none" stroke="#a010b0" stroke-width="1.83" stroke-linecap="round" stroke-linejoin="round"/>
<path transform="translate(1140.1,943.5) rotate(90) scale(1,-1)" d="M-18.5 5.9 L-18.5 -5.9 L-14.4 2.4 L-10.2 -5.9 L-10.2 5.9 M-4.6 -1.5 L-4.6 5.9 M-4.6 -5.1 L-4.6 -4.4 M1.4 -5.9 L1.4 5.9 M7.4 -1.5 L1.4 3.3 M3.7 1.8 L7.8 5.9 M12.1 2.4 L18.5 2.4 L18.5 0.9 L17.7 -0.8 L16.1 -1.5 L14.5 -1.5 L12.8 -0.8 L12.1 0.6 L12.1 3.5 L12.8 5.2 L14.5 5.9 L16.4 5.9 L18.1 5.1" fill="none" stroke="#a010b0" stroke-width="1.83" stroke-linecap="round" stroke-linejoin="round"/>
<path transform="translate(1078.0,936.5) rotate(90) scale(1,-1)" d="M-11.5 6.0 L-11.5 -6.0 L-6.2 -6.0 L-4.0 -5.0 L-3.2 -3.0 L-4.0 -1.2 L-6.2 -0.2 L-11.5 -0.2 M-6.2 -0.2 L-4.0 0.6 L-2.8 2.8 L-3.7 5.0 L-5.8 6.0 L-11.5 6.0 M1.3 -6.0 L11.5 -6.0 M6.4 -6.0 L6.4 6.0" fill="none" stroke="#a010b0" stroke-width="1.86" stroke-linecap="round" stroke-linejoin="round"/>
<path transform="translate(1328.5,952.5) rotate(90)" d="M-4.5 -5.5 L4.5 -5.5 M0.0 -5.5 L0.0 5.5 M-4.5 5.5 L4.5 5.5" fill="none" stroke="#a010b0" stroke-width="1.71" stroke-linecap="round" stroke-linejoin="round"/>
<path transform="translate(1051.2,919.6) rotate(90) scale(1,-1)" d="M-53.1 10.0 L-53.1 -10.0 L-48.7 -10.0 L-45.7 -8.4 L-43.8 -5.0 L-42.9 0.0 L-43.8 5.0 L-45.7 8.4 L-48.7 10.0 L-53.1 10.0 M-37.0 10.0 L-37.0 -10.0 L-30.8 -10.0 L-28.2 -8.4 L-26.9 -5.0 L-28.2 -1.4 L-30.8 0.0 L-37.0 0.0 M-31.7 0.0 L-26.8 10.0 M-21.9 10.0 L-15.9 -10.0 L-9.9 10.0 M-19.7 3.2 L-12.0 3.2 M0.1 -0.8 L-2.9 -2.0 L-4.1 -4.0 L-4.1 -7.0 L-2.0 -9.8 L2.0 -9.8 L4.1 -7.0 L4.1 -4.0 L2.9 -2.0 L0.1 -0.8 L-2.9 0.4 L-4.7 3.0 L-4.7 7.2 L-2.4 10.0 L2.4 10.0 L4.8 7.2 L4.8 3.0 L3.1 0.4 L0.1 -0.8 M11.7 -6.0 L16.1 -10.0 L16.1 10.0 M11.7 10.0 L20.5 10.0 M32.0 -0.8 L29.1 -2.0 L27.8 -4.0 L27.8 -7.0 L29.9 -9.8 L34.0 -9.8 L36.1 -7.0 L36.1 -4.0 L34.8 -2.0 L32.0 -0.8 L29.1 0.4 L27.3 3.0 L27.3 7.2 L29.6 10.0 L34.3 10.0 L36.8 7.2 L36.8 3.0 L35.0 0.4 L32.0 -0.8 M43.3 -10.0 L43.3 5.0 L44.5 8.6 L46.8 10.0 L49.6 10.0 L51.9 8.6 L53.1 5.0 L53.1 -10.0" fill="none" stroke="#a8a8a8" stroke-width="3.08" stroke-linecap="round" stroke-linejoin="round"/>
<rect x="1136.3" y="1002.4" width="73.2" height="25.3" fill="none" stroke="#b4b4b4" stroke-width="1.3"/>
<rect x="1137.6" y="1003.6" width="24.4" height="21.7" fill="#8c0000"/>
<rect x="1181.4" y="1003.6" width="27.3" height="21.7" fill="#8c0000"/>
<rect x="1154.3" y="1006.3" width="36.4" height="18.2" fill="none" stroke="#c8c800" stroke-width="1.4"/>
<path transform="translate(1172.5,992.9)" d="M-13.7 -3.2 L-10.7 -5.4 L-10.7 5.4 M-13.7 5.4 L-7.7 5.4 M-3.0 -2.1 L-3.0 2.1 L-1.8 4.3 L-0.6 5.4 L1.2 5.4 L2.4 4.3 L3.6 2.1 L3.6 -2.1 L2.4 -4.3 L1.2 -5.4 L-0.6 -5.4 L-1.8 -4.3 L-3.0 -2.1 M7.9 -5.4 L7.9 5.4 M13.3 -1.4 L7.9 3.0 M10.0 1.6 L13.7 5.4" fill="none" stroke="#c8c800" stroke-width="1.66" stroke-linecap="round" stroke-linejoin="round"/>
<path transform="translate(1172.6,1035.3)" d="M-9.6 6.1 L-9.6 -6.1 L-5.0 -6.1 L-3.0 -5.1 L-2.1 -3.0 L-3.0 -0.8 L-5.0 0.0 L-9.6 0.0 M-5.7 0.0 L-2.0 6.1 M6.1 -0.5 L3.8 -1.2 L2.9 -2.4 L2.9 -4.2 L4.5 -5.9 L7.5 -5.9 L9.1 -4.2 L9.1 -2.4 L8.2 -1.2 L6.1 -0.5 L3.8 0.2 L2.5 1.8 L2.5 4.4 L4.2 6.1 L7.8 6.1 L9.6 4.4 L9.6 1.8 L8.3 0.2 L6.1 -0.5" fill="none" stroke="#0fa0a4" stroke-width="1.88" stroke-linecap="round" stroke-linejoin="round"/>
<path transform="translate(1171.5,1015.5)" d="M-10.5 5.5 L-10.5 -5.5 L-5.5 -5.5 L-3.3 -4.6 L-2.3 -2.8 L-3.3 -0.8 L-5.5 0.0 L-10.5 0.0 M-6.2 0.0 L-2.2 5.5 M6.6 -0.4 L4.2 -1.1 L3.2 -2.2 L3.2 -3.8 L4.9 -5.4 L8.2 -5.4 L9.9 -3.8 L9.9 -2.2 L8.9 -1.1 L6.6 -0.4 L4.2 0.2 L2.7 1.7 L2.7 4.0 L4.6 5.5 L8.5 5.5 L10.5 4.0 L10.5 1.7 L9.1 0.2 L6.6 -0.4" fill="none" stroke="#c8c800" stroke-width="1.71" stroke-linecap="round" stroke-linejoin="round"/>
<rect x="1117.8" y="1012.0" width="169.8" height="124.3" fill="none" stroke="#a010b0" stroke-width="2"/>
<rect x="1089.3" y="1029.3" width="25.3" height="73.2" fill="none" stroke="#b4b4b4" stroke-width="1.3"/>
<rect x="1091.4" y="1031.7" width="20.6" height="22.3" fill="#8c0000"/>
<rect x="1091.4" y="1080.0" width="20.6" height="20.5" fill="#8c0000"/>
<rect x="1092.2" y="1047.4" width="18.8" height="36.1" fill="none" stroke="#c8c800" stroke-width="1.4"/>
<path transform="translate(1080.4,1066.2) rotate(-90)" d="M-13.6 -3.5 L-10.7 -5.9 L-10.7 5.9 M-13.6 5.9 L-7.7 5.9 M-3.0 -2.4 L-3.0 2.4 L-1.8 4.7 L-0.6 5.9 L1.2 5.9 L2.4 4.7 L3.6 2.4 L3.6 -2.4 L2.4 -4.7 L1.2 -5.9 L-0.6 -5.9 L-1.8 -4.7 L-3.0 -2.4 M7.9 -5.9 L7.9 5.9 M13.3 -1.5 L7.9 3.3 M9.9 1.8 L13.6 5.9" fill="none" stroke="#c8c800" stroke-width="1.83" stroke-linecap="round" stroke-linejoin="round"/>
<path transform="translate(1121.3,1065.3) rotate(-90)" d="M-9.4 7.0 L-9.4 -7.0 L-5.0 -7.0 L-3.1 -5.9 L-2.2 -3.5 L-3.1 -1.0 L-5.0 0.0 L-9.4 0.0 M-5.6 0.0 L-2.1 7.0 M2.1 -4.2 L3.4 -6.3 L4.6 -7.0 L7.1 -7.0 L8.4 -5.9 L9.0 -3.5 L8.4 -1.4 L2.1 7.0 L9.4 7.0" fill="none" stroke="#0fa0a4" stroke-width="2.17" stroke-linecap="round" stroke-linejoin="round"/>
<path transform="translate(1101.5,1065.0) rotate(-90)" d="M-9.0 5.5 L-9.0 -5.5 L-4.8 -5.5 L-3.0 -4.6 L-2.2 -2.8 L-3.0 -0.8 L-4.8 0.0 L-9.0 0.0 M-5.4 0.0 L-2.0 5.5 M2.0 -3.3 L3.2 -5.0 L4.4 -5.5 L6.8 -5.5 L8.0 -4.6 L8.6 -2.8 L8.0 -1.1 L2.0 5.5 L9.0 5.5" fill="none" stroke="#c8c800" stroke-width="1.71" stroke-linecap="round" stroke-linejoin="round"/>
<rect x="1234.1" y="1017.2" width="41.9" height="35.4" fill="none" stroke="#b4b4b4" stroke-width="2"/>
<rect x="1239.6" y="1023.7" width="11.3" height="23.8" fill="#8c0000"/>
<rect x="1260.2" y="1023.7" width="11.3" height="23.8" fill="#8c0000"/>
<rect x="1237.4" y="1020.5" width="35.4" height="29.4" fill="none" stroke="#c8c800" stroke-width="2"/>
<polyline points="1254.6,1022.0 1254.6,1048.0" fill="none" stroke="#0fa0a4" stroke-width="3"/>
<path transform="translate(1255.4,1006.4)" d="M-20.1 4.4 L-20.1 -4.4 L-17.7 -4.4 L-16.1 -3.7 L-15.0 -2.2 L-14.5 0.0 L-15.0 2.2 L-16.1 3.7 L-17.7 4.4 L-20.1 4.4 M-11.3 4.4 L-11.3 -4.4 L-7.9 -4.4 L-6.5 -3.7 L-5.8 -2.2 L-6.5 -0.4 L-7.9 0.3 L-11.3 0.3 M-0.5 -4.4 L-2.0 -3.5 L-2.6 -1.8 L-2.6 1.8 L-2.0 3.5 L-0.5 4.4 L0.9 4.4 L2.4 3.5 L3.0 1.8 L3.0 -1.8 L2.4 -3.5 L0.9 -4.4 L-0.5 -4.4 M6.6 -2.6 L9.0 -4.4 L9.0 4.4 M6.6 4.4 L11.4 4.4 M15.3 -2.6 L17.7 -4.4 L17.7 4.4 M15.3 4.4 L20.1 4.4" fill="none" stroke="#0fa0a4" stroke-width="1.36" stroke-linecap="round" stroke-linejoin="round"/>
<path transform="translate(1255.2,1063.1)" d="M-37.2 5.6 L-37.2 -5.6 L-33.4 2.2 L-29.6 -5.6 L-29.6 5.6 M-18.4 -3.4 L-19.6 -5.0 L-21.3 -5.6 L-22.8 -5.6 L-24.6 -4.5 L-25.5 -2.2 L-25.5 2.2 L-24.6 4.5 L-22.8 5.6 L-21.3 5.6 L-19.6 5.0 L-18.4 3.4 M-14.0 5.6 L-14.0 -5.6 L-9.7 -5.6 L-7.9 -4.7 L-7.0 -2.8 L-7.9 -0.6 L-9.7 0.3 L-14.0 0.3 M2.1 5.6 L2.1 -5.6 L-3.2 2.2 L4.6 2.2 M8.4 -2.2 L8.4 2.2 L9.6 4.5 L10.8 5.6 L12.6 5.6 L13.9 4.5 L15.1 2.2 L15.1 -2.2 L13.9 -4.5 L12.6 -5.6 L10.8 -5.6 L9.6 -4.5 L8.4 -2.2 M19.7 -3.4 L22.8 -5.6 L22.8 5.6 M19.7 5.6 L25.8 5.6 M33.9 -0.4 L31.8 -1.1 L31.0 -2.2 L31.0 -3.9 L32.4 -5.5 L35.2 -5.5 L36.7 -3.9 L36.7 -2.2 L35.9 -1.1 L33.9 -0.4 L31.8 0.2 L30.6 1.7 L30.6 4.0 L32.2 5.6 L35.5 5.6 L37.2 4.0 L37.2 1.7 L36.0 0.2 L33.9 -0.4" fill="none" stroke="#0fa0a4" stroke-width="1.74" stroke-linecap="round" stroke-linejoin="round"/>
<path transform="translate(1256.0,1063.0)" d="M-34.0 5.0 L-34.0 -5.0 L-30.5 2.0 L-27.1 -5.0 L-27.1 5.0 M-16.8 -3.0 L-17.9 -4.5 L-19.5 -5.0 L-20.8 -5.0 L-22.5 -4.0 L-23.3 -2.0 L-23.3 2.0 L-22.5 4.0 L-20.8 5.0 L-19.5 5.0 L-17.9 4.5 L-16.8 3.0 M-12.8 5.0 L-12.8 -5.0 L-8.9 -5.0 L-7.2 -4.2 L-6.4 -2.5 L-7.2 -0.5 L-8.9 0.3 L-12.8 0.3 M2.0 5.0 L2.0 -5.0 L-3.0 2.0 L4.2 2.0 M7.6 -2.0 L7.6 2.0 L8.8 4.0 L9.9 5.0 L11.6 5.0 L12.7 4.0 L13.8 2.0 L13.8 -2.0 L12.7 -4.0 L11.6 -5.0 L9.9 -5.0 L8.8 -4.0 L7.6 -2.0 M18.0 -3.0 L20.8 -5.0 L20.8 5.0 M18.0 5.0 L23.6 5.0 M31.0 -0.4 L29.1 -1.0 L28.3 -2.0 L28.3 -3.5 L29.6 -4.9 L32.2 -4.9 L33.6 -3.5 L33.6 -2.0 L32.8 -1.0 L31.0 -0.4 L29.1 0.2 L28.0 1.5 L28.0 3.6 L29.4 5.0 L32.4 5.0 L34.0 3.6 L34.0 1.5 L32.9 0.2 L31.0 -0.4" fill="none" stroke="#d8d898" stroke-width="1.55" stroke-linecap="round" stroke-linejoin="round"/>
<circle cx="1298.0" cy="1056.7" r="9.5" fill="#9a9a2a" stroke="#c8c800" stroke-width="1.2"/>
<circle cx="1298.0" cy="1056.7" r="4.0" fill="#000"/>
<circle cx="1298.0" cy="1090.4" r="9.5" fill="#9a9a2a" stroke="#c8c800" stroke-width="1.2"/>
<circle cx="1298.0" cy="1090.4" r="4.0" fill="#000"/>
<path transform="translate(1180.2,1069.5) scale(-1,1)" d="M-25.9 -3.4 L-27.2 -4.5 L-29.0 -4.8 L-30.3 -4.8 L-32.1 -4.3 L-33.0 -3.1 L-33.0 -1.9 L-32.1 -0.8 L-30.3 -0.2 L-28.0 0.4 L-26.3 1.2 L-25.5 2.7 L-26.2 4.1 L-28.0 4.8 L-30.3 4.8 L-32.1 4.3 L-33.4 3.4 M-21.3 -1.2 L-21.3 8.0 M-21.3 0.0 L-20.1 -1.0 L-18.8 -1.2 L-17.6 -1.2 L-16.1 -0.7 L-15.4 0.5 L-15.4 2.9 L-16.1 4.2 L-17.6 4.8 L-18.8 4.8 L-20.1 4.4 L-21.3 3.4 M-11.2 1.9 L-5.2 1.9 L-5.2 0.8 L-6.0 -0.7 L-7.4 -1.2 L-8.9 -1.2 L-10.5 -0.7 L-11.2 0.5 L-11.2 2.9 L-10.5 4.2 L-8.9 4.8 L-7.2 4.8 L-5.6 4.1 M4.7 -1.2 L4.7 4.8 M4.6 0.0 L3.3 -1.0 L2.1 -1.2 L0.9 -1.2 L-0.6 -0.7 L-1.2 0.5 L-1.2 2.9 L-0.6 4.2 L0.9 4.8 L2.1 4.8 L3.3 4.4 L4.6 3.4 M9.2 -4.8 L9.2 4.8 M14.8 -1.2 L9.2 2.7 M11.3 1.4 L15.1 4.8 M19.1 1.9 L25.0 1.9 L25.0 0.8 L24.3 -0.7 L22.8 -1.2 L21.3 -1.2 L19.7 -0.7 L19.1 0.5 L19.1 2.9 L19.7 4.2 L21.3 4.8 L23.1 4.8 L24.7 4.1 M29.3 -1.2 L29.3 4.8 M29.3 0.5 L30.3 -0.7 L31.7 -1.2 L33.4 -1.2" fill="none" stroke="#a010b0" stroke-width="1.49" stroke-linecap="round" stroke-linejoin="round"/>
<path transform="translate(1237.7,1071.0) scale(-1,1)" d="M-16.1 7.0 L-16.1 -7.0 L-11.6 7.0 L-11.6 -7.0 M-5.0 -7.7 L-9.1 8.4 M-2.5 -7.0 L1.8 -7.0 L-0.7 -1.4 L0.3 -1.4 L1.5 -0.3 L2.0 2.8 L1.5 5.6 L0.6 7.0 L-1.5 7.0 L-2.5 5.9 M4.0 8.4 L8.9 8.4 M11.4 -4.2 L12.2 -6.3 L13.0 -7.0 L14.6 -7.0 L15.5 -5.9 L15.9 -3.5 L15.5 -1.4 L11.4 7.0 L16.1 7.0" fill="none" stroke="#a010b0" stroke-width="2.17" stroke-linecap="round" stroke-linejoin="round"/>
<rect x="1147.6" y="1088.4" width="72.7" height="25.4" fill="none" stroke="#b4b4b4" stroke-width="1.3"/>
<rect x="1149.2" y="1090.4" width="20.1" height="21.0" fill="#8c0000"/>
<rect x="1193.4" y="1090.4" width="25.0" height="21.0" fill="#8c0000"/>
<rect x="1166.0" y="1091.2" width="37.0" height="18.6" fill="none" stroke="#c8c800" stroke-width="1.4"/>
<path transform="translate(1184.2,1080.0)" d="M-14.1 -2.9 L-11.0 -4.8 L-11.0 4.8 M-14.1 4.8 L-7.9 4.8 M-3.1 -1.9 L-3.1 1.9 L-1.9 3.8 L-0.6 4.8 L1.2 4.8 L2.5 3.8 L3.7 1.9 L3.7 -1.9 L2.5 -3.8 L1.2 -4.8 L-0.6 -4.8 L-1.9 -3.8 L-3.1 -1.9 M8.2 -4.8 L8.2 4.8 M13.7 -1.2 L8.2 2.7 M10.3 1.4 L14.1 4.8" fill="none" stroke="#c8c800" stroke-width="1.49" stroke-linecap="round" stroke-linejoin="round"/>
<path transform="translate(1183.8,1120.2)" d="M-15.2 5.6 L-15.2 -5.6 L-10.8 -5.6 L-8.8 -4.7 L-7.9 -2.8 L-8.8 -0.8 L-10.8 0.0 L-15.2 0.0 M-11.4 0.0 L-7.8 5.6 M-3.2 -3.4 L0.0 -5.6 L0.0 5.6 M-3.2 5.6 L3.2 5.6 M8.2 -2.2 L8.2 2.2 L9.5 4.5 L10.8 5.6 L12.7 5.6 L14.0 4.5 L15.2 2.2 L15.2 -2.2 L14.0 -4.5 L12.7 -5.6 L10.8 -5.6 L9.5 -4.5 L8.2 -2.2" fill="none" stroke="#9ab0b0" stroke-width="1.74" stroke-linecap="round" stroke-linejoin="round"/>
<path transform="translate(1159.0,1120.0) scale(-1,1)" d="M-12.4 -4.2 L-13.0 -5.6 L-13.9 -6.0 L-14.5 -6.0 L-15.4 -5.4 L-15.8 -3.8 L-15.8 -2.4 L-15.4 -1.0 L-14.5 -0.2 L-13.4 0.5 L-12.6 1.6 L-12.3 3.4 L-12.6 5.2 L-13.4 6.0 L-14.5 6.0 L-15.4 5.4 L-16.0 4.2 M-10.2 -1.6 L-10.2 10.0 M-10.2 0.0 L-9.6 -1.2 L-9.0 -1.6 L-8.4 -1.6 L-7.7 -0.8 L-7.4 0.6 L-7.4 3.6 L-7.7 5.3 L-8.4 6.0 L-9.0 6.0 L-9.6 5.5 L-10.2 4.2 M-5.4 2.4 L-2.5 2.4 L-2.5 1.0 L-2.9 -0.8 L-3.6 -1.6 L-4.3 -1.6 L-5.1 -0.8 L-5.4 0.6 L-5.4 3.6 L-5.1 5.3 L-4.3 6.0 L-3.4 6.0 L-2.7 5.2 M2.3 -1.6 L2.3 6.0 M2.2 0.0 L1.6 -1.2 L1.0 -1.6 L0.4 -1.6 L-0.3 -0.8 L-0.6 0.6 L-0.6 3.6 L-0.3 5.3 L0.4 6.0 L1.0 6.0 L1.6 5.5 L2.2 4.2 M4.4 -6.0 L4.4 6.0 M7.1 -1.6 L4.4 3.4 M5.4 1.8 L7.3 6.0 M9.2 2.4 L12.0 2.4 L12.0 1.0 L11.7 -0.8 L10.9 -1.6 L10.2 -1.6 L9.5 -0.8 L9.2 0.6 L9.2 3.6 L9.5 5.3 L10.2 6.0 L11.1 6.0 L11.8 5.2 M14.0 -1.6 L14.0 6.0 M14.0 0.6 L14.5 -0.8 L15.2 -1.6 L16.0 -1.6" fill="none" stroke="#c00000" stroke-width="1.86" stroke-linecap="round" stroke-linejoin="round"/>
<path transform="translate(1229.0,1121.8) scale(-1,1)" d="M-25.5 5.1 L-25.5 -5.1 L-18.3 5.1 L-18.3 -5.1 M-7.9 -5.7 L-14.3 6.2 M-4.0 -5.1 L2.8 -5.1 L-1.2 -1.0 L0.5 -1.0 L2.4 -0.2 L3.2 2.1 L2.4 4.1 L0.9 5.1 L-2.3 5.1 L-4.0 4.3 M6.4 6.2 L14.1 6.2 M18.0 -3.1 L19.3 -4.6 L20.6 -5.1 L23.1 -5.1 L24.4 -4.3 L25.1 -2.6 L24.4 -1.0 L18.0 5.1 L25.5 5.1" fill="none" stroke="#c00000" stroke-width="1.60" stroke-linecap="round" stroke-linejoin="round"/>
<path transform="translate(1188.0,1129.0) scale(-1,1)" d="M-10.0 -3.0 L-7.8 -5.0 L-7.8 5.0 M-10.0 5.0 L-5.6 5.0 M-2.2 -2.0 L-2.2 2.0 L-1.3 4.0 L-0.4 5.0 L0.9 5.0 L1.8 4.0 L2.6 2.0 L2.6 -2.0 L1.8 -4.0 L0.9 -5.0 L-0.4 -5.0 L-1.3 -4.0 L-2.2 -2.0 M5.8 -5.0 L5.8 5.0 M9.7 -1.3 L5.8 2.8 M7.3 1.5 L10.0 5.0" fill="none" stroke="#c00000" stroke-width="1.55" stroke-linecap="round" stroke-linejoin="round"/>
<rect x="1132.3" y="1140.3" width="73.2" height="25.0" fill="none" stroke="#c8c800" stroke-width="1.4"/>
<rect x="1134.7" y="1142.0" width="24.1" height="21.6" fill="#009000"/>
<rect x="1179.8" y="1142.0" width="24.1" height="21.6" fill="#009000"/>
<path transform="translate(1146.0,1148.5)" d="M-4.0 -2.1 L0.0 -3.5 L0.0 3.5 M-4.0 3.5 L4.0 3.5" fill="none" stroke="#f0f0f0" stroke-width="1.08" stroke-linecap="round" stroke-linejoin="round"/>
<path transform="translate(1146.5,1158.5)" d="M-5.1 -2.5 L-5.8 -3.3 L-7.0 -3.5 L-7.8 -3.5 L-9.0 -2.8 L-9.5 -1.4 L-9.5 1.4 L-9.0 2.8 L-7.8 3.5 L-6.6 3.5 L-5.5 3.0 L-4.8 2.1 L-4.8 0.3 L-7.0 0.3 M-2.2 3.5 L-2.2 -3.5 L2.2 3.5 L2.2 -3.5 M5.0 3.5 L5.0 -3.5 L6.9 -3.5 L8.3 -2.9 L9.1 -1.8 L9.5 0.0 L9.1 1.8 L8.3 2.9 L6.9 3.5 L5.0 3.5" fill="none" stroke="#f0f0f0" stroke-width="1.08" stroke-linecap="round" stroke-linejoin="round"/>
<path transform="translate(1192.5,1148.5)" d="M-3.5 -2.1 L-2.3 -3.1 L-1.1 -3.5 L1.3 -3.5 L2.5 -2.9 L3.1 -1.8 L2.5 -0.7 L-3.5 3.5 L3.5 3.5" fill="none" stroke="#f0f0f0" stroke-width="1.08" stroke-linecap="round" stroke-linejoin="round"/>
<path transform="translate(1192.0,1158.5)" d="M-9.0 3.5 L-9.0 -3.5 L-7.1 -3.5 L-6.2 -2.9 L-6.0 -1.8 L-6.2 -0.7 L-7.1 -0.1 L-9.0 -0.1 M-7.1 -0.1 L-6.2 0.3 L-5.8 1.6 L-6.1 2.9 L-6.9 3.5 L-9.0 3.5 M-4.3 3.5 L-2.4 -3.5 L-0.5 3.5 M-3.6 1.1 L-1.2 1.1 M0.8 -3.5 L4.5 -3.5 M2.7 -3.5 L2.7 3.5 M6.0 0.1 L9.0 0.1 M7.5 -1.8 L7.5 2.0" fill="none" stroke="#f0f0f0" stroke-width="1.08" stroke-linecap="round" stroke-linejoin="round"/>
<polyline points="1101.0,1460.0 1101.0,1141.8 1128.3,1141.8 1128.3,1167.7 1272.8,1167.7 1272.8,1141.8 1301.2,1141.8 1301.2,1462.4 1101.0,1462.4" fill="none" stroke="#a010b0" stroke-width="2"/>
<rect x="1101.8" y="1167.6" width="35.4" height="35.4" fill="#9a9a2a" stroke="#c8c860" stroke-width="1.2"/>
<polyline points="1102.8,1168.6 1136.2,1202.0" fill="none" stroke="#b0b070" stroke-width="1"/>
<polyline points="1136.2,1168.6 1102.8,1202.0" fill="none" stroke="#b0b070" stroke-width="1"/>
<circle cx="1118.0" cy="1185.3" r="8.8" fill="#000"/>
<rect x="1139.4" y="1167.6" width="36.1" height="35.4" fill="#9a9a2a" stroke="#c8c860" stroke-width="1.2"/>
<polyline points="1140.4,1168.6 1174.5,1202.0" fill="none" stroke="#b0b070" stroke-width="1"/>
<polyline points="1174.5,1168.6 1140.4,1202.0" fill="none" stroke="#b0b070" stroke-width="1"/>
<circle cx="1157.0" cy="1185.3" r="8.8" fill="#000"/>
<rect x="1225.7" y="1167.6" width="35.7" height="35.4" fill="#9a9a2a" stroke="#c8c860" stroke-width="1.2"/>
<polyline points="1226.7,1168.6 1260.4,1202.0" fill="none" stroke="#b0b070" stroke-width="1"/>
<polyline points="1260.4,1168.6 1226.7,1202.0" fill="none" stroke="#b0b070" stroke-width="1"/>
<circle cx="1242.7" cy="1185.3" r="8.8" fill="#000"/>
<rect x="1264.4" y="1167.6" width="35.8" height="35.4" fill="#9a9a2a" stroke="#c8c860" stroke-width="1.2"/>
<polyline points="1265.4,1168.6 1299.2,1202.0" fill="none" stroke="#b0b070" stroke-width="1"/>
<polyline points="1299.2,1168.6 1265.4,1202.0" fill="none" stroke="#b0b070" stroke-width="1"/>
<circle cx="1281.8" cy="1185.3" r="8.8" fill="#000"/>
<path transform="translate(1129.0,1185.0) rotate(-90)" d="M-6.9 -3.5 L-8.0 -4.7 L-9.6 -5.0 L-10.7 -5.0 L-12.3 -4.0 L-13.0 -2.0 L-13.0 2.0 L-12.3 4.0 L-10.7 5.0 L-9.1 5.0 L-7.5 4.3 L-6.6 3.0 L-6.6 0.5 L-9.6 0.5 M-3.0 5.0 L-3.0 -5.0 L3.0 5.0 L3.0 -5.0 M6.8 5.0 L6.8 -5.0 L9.5 -5.0 L11.3 -4.2 L12.5 -2.5 L13.0 0.0 L12.5 2.5 L11.3 4.2 L9.5 5.0 L6.8 5.0" fill="none" stroke="#f0f0f0" stroke-width="1.55" stroke-linecap="round" stroke-linejoin="round"/>
<path transform="translate(1119.1,1226.2) rotate(90) scale(1,-1)" d="M-16.5 -6.3 L-18.5 -5.0 L-19.5 -2.5 L-19.5 2.5 L-18.5 5.0 L-16.5 6.3 L-14.5 6.3 L-12.4 5.0 L-11.5 2.5 L-11.5 -2.5 L-12.4 -5.0 L-14.5 -6.3 L-16.5 -6.3 M-6.7 -1.6 L-6.7 4.4 L-6.0 5.8 L-4.7 6.3 L-3.1 6.3 L-1.6 5.7 L-0.3 4.2 M-0.3 -1.6 L-0.3 6.3 M6.2 -5.3 L6.2 4.8 L7.1 6.0 L9.2 6.3 M4.1 -1.6 L9.2 -1.6 M13.4 0.0 L19.5 0.0" fill="none" stroke="#a010b0" stroke-width="1.95" stroke-linecap="round" stroke-linejoin="round"/>
<path transform="translate(1157.5,1218.1) rotate(90) scale(1,-1)" d="M-10.7 6.2 L-10.7 -6.2 L-5.2 -6.2 L-2.9 -5.2 L-2.1 -3.1 L-2.9 -1.2 L-5.2 -0.2 L-10.7 -0.2 M-5.2 -0.2 L-2.9 0.6 L-1.6 2.9 L-2.6 5.2 L-4.8 6.2 L-10.7 6.2 M3.7 0.0 L10.7 0.0" fill="none" stroke="#a010b0" stroke-width="1.94" stroke-linecap="round" stroke-linejoin="round"/>
<path transform="translate(1243.8,1218.1) rotate(90) scale(1,-1)" d="M-10.7 6.2 L-10.7 -6.2 L-5.5 -6.2 L-3.3 -5.2 L-2.5 -3.1 L-3.3 -1.2 L-5.5 -0.2 L-10.7 -0.2 M-5.5 -0.2 L-3.3 0.6 L-2.1 2.9 L-3.0 5.2 L-5.1 6.2 L-10.7 6.2 M2.7 0.2 L10.7 0.2 M6.7 -3.1 L6.7 3.6" fill="none" stroke="#a010b0" stroke-width="1.94" stroke-linecap="round" stroke-linejoin="round"/>
<path transform="translate(1282.8,1226.6) rotate(90) scale(1,-1)" d="M-16.3 -6.2 L-18.2 -5.0 L-19.1 -2.5 L-19.1 2.5 L-18.2 5.0 L-16.3 6.2 L-14.3 6.2 L-12.4 5.0 L-11.5 2.5 L-11.5 -2.5 L-12.4 -5.0 L-14.3 -6.2 L-16.3 -6.2 M-6.9 -1.6 L-6.9 4.3 L-6.3 5.7 L-5.0 6.2 L-3.4 6.2 L-2.0 5.6 L-0.8 4.1 M-0.8 -1.6 L-0.8 6.2 M5.5 -5.2 L5.5 4.7 L6.4 6.0 L8.3 6.2 M3.5 -1.6 L8.3 -1.6 M12.1 0.2 L19.1 0.2 M15.6 -3.1 L15.6 3.6" fill="none" stroke="#a010b0" stroke-width="1.92" stroke-linecap="round" stroke-linejoin="round"/>
<path transform="translate(1204.8,1320.3) rotate(90) scale(1,-1)" d="M-69.5 -4.1 L-71.2 -5.5 L-73.7 -5.9 L-75.4 -5.9 L-78.0 -5.3 L-79.2 -3.7 L-79.2 -2.3 L-78.0 -0.9 L-75.4 -0.2 L-72.4 0.5 L-70.0 1.5 L-69.0 3.3 L-69.8 5.0 L-72.4 5.9 L-75.4 5.9 L-78.0 5.3 L-79.7 4.1 M-63.2 -1.5 L-63.2 9.7 M-63.2 0.0 L-61.5 -1.2 L-59.8 -1.5 L-58.0 -1.5 L-56.0 -0.8 L-55.0 0.6 L-55.0 3.5 L-56.0 5.1 L-58.0 5.9 L-59.8 5.9 L-61.5 5.4 L-63.2 4.1 M-49.2 2.3 L-41.0 2.3 L-41.0 0.9 L-42.0 -0.8 L-44.1 -1.5 L-46.1 -1.5 L-48.3 -0.8 L-49.2 0.6 L-49.2 3.5 L-48.3 5.1 L-46.1 5.9 L-43.7 5.9 L-41.5 5.0 M-27.4 -1.5 L-27.4 5.9 M-27.5 0.0 L-29.2 -1.2 L-30.9 -1.5 L-32.6 -1.5 L-34.7 -0.8 L-35.5 0.6 L-35.5 3.5 L-34.7 5.1 L-32.6 5.9 L-30.9 5.9 L-29.2 5.4 L-27.5 4.1 M-21.2 -5.9 L-21.2 5.9 M-13.6 -1.5 L-21.2 3.3 M-18.3 1.8 L-13.0 5.9 M-7.6 2.3 L0.6 2.3 L0.6 0.9 L-0.4 -0.8 L-2.5 -1.5 L-4.5 -1.5 L-6.7 -0.8 L-7.6 0.6 L-7.6 3.5 L-6.7 5.1 L-4.5 5.9 L-2.1 5.9 L0.1 5.0 M6.4 -1.5 L6.4 5.9 M6.4 0.6 L7.8 -0.8 L9.8 -1.5 L12.0 -1.5 M37.6 -3.5 L35.9 -5.3 L33.5 -5.9 L31.5 -5.9 L28.9 -4.7 L27.7 -2.3 L27.7 2.3 L28.9 4.7 L31.5 5.9 L33.5 5.9 L35.9 5.3 L37.6 3.5 M47.1 -1.5 L44.8 -0.8 L43.7 0.6 L43.7 3.5 L44.8 5.1 L47.1 5.9 L48.8 5.9 L50.9 5.1 L51.9 3.5 L51.9 0.6 L50.9 -0.8 L48.8 -1.5 L47.1 -1.5 M57.7 -1.5 L57.7 5.9 M57.7 0.0 L59.8 -1.2 L61.6 -1.5 L63.3 -1.5 L65.0 -0.8 L65.7 0.6 L65.7 5.9 M71.7 -1.5 L71.7 5.9 M71.7 0.0 L73.7 -1.2 L75.6 -1.5 L77.3 -1.5 L79.0 -0.8 L79.7 0.6 L79.7 5.9" fill="none" stroke="#a010b0" stroke-width="1.81" stroke-linecap="round" stroke-linejoin="round"/>
<path transform="translate(1205.4,1246.5)" d="M-38.9 -5.9 L-45.4 -5.9 L-45.4 5.9 L-38.9 5.9 M-45.4 -0.2 L-40.6 -0.2 M-28.2 -4.1 L-29.4 -5.5 L-31.2 -5.9 L-32.4 -5.9 L-34.2 -5.3 L-35.1 -3.8 L-35.1 -2.4 L-34.2 -0.9 L-32.4 -0.2 L-30.3 0.5 L-28.6 1.5 L-27.9 3.3 L-28.5 5.1 L-30.3 5.9 L-32.4 5.9 L-34.2 5.3 L-35.4 4.1 M-23.8 5.9 L-23.8 -5.9 L-19.6 -5.9 L-17.8 -5.0 L-16.9 -3.0 L-17.8 -0.6 L-19.6 0.4 L-23.8 0.4 M-12.7 -5.9 L-6.4 -5.9 L-10.1 -1.2 L-8.5 -1.2 L-6.7 -0.2 L-6.0 2.4 L-6.7 4.7 L-8.2 5.9 L-11.2 5.9 L-12.7 5.0 M-1.8 -3.5 L-0.6 -5.3 L0.6 -5.9 L3.0 -5.9 L4.2 -5.0 L4.8 -3.0 L4.2 -1.2 L-1.8 5.9 L5.2 5.9 M16.5 5.9 L16.5 -5.9 L19.5 -5.9 L21.5 -5.0 L22.8 -3.0 L23.4 0.0 L22.8 3.0 L21.5 5.0 L19.5 5.9 L16.5 5.9 M34.0 -5.9 L27.5 -5.9 L27.5 5.9 L34.0 5.9 M27.5 -0.2 L32.3 -0.2 M37.2 -5.9 L41.3 5.9 L45.4 -5.9" fill="none" stroke="#0fa0a4" stroke-width="1.83" stroke-linecap="round" stroke-linejoin="round"/>
<path transform="translate(1205.3,1268.4)" d="M-35.2 -5.9 L-41.6 -5.9 L-41.6 5.9 L-35.2 5.9 M-41.6 -0.2 L-36.9 -0.2 M-24.5 -4.1 L-25.7 -5.5 L-27.5 -5.9 L-28.7 -5.9 L-30.5 -5.3 L-31.3 -3.8 L-31.3 -2.4 L-30.5 -0.9 L-28.7 -0.2 L-26.5 0.5 L-24.9 1.5 L-24.2 3.3 L-24.8 5.1 L-26.5 5.9 L-28.7 5.9 L-30.5 5.3 L-31.7 4.1 M-20.1 5.9 L-20.1 -5.9 L-15.9 -5.9 L-14.1 -5.0 L-13.2 -2.9 L-14.1 -0.6 L-15.9 0.4 L-20.1 0.4 M-9.0 -5.9 L-2.7 -5.9 L-6.4 -1.2 L-4.9 -1.2 L-3.1 -0.2 L-2.3 2.4 L-3.1 4.7 L-4.5 5.9 L-7.5 5.9 L-9.0 5.0 M1.9 -3.5 L3.1 -5.3 L4.3 -5.9 L6.7 -5.9 L7.9 -5.0 L8.4 -2.9 L7.9 -1.2 L1.9 5.9 L8.8 5.9 M12.8 5.9 L12.8 -5.9 L15.8 -5.9 L17.8 -5.0 L19.1 -2.9 L19.7 0.0 L19.1 2.9 L17.8 5.0 L15.8 5.9 L12.8 5.9 M30.3 -5.9 L23.8 -5.9 L23.8 5.9 L30.3 5.9 M23.8 -0.2 L28.6 -0.2 M33.5 -5.9 L37.6 5.9 L41.6 -5.9" fill="none" stroke="#c8c800" stroke-width="1.83" stroke-linecap="round" stroke-linejoin="round"/>
<rect x="1045.7" y="1290.6" width="22.9" height="73.7" fill="none" stroke="#c8c800" stroke-width="1.4"/>
<rect x="1070.5" y="1290.6" width="23.9" height="73.7" fill="none" stroke="#c8c800" stroke-width="1.4"/>
<rect x="1047.5" y="1292.0" width="19.3" height="25.8" fill="#009000"/>
<rect x="1047.5" y="1337.8" width="19.3" height="25.0" fill="#009000"/>
<rect x="1072.3" y="1292.0" width="20.3" height="25.8" fill="#009000"/>
<rect x="1072.3" y="1337.8" width="20.3" height="25.0" fill="#009000"/>
<path transform="translate(1033.5,1327.4) rotate(90) scale(-1,1)" d="M-24.4 -3.8 L-21.4 -6.2 L-21.4 6.2 M-24.4 6.2 L-18.4 6.2 M-13.7 -2.5 L-13.7 2.5 L-12.5 5.0 L-11.3 6.2 L-9.5 6.2 L-8.3 5.0 L-7.1 2.5 L-7.1 -2.5 L-8.3 -5.0 L-9.5 -6.2 L-11.3 -6.2 L-12.5 -5.0 L-13.7 -2.5 M-2.8 -2.5 L-2.8 2.5 L-1.6 5.0 L-0.4 6.2 L1.4 6.2 L2.6 5.0 L3.8 2.5 L3.8 -2.5 L2.6 -5.0 L1.4 -6.2 L-0.4 -6.2 L-1.6 -5.0 L-2.8 -2.5 M8.1 -1.6 L8.1 4.4 L8.7 5.8 L9.9 6.2 L11.3 6.2 L12.6 5.6 L13.7 4.1 M13.7 -1.6 L13.7 6.2 M24.4 -6.2 L17.9 -6.2 L17.9 6.2 M17.9 -0.2 L22.7 -0.2" fill="none" stroke="#c00000" stroke-width="1.94" stroke-linecap="round" stroke-linejoin="round"/>
<rect x="1029.5" y="1381.3" width="60.8" height="84.0" fill="none" stroke="#b4b4b4" stroke-width="1.5"/>
<rect x="1031.7" y="1383.5" width="11.1" height="14.0" fill="#8c0000"/>
<rect x="1031.7" y="1442.5" width="11.1" height="20.5" fill="#8c0000"/>
<rect x="1049.4" y="1383.5" width="11.1" height="14.0" fill="#8c0000"/>
<rect x="1049.4" y="1442.5" width="11.1" height="20.5" fill="#8c0000"/>
<rect x="1076.0" y="1383.5" width="10.3" height="14.0" fill="#8c0000"/>
<rect x="1076.0" y="1442.5" width="10.3" height="20.5" fill="#8c0000"/>
<polyline points="1031.7,1401.0 1088.5,1401.0 1088.5,1444.7 1040.0,1444.7 1031.7,1436.0 1031.7,1401.0" fill="none" stroke="#c8c800" stroke-width="1.4"/>
<path transform="translate(1058.7,1423.3) rotate(-90)" d="M-37.6 6.3 L-33.5 -6.3 L-29.3 6.3 M-36.2 2.0 L-30.8 2.0 M-25.7 6.3 L-25.7 -6.3 L-21.9 2.5 L-18.1 -6.3 L-18.1 6.3 M-13.7 6.3 L-13.7 -6.3 L-9.4 -6.3 L-7.6 -5.3 L-6.7 -3.1 L-7.6 -0.6 L-9.4 0.4 L-13.7 0.4 M-3.2 6.3 L1.0 -6.3 L5.1 6.3 M-1.7 2.0 L3.7 2.0 M8.8 -6.3 L8.8 3.1 L9.7 5.4 L11.2 6.3 L13.2 6.3 L14.8 5.4 L15.6 3.1 L15.6 -6.3 M20.0 6.3 L20.0 -6.3 L23.1 -6.3 L25.2 -5.3 L26.5 -3.1 L27.1 0.0 L26.5 3.1 L25.2 5.3 L23.1 6.3 L20.0 6.3 M31.5 -3.8 L34.6 -6.3 L34.6 6.3 M31.5 6.3 L37.6 6.3" fill="none" stroke="#c8c800" stroke-width="1.95" stroke-linecap="round" stroke-linejoin="round"/>
<path transform="translate(1020.2,1422.9) rotate(-90)" d="M-36.5 5.5 L-32.5 -5.5 L-28.4 5.5 M-35.1 1.8 L-29.9 1.8 M-24.9 5.5 L-24.9 -5.5 L-21.2 2.2 L-17.5 -5.5 L-17.5 5.5 M-13.3 5.5 L-13.3 -5.5 L-9.1 -5.5 L-7.3 -4.7 L-6.5 -2.8 L-7.3 -0.6 L-9.1 0.3 L-13.3 0.3 M-3.1 5.5 L0.9 -5.5 L5.0 5.5 M-1.7 1.8 L3.6 1.8 M8.5 -5.5 L8.5 2.8 L9.4 4.8 L10.9 5.5 L12.8 5.5 L14.3 4.8 L15.2 2.8 L15.2 -5.5 M19.4 5.5 L19.4 -5.5 L22.4 -5.5 L24.4 -4.7 L25.7 -2.8 L26.3 0.0 L25.7 2.8 L24.4 4.7 L22.4 5.5 L19.4 5.5 M30.6 -3.3 L33.5 -5.5 L33.5 5.5 M30.6 5.5 L36.5 5.5" fill="none" stroke="#0fa0a4" stroke-width="1.72" stroke-linecap="round" stroke-linejoin="round"/>
<path transform="translate(1098.5,1422.9) rotate(-90)" d="M-30.6 -6.2 L-30.6 6.2 L-24.2 6.2 M-20.3 6.2 L-20.3 -6.2 L-16.5 2.5 L-12.8 -6.2 L-12.8 6.2 M-3.7 6.2 L-3.7 -6.2 L-9.0 2.5 L-1.3 2.5 M5.7 -0.5 L3.7 -1.2 L2.8 -2.5 L2.8 -4.4 L4.3 -6.1 L7.0 -6.1 L8.5 -4.4 L8.5 -2.5 L7.6 -1.2 L5.7 -0.5 L3.7 0.2 L2.5 1.9 L2.5 4.5 L4.0 6.2 L7.3 6.2 L9.0 4.5 L9.0 1.9 L7.8 0.2 L5.7 -0.5 M12.9 -6.2 L20.4 -6.2 L15.3 6.2 M24.6 -3.8 L27.6 -6.2 L27.6 6.2 M24.6 6.2 L30.6 6.2" fill="none" stroke="#c8c800" stroke-width="1.94" stroke-linecap="round" stroke-linejoin="round"/>
<polyline points="1040.6,1300.0 1040.6,1396.8 1369.5,1396.8 1369.5,1000.0" fill="none" stroke="#0fa0a4" stroke-width="2"/>
<rect x="1107.7" y="1319.3" width="73.0" height="25.1" fill="none" stroke="#b4b4b4" stroke-width="1.3"/>
<rect x="1109.0" y="1320.8" width="26.0" height="22.1" fill="#8c0000"/>
<rect x="1152.7" y="1320.8" width="25.8" height="22.1" fill="#8c0000"/>
<rect x="1126.0" y="1322.3" width="37.0" height="19.1" fill="none" stroke="#c8c800" stroke-width="1.4"/>
<rect x="1107.7" y="1355.5" width="73.0" height="22.8" fill="none" stroke="#b4b4b4" stroke-width="1.3"/>
<rect x="1109.0" y="1357.0" width="26.0" height="19.8" fill="#8c0000"/>
<rect x="1152.7" y="1357.0" width="25.8" height="19.8" fill="#8c0000"/>
<rect x="1126.0" y="1358.5" width="37.0" height="16.8" fill="none" stroke="#c8c800" stroke-width="1.4"/>
<rect x="1107.7" y="1400.4" width="73.0" height="22.9" fill="none" stroke="#b4b4b4" stroke-width="1.3"/>
<rect x="1109.0" y="1401.9" width="26.0" height="19.9" fill="#8c0000"/>
<rect x="1152.7" y="1401.9" width="25.8" height="19.9" fill="#8c0000"/>
<rect x="1126.0" y="1403.4" width="37.0" height="16.9" fill="none" stroke="#c8c800" stroke-width="1.4"/>
<path transform="translate(1144.2,1309.7)" d="M-14.4 -3.5 L-13.1 -5.3 L-11.9 -5.9 L-9.4 -5.9 L-8.1 -5.0 L-7.5 -2.9 L-8.1 -1.2 L-14.4 5.9 L-7.1 5.9 M-3.0 -3.5 L-1.8 -5.3 L-0.5 -5.9 L2.0 -5.9 L3.3 -5.0 L3.9 -2.9 L3.3 -1.2 L-3.0 5.9 L4.3 5.9 M8.4 -5.9 L8.4 5.9 M14.0 -1.5 L8.4 3.3 M10.5 1.8 L14.4 5.9" fill="none" stroke="#c8c800" stroke-width="1.83" stroke-linecap="round" stroke-linejoin="round"/>
<path transform="translate(1143.5,1346.2)" d="M-2.0 -3.8 L-3.3 -5.6 L-5.0 -6.2 L-6.5 -6.2 L-8.4 -5.0 L-9.2 -2.5 L-9.2 2.5 L-8.4 5.0 L-6.5 6.2 L-5.0 6.2 L-3.3 5.6 L-2.0 3.8 M8.6 -6.2 L3.0 -6.2 L2.4 -0.5 L3.9 -1.2 L6.1 -1.2 L8.1 -0.2 L9.2 1.9 L9.2 3.8 L8.1 5.6 L6.1 6.2 L4.3 6.2 L2.4 5.0" fill="none" stroke="#d8d898" stroke-width="1.94" stroke-linecap="round" stroke-linejoin="round"/>
<path transform="translate(1143.8,1388.6)" d="M-24.2 -3.5 L-21.3 -5.9 L-21.3 5.9 M-24.2 5.9 L-18.3 5.9 M-13.6 -2.4 L-13.6 2.4 L-12.5 4.7 L-11.3 5.9 L-9.5 5.9 L-8.3 4.7 L-7.1 2.4 L-7.1 -2.4 L-8.3 -4.7 L-9.5 -5.9 L-11.3 -5.9 L-12.5 -4.7 L-13.6 -2.4 M-2.8 -2.4 L-2.8 2.4 L-1.6 4.7 L-0.4 5.9 L1.4 5.9 L2.6 4.7 L3.8 2.4 L3.8 -2.4 L2.6 -4.7 L1.4 -5.9 L-0.4 -5.9 L-1.6 -4.7 L-2.8 -2.4 M8.0 -1.5 L8.0 5.9 M8.0 0.0 L9.5 -1.2 L10.8 -1.5 L12.0 -1.5 L13.2 -0.8 L13.6 0.6 L13.6 5.9 M24.2 -5.9 L17.8 -5.9 L17.8 5.9 M17.8 -0.2 L22.6 -0.2" fill="none" stroke="#c8c800" stroke-width="1.83" stroke-linecap="round" stroke-linejoin="round"/>
<path transform="translate(1143.5,1331.0)" d="M-6.5 5.0 L-6.5 -5.0 L-3.5 -5.0 L-2.2 -4.2 L-1.6 -2.5 L-2.2 -0.7 L-3.5 0.0 L-6.5 0.0 M-3.9 0.0 L-1.5 5.0 M4.8 5.0 L4.8 -5.0 L1.0 2.0 L6.5 2.0" fill="none" stroke="#c8c800" stroke-width="1.55" stroke-linecap="round" stroke-linejoin="round"/>
<path transform="translate(1122.0,1407.5)" d="M-4.3 -2.5 L-4.9 -3.3 L-5.9 -3.5 L-6.6 -3.5 L-7.5 -2.8 L-8.0 -1.4 L-8.0 1.4 L-7.5 2.8 L-6.6 3.5 L-5.6 3.5 L-4.6 3.0 L-4.1 2.1 L-4.1 0.3 L-5.9 0.3 M-1.8 3.5 L-1.8 -3.5 L1.8 3.5 L1.8 -3.5 M4.2 3.5 L4.2 -3.5 L5.8 -3.5 L7.0 -2.9 L7.7 -1.8 L8.0 0.0 L7.7 1.8 L7.0 2.9 L5.8 3.5 L4.2 3.5" fill="none" stroke="#f0f0f0" stroke-width="1.08" stroke-linecap="round" stroke-linejoin="round"/>
<path transform="translate(1121.5,1416.5)" d="M-4.5 -2.1 L-2.9 -3.1 L-1.4 -3.5 L1.7 -3.5 L3.3 -2.9 L4.0 -1.8 L3.3 -0.7 L-4.5 3.5 L4.5 3.5" fill="none" stroke="#f0f0f0" stroke-width="1.08" stroke-linecap="round" stroke-linejoin="round"/>
<path transform="translate(1163.5,1408.5)" d="M-8.5 3.5 L-8.5 -3.5 L-6.7 -3.5 L-5.9 -2.9 L-5.6 -1.8 L-5.9 -0.7 L-6.7 -0.1 L-8.5 -0.1 M-6.7 -0.1 L-5.9 0.3 L-5.5 1.6 L-5.8 2.9 L-6.5 3.5 L-8.5 3.5 M-4.0 3.5 L-2.2 -3.5 L-0.5 3.5 M-3.4 1.1 L-1.1 1.1 M0.7 -3.5 L4.3 -3.5 M2.5 -3.5 L2.5 3.5 M5.7 0.1 L8.5 0.1 M7.1 -1.8 L7.1 2.0" fill="none" stroke="#f0f0f0" stroke-width="1.08" stroke-linecap="round" stroke-linejoin="round"/>
<path transform="translate(1168.0,1416.5)" d="M-3.0 -2.1 L0.0 -3.5 L0.0 3.5 M-3.0 3.5 L3.0 3.5" fill="none" stroke="#f0f0f0" stroke-width="1.08" stroke-linecap="round" stroke-linejoin="round"/>
<path transform="translate(1120.0,1362.0)" d="M-4.0 -2.4 L0.0 -4.0 L0.0 4.0 M-4.0 4.0 L4.0 4.0" fill="none" stroke="#f0f0f0" stroke-width="1.24" stroke-linecap="round" stroke-linejoin="round"/>
<path transform="translate(1164.0,1362.0)" d="M-4.0 -2.4 L-2.6 -3.6 L-1.2 -4.0 L1.5 -4.0 L2.9 -3.4 L3.6 -2.0 L2.9 -0.8 L-4.0 4.0 L4.0 4.0" fill="none" stroke="#f0f0f0" stroke-width="1.24" stroke-linecap="round" stroke-linejoin="round"/>
<path transform="translate(1166.0,1371.5)" d="M-5.3 -2.5 L-6.1 -3.3 L-7.4 -3.5 L-8.2 -3.5 L-9.4 -2.8 L-10.0 -1.4 L-10.0 1.4 L-9.4 2.8 L-8.2 3.5 L-7.0 3.5 L-5.7 3.0 L-5.1 2.1 L-5.1 0.3 L-7.4 0.3 M-2.3 3.5 L-2.3 -3.5 L2.3 3.5 L2.3 -3.5 M5.2 3.5 L5.2 -3.5 L7.3 -3.5 L8.7 -2.9 L9.6 -1.8 L10.0 0.0 L9.6 1.8 L8.7 2.9 L7.3 3.5 L5.2 3.5" fill="none" stroke="#f0f0f0" stroke-width="1.08" stroke-linecap="round" stroke-linejoin="round"/>
<path transform="translate(1120.0,1335.5)" d="M-4.0 -2.1 L-2.6 -3.1 L-1.2 -3.5 L1.5 -3.5 L2.9 -2.9 L3.6 -1.8 L2.9 -0.7 L-4.0 3.5 L4.0 3.5" fill="none" stroke="#f0f0f0" stroke-width="1.08" stroke-linecap="round" stroke-linejoin="round"/>
<path transform="translate(1166.5,1335.5)" d="M-3.5 -2.1 L0.0 -3.5 L0.0 3.5 M-3.5 3.5 L3.5 3.5" fill="none" stroke="#f0f0f0" stroke-width="1.08" stroke-linecap="round" stroke-linejoin="round"/>
<polyline points="1147.5,1346.6 1147.5,1289.8 1262.6,1289.8 1262.6,1346.6 1150.0,1346.6" fill="none" stroke="#0fa0a4" stroke-width="2"/>
<polyline points="1262.6,1346.6 1369.5,1346.6" fill="none" stroke="#0fa0a4" stroke-width="2"/>
<path transform="translate(1231.6,1308.7)" d="M-9.6 6.3 L-9.6 -6.3 L-5.1 -6.3 L-3.2 -5.3 L-2.3 -3.1 L-3.2 -0.9 L-5.1 0.0 L-9.6 0.0 M-5.8 0.0 L-2.2 6.3 M8.6 -5.7 L6.7 -6.3 L5.4 -6.3 L3.5 -5.0 L2.2 -2.5 L2.2 2.5 L3.5 5.4 L5.4 6.3 L7.3 6.3 L8.6 5.4 L9.6 3.1 L9.6 1.9 L8.6 -0.4 L7.3 -1.3 L5.4 -1.3 L3.5 -0.4 L2.2 1.9" fill="none" stroke="#0fa0a4" stroke-width="1.95" stroke-linecap="round" stroke-linejoin="round"/>
<rect x="1195.5" y="1318.6" width="73.0" height="25.1" fill="none" stroke="#b4b4b4" stroke-width="1.3"/>
<rect x="1197.7" y="1320.1" width="22.9" height="22.1" fill="#8c0000"/>
<rect x="1242.0" y="1320.1" width="25.0" height="22.1" fill="#8c0000"/>
<rect x="1213.2" y="1321.6" width="36.1" height="19.1" fill="none" stroke="#c8c800" stroke-width="1.4"/>
<path transform="translate(1232.3,1351.0)" d="M-19.1 -3.6 L-16.1 -6.0 L-16.1 6.0 M-19.1 6.0 L-13.1 6.0 M-2.5 -6.0 L-7.9 -6.0 L-8.5 -0.5 L-7.0 -1.2 L-4.9 -1.2 L-2.9 -0.2 L-1.9 1.8 L-1.9 3.6 L-2.9 5.4 L-4.9 6.0 L-6.7 6.0 L-8.5 4.8 M2.5 -2.4 L2.5 2.4 L3.7 4.8 L4.9 6.0 L6.7 6.0 L7.9 4.8 L9.1 2.4 L9.1 -2.4 L7.9 -4.8 L6.7 -6.0 L4.9 -6.0 L3.7 -4.8 L2.5 -2.4 M13.4 -6.0 L13.4 6.0 M18.8 -1.6 L13.4 3.4 M15.4 1.8 L19.1 6.0" fill="none" stroke="#c8c800" stroke-width="1.86" stroke-linecap="round" stroke-linejoin="round"/>
<rect x="1186.6" y="1354.0" width="73.0" height="25.8" fill="none" stroke="#b4b4b4" stroke-width="1.3"/>
<rect x="1188.8" y="1355.5" width="22.9" height="22.8" fill="#8c0000"/>
<rect x="1233.8" y="1355.5" width="24.4" height="22.8" fill="#8c0000"/>
<rect x="1204.3" y="1357.0" width="36.2" height="19.8" fill="none" stroke="#c8c800" stroke-width="1.4"/>
<path transform="translate(1222.8,1389.8)" d="M-14.0 -4.7 L-10.9 -7.8 L-10.9 7.8 M-14.0 7.8 L-7.9 7.8 M-3.1 -3.1 L-3.1 3.1 L-1.8 6.2 L-0.6 7.8 L1.2 7.8 L2.5 6.2 L3.7 3.1 L3.7 -3.1 L2.5 -6.2 L1.2 -7.8 L-0.6 -7.8 L-1.8 -6.2 L-3.1 -3.1 M8.1 -7.8 L8.1 7.8 M13.6 -2.0 L8.1 4.3 M10.2 2.3 L14.0 7.8" fill="none" stroke="#c8c800" stroke-width="2.40" stroke-linecap="round" stroke-linejoin="round"/>
<rect x="1183.7" y="1400.4" width="73.0" height="22.9" fill="none" stroke="#b4b4b4" stroke-width="1.3"/>
<rect x="1185.2" y="1401.9" width="24.3" height="19.9" fill="#8c0000"/>
<rect x="1231.0" y="1401.9" width="23.5" height="19.9" fill="#8c0000"/>
<rect x="1202.0" y="1403.4" width="37.0" height="16.9" fill="none" stroke="#c8c800" stroke-width="1.4"/>
<path transform="translate(1220.2,1433.6)" d="M-24.8 -3.5 L-21.7 -5.9 L-21.7 5.9 M-24.8 5.9 L-18.7 5.9 M-13.9 -2.4 L-13.9 2.4 L-12.7 4.7 L-11.5 5.9 L-9.7 5.9 L-8.5 4.7 L-7.2 2.4 L-7.2 -2.4 L-8.5 -4.7 L-9.7 -5.9 L-11.5 -5.9 L-12.7 -4.7 L-13.9 -2.4 M-2.9 -2.4 L-2.9 2.4 L-1.6 4.7 L-0.4 5.9 L1.4 5.9 L2.6 4.7 L3.8 2.4 L3.8 -2.4 L2.6 -4.7 L1.4 -5.9 L-0.4 -5.9 L-1.6 -4.7 L-2.9 -2.4 M8.2 -1.5 L8.2 5.9 M8.2 0.0 L9.7 -1.2 L11.0 -1.5 L12.2 -1.5 L13.4 -0.8 L13.9 0.6 L13.9 5.9 M24.8 -5.9 L18.2 -5.9 L18.2 5.9 M18.2 -0.2 L23.0 -0.2" fill="none" stroke="#c8c800" stroke-width="1.83" stroke-linecap="round" stroke-linejoin="round"/>
<path transform="translate(1198.8,1423.0)" d="M-7.8 5.5 L-7.8 -5.5 L-5.1 -5.5 L-3.2 -4.7 L-2.0 -2.8 L-1.5 0.0 L-2.0 2.8 L-3.2 4.7 L-5.1 5.5 L-7.8 5.5 M2.4 -3.3 L5.1 -5.5 L5.1 5.5 M2.4 5.5 L7.8 5.5" fill="none" stroke="#0fa0a4" stroke-width="1.72" stroke-linecap="round" stroke-linejoin="round"/>
<path transform="translate(1231.0,1329.0)" d="M-9.0 7.0 L-9.0 -7.0 L-4.8 -7.0 L-3.0 -5.9 L-2.2 -3.5 L-3.0 -1.0 L-4.8 0.0 L-9.0 0.0 M-5.4 0.0 L-2.0 7.0 M8.0 -6.3 L6.2 -7.0 L5.0 -7.0 L3.2 -5.6 L2.0 -2.8 L2.0 2.8 L3.2 6.0 L5.0 7.0 L6.8 7.0 L8.0 6.0 L9.0 3.5 L9.0 2.1 L8.0 -0.4 L6.8 -1.4 L5.0 -1.4 L3.2 -0.4 L2.0 2.1" fill="none" stroke="#c8c800" stroke-width="2.17" stroke-linecap="round" stroke-linejoin="round"/>
<path transform="translate(1222.0,1366.0)" d="M-10.0 7.0 L-10.0 -7.0 L-5.1 -7.0 L-3.1 -5.9 L-2.1 -3.5 L-3.1 -1.0 L-5.1 0.0 L-10.0 0.0 M-5.8 0.0 L-1.9 7.0 M3.1 -4.2 L6.5 -7.0 L6.5 7.0 M3.1 7.0 L10.0 7.0" fill="none" stroke="#c8c800" stroke-width="2.17" stroke-linecap="round" stroke-linejoin="round"/>
<path transform="translate(1209.5,1330.0)" d="M-2.5 -2.4 L0.0 -4.0 L0.0 4.0 M-2.5 4.0 L2.5 4.0" fill="none" stroke="#f0f0f0" stroke-width="1.24" stroke-linecap="round" stroke-linejoin="round"/>
<path transform="translate(1255.0,1330.0)" d="M-3.0 -2.4 L-2.0 -3.6 L-0.9 -4.0 L1.1 -4.0 L2.2 -3.4 L2.7 -2.0 L2.2 -0.8 L-3.0 4.0 L3.0 4.0" fill="none" stroke="#f0f0f0" stroke-width="1.24" stroke-linecap="round" stroke-linejoin="round"/>
<path transform="translate(1200.0,1366.0)" d="M-3.0 -2.4 L0.0 -4.0 L0.0 4.0 M-3.0 4.0 L3.0 4.0" fill="none" stroke="#f0f0f0" stroke-width="1.24" stroke-linecap="round" stroke-linejoin="round"/>
<path transform="translate(1244.0,1365.0)" d="M-3.0 -2.4 L-2.0 -3.6 L-0.9 -4.0 L1.1 -4.0 L2.2 -3.4 L2.7 -2.0 L2.2 -0.8 L-3.0 4.0 L3.0 4.0" fill="none" stroke="#f0f0f0" stroke-width="1.24" stroke-linecap="round" stroke-linejoin="round"/>
<path transform="translate(1193.0,1408.5)" d="M-3.0 -2.1 L0.0 -3.5 L0.0 3.5 M-3.0 3.5 L3.0 3.5" fill="none" stroke="#f0f0f0" stroke-width="1.08" stroke-linecap="round" stroke-linejoin="round"/>
<path transform="translate(1241.0,1408.5)" d="M-3.0 -2.1 L-2.0 -3.1 L-0.9 -3.5 L1.1 -3.5 L2.2 -2.9 L2.7 -1.8 L2.2 -0.7 L-3.0 3.5 L3.0 3.5" fill="none" stroke="#f0f0f0" stroke-width="1.08" stroke-linecap="round" stroke-linejoin="round"/>
<rect x="1164.0" y="1433.6" width="72.0" height="23.6" fill="none" stroke="#b4b4b4" stroke-width="1.3"/>
<rect x="1166.5" y="1434.4" width="15.9" height="21.3" fill="#8c0000"/>
<rect x="1218.9" y="1434.4" width="15.8" height="21.3" fill="#8c0000"/>
<rect x="1176.0" y="1429.2" width="45.3" height="26.8" fill="none" stroke="#a010b0" stroke-width="2"/>
<rect x="1182.0" y="1436.6" width="37.0" height="17.7" fill="none" stroke="#c8c800" stroke-width="1.4"/>
<path transform="translate(1200.0,1467.2)" d="M-14.0 -5.1 L-14.0 5.1 L-7.6 5.1 M2.9 -5.1 L-3.6 -5.1 L-3.6 5.1 L2.9 5.1 M-3.6 -0.2 L1.2 -0.2 M7.0 5.1 L7.0 -5.1 L10.0 -5.1 L12.1 -4.3 L13.4 -2.6 L14.0 0.0 L13.4 2.6 L12.1 4.3 L10.0 5.1 L7.0 5.1" fill="none" stroke="#c8c800" stroke-width="1.60" stroke-linecap="round" stroke-linejoin="round"/>
<path transform="translate(1254.8,1442.8) rotate(90) scale(1,-1)" d="M-8.4 -6.2 L-4.7 6.2 L-1.0 -6.2 M2.1 -3.7 L3.2 -5.6 L4.3 -6.2 L6.5 -6.2 L7.6 -5.2 L8.1 -3.1 L7.6 -1.2 L2.1 6.2 L8.4 6.2" fill="none" stroke="#a010b0" stroke-width="1.92" stroke-linecap="round" stroke-linejoin="round"/>
<rect x="1269.2" y="1347.3" width="25.5" height="73.1" fill="none" stroke="#b4b4b4" stroke-width="1.3"/>
<rect x="1271.4" y="1348.8" width="21.4" height="22.2" fill="#8c0000"/>
<rect x="1271.4" y="1396.8" width="21.4" height="22.1" fill="#8c0000"/>
<rect x="1272.2" y="1365.8" width="18.8" height="36.1" fill="none" stroke="#c8c800" stroke-width="1.4"/>
<path transform="translate(1302.8,1383.1) rotate(-90)" d="M-9.1 6.2 L-9.1 -6.2 L-14.4 2.5 L-6.8 2.5 M-3.5 -6.2 L3.9 -6.2 L-1.1 6.2 M7.8 -2.5 L7.8 2.5 L9.0 5.0 L10.2 6.2 L12.0 6.2 L13.2 5.0 L14.4 2.5 L14.4 -2.5 L13.2 -5.0 L12.0 -6.2 L10.2 -6.2 L9.0 -5.0 L7.8 -2.5" fill="none" stroke="#c8c800" stroke-width="1.94" stroke-linecap="round" stroke-linejoin="round"/>
<path transform="translate(1260.0,1382.0) rotate(-90)" d="M-9.6 6.3 L-9.6 -6.3 L-5.1 -6.3 L-3.1 -5.3 L-2.2 -3.1 L-3.1 -0.9 L-5.1 0.0 L-9.6 0.0 M-5.7 0.0 L-2.1 6.3 M2.3 -6.3 L9.2 -6.3 L5.2 -1.3 L6.9 -1.3 L8.8 -0.3 L9.6 2.5 L8.8 5.0 L7.3 6.3 L4.0 6.3 L2.3 5.3" fill="none" stroke="#0fa0a4" stroke-width="1.95" stroke-linecap="round" stroke-linejoin="round"/>
<path transform="translate(1281.5,1382.0) rotate(-90)" d="M-10.0 6.5 L-10.0 -6.5 L-5.3 -6.5 L-3.2 -5.5 L-2.3 -3.2 L-3.2 -0.9 L-5.3 0.0 L-10.0 0.0 M-5.9 0.0 L-2.2 6.5 M2.4 -6.5 L9.6 -6.5 L5.4 -1.3 L7.2 -1.3 L9.2 -0.3 L10.0 2.6 L9.2 5.2 L7.6 6.5 L4.2 6.5 L2.4 5.5" fill="none" stroke="#c8c800" stroke-width="2.02" stroke-linecap="round" stroke-linejoin="round"/>
<rect x="1264.0" y="1424.8" width="36.2" height="36.2" fill="#9a9a2a" stroke="#c8c860" stroke-width="1.2"/>
<polyline points="1265.0,1425.8 1299.2,1460.0" fill="none" stroke="#b0b070" stroke-width="1"/>
<polyline points="1299.2,1425.8 1265.0,1460.0" fill="none" stroke="#b0b070" stroke-width="1"/>
<circle cx="1281.8" cy="1441.7" r="8.5" fill="#000"/>
<rect x="1105.5" y="1426.3" width="33.9" height="33.9" fill="#9a9a2a" stroke="#c8c860" stroke-width="1.2"/>
<polyline points="1106.5,1427.3 1138.4,1459.2" fill="none" stroke="#b0b070" stroke-width="1"/>
<polyline points="1138.4,1427.3 1106.5,1459.2" fill="none" stroke="#b0b070" stroke-width="1"/>
<circle cx="1122.4" cy="1442.5" r="8.5" fill="#000"/>
<path transform="translate(1143.5,1430.7)" d="M-2.2 -3.5 L-3.4 -5.3 L-5.1 -5.9 L-6.6 -5.9 L-8.4 -4.7 L-9.2 -2.4 L-9.2 2.4 L-8.4 4.7 L-6.6 5.9 L-5.1 5.9 L-3.4 5.3 L-2.2 3.5 M2.2 -3.5 L3.4 -5.3 L4.6 -5.9 L7.1 -5.9 L8.3 -5.0 L8.9 -2.9 L8.3 -1.2 L2.2 5.9 L9.2 5.9" fill="none" stroke="#d8d898" stroke-width="1.83" stroke-linecap="round" stroke-linejoin="round"/>
<path transform="translate(1146.8,1446.9) rotate(90) scale(1,-1)" d="M-5.9 -4.1 L-6.8 -5.5 L-8.2 -5.9 L-9.1 -5.9 L-10.5 -4.7 L-11.1 -2.4 L-11.1 2.4 L-10.5 4.7 L-9.1 5.9 L-7.7 5.9 L-6.4 5.1 L-5.6 3.5 L-5.6 0.6 L-8.2 0.6 M-2.5 5.9 L-2.5 -5.9 L2.5 5.9 L2.5 -5.9 M5.8 5.9 L5.8 -5.9 L8.1 -5.9 L9.6 -5.0 L10.6 -2.9 L11.1 0.0 L10.6 2.9 L9.6 5.0 L8.1 5.9 L5.8 5.9" fill="none" stroke="#a010b0" stroke-width="1.83" stroke-linecap="round" stroke-linejoin="round"/>
<rect x="1319.4" y="1292.8" width="50.9" height="98.8" fill="none" stroke="#c8c800" stroke-width="1.4"/>
<polyline points="1370.3,1322.3 1384.3,1322.3 1384.3,1360.6 1370.3,1360.6" fill="none" stroke="#c8c800" stroke-width="1.4"/>
<rect x="1332.7" y="1293.5" width="11.0" height="14.8" fill="none" stroke="#20a020" stroke-width="1.2"/>
<rect x="1334.2" y="1295.0" width="8.0" height="11.8" fill="#009000"/>
<rect x="1332.7" y="1375.4" width="11.0" height="14.0" fill="none" stroke="#20a020" stroke-width="1.2"/>
<rect x="1334.2" y="1376.9" width="8.0" height="11.0" fill="#009000"/>
<rect x="1357.0" y="1293.5" width="11.8" height="14.8" fill="none" stroke="#20a020" stroke-width="1.2"/>
<rect x="1358.5" y="1295.0" width="8.8" height="11.8" fill="#009000"/>
<rect x="1357.0" y="1375.4" width="11.8" height="14.0" fill="none" stroke="#20a020" stroke-width="1.2"/>
<rect x="1358.5" y="1376.9" width="8.8" height="11.0" fill="#009000"/>
<rect x="1321.6" y="1312.0" width="17.7" height="9.5" fill="none" stroke="#20a020" stroke-width="1.2"/>
<rect x="1323.1" y="1313.5" width="14.7" height="6.5" fill="#009000"/>
<rect x="1321.6" y="1345.9" width="17.7" height="8.1" fill="none" stroke="#20a020" stroke-width="1.2"/>
<rect x="1323.1" y="1347.4" width="14.7" height="5.1" fill="#009000"/>
<rect x="1321.6" y="1362.0" width="17.7" height="8.2" fill="none" stroke="#20a020" stroke-width="1.2"/>
<rect x="1323.1" y="1363.5" width="14.7" height="5.2" fill="#009000"/>
<circle cx="1349.6" cy="1323.7" r="6.5" fill="#d8d840" stroke="#c8c800" stroke-width="1.2"/>
<circle cx="1349.6" cy="1357.7" r="6.5" fill="#d8d840" stroke="#c8c800" stroke-width="1.2"/>
<rect x="1335.0" y="1303.0" width="30.7" height="76.4" fill="none" stroke="#c00000" stroke-width="1.5"/>
<rect x="1333.3" y="1302" width="34" height="78.6" rx="4" fill="none" stroke="#a010b0" stroke-width="1.3"/>
<path d="M1367 1325 H1378 Q1383 1333 1378 1340.5 H1367" fill="none" stroke="#a010b0" stroke-width="1.3"/>
<path transform="translate(1393.5,1341.6) rotate(90) scale(-1,1)" d="M-19.6 -6.2 L-11.7 -6.2 M-15.7 -6.2 L-15.7 6.2 M-8.4 -3.8 L-7.2 -5.6 L-6.0 -6.2 L-3.7 -6.2 L-2.6 -5.2 L-2.0 -3.1 L-2.6 -1.2 L-8.4 6.2 L-1.6 6.2 M8.6 -4.4 L7.4 -5.9 L5.7 -6.2 L4.5 -6.2 L2.8 -5.6 L2.0 -4.0 L2.0 -2.5 L2.8 -1.0 L4.5 -0.2 L6.6 0.5 L8.2 1.6 L8.9 3.5 L8.4 5.4 L6.6 6.2 L4.5 6.2 L2.8 5.6 L1.6 4.4 M12.9 -3.8 L14.0 -5.6 L15.2 -6.2 L17.5 -6.2 L18.7 -5.2 L19.3 -3.1 L18.7 -1.2 L12.9 6.2 L19.6 6.2" fill="none" stroke="#c00000" stroke-width="1.94" stroke-linecap="round" stroke-linejoin="round"/>
<path transform="translate(1307.3,1341.2) rotate(90) scale(-1,1)" d="M-8.3 -2.6 L-9.6 -3.4 L-11.4 -3.6 L-12.7 -3.6 L-14.5 -3.3 L-15.4 -2.3 L-15.4 -1.5 L-14.5 -0.6 L-12.7 -0.1 L-10.4 0.3 L-8.7 0.9 L-8.0 2.0 L-8.6 3.1 L-10.4 3.6 L-12.7 3.6 L-14.5 3.3 L-15.8 2.6 M-4.6 -3.6 L-2.3 3.6 L0.2 -1.5 L2.7 3.6 L5.0 -3.6 M8.6 -2.2 L9.8 -3.3 L11.1 -3.6 L13.5 -3.6 L14.8 -3.1 L15.4 -1.8 L14.8 -0.7 L8.6 3.6 L15.8 3.6" fill="none" stroke="#a010b0" stroke-width="1.13" stroke-linecap="round" stroke-linejoin="round"/>
<path transform="translate(1318.4,1325.8) rotate(90) scale(1,-1)" d="M-37.8 -6.4 L-31.0 -6.4 L-35.0 -1.3 L-33.3 -1.3 L-31.4 -0.3 L-30.7 2.6 L-31.4 5.1 L-33.0 6.4 L-36.1 6.4 L-37.8 5.4 M-26.2 -6.4 L-19.4 -6.4 L-23.4 -1.3 L-21.7 -1.3 L-19.8 -0.3 L-19.1 2.6 L-19.8 5.1 L-21.4 6.4 L-24.5 6.4 L-26.2 5.4 M-14.6 -2.6 L-14.6 2.6 L-13.3 5.1 L-12.0 6.4 L-10.1 6.4 L-8.9 5.1 L-7.6 2.6 L-7.6 -2.6 L-8.9 -5.1 L-10.1 -6.4 L-12.0 -6.4 L-13.3 -5.1 L-14.6 -2.6 M2.7 -7.0 L-3.6 7.7 M6.9 -3.8 L10.1 -6.4 L10.1 6.4 M6.9 6.4 L13.3 6.4 M17.5 6.4 L21.9 -6.4 L26.2 6.4 M19.1 2.0 L24.7 2.0 M29.1 -6.4 L37.8 -6.4 M33.5 -6.4 L33.5 6.4" fill="none" stroke="#c00000" stroke-width="1.98" stroke-linecap="round" stroke-linejoin="round"/>
<path transform="translate(1438.4,1342.9)" d="M-45.4 -3.9 L-45.4 3.9 L-43.5 7.8 L-41.5 9.7 L-38.6 9.7 L-36.6 7.8 L-34.7 3.9 L-34.7 -3.9 L-36.6 -7.8 L-38.6 -9.7 L-41.5 -9.7 L-43.5 -7.8 L-45.4 -3.9 M-26.9 8.7 L-26.9 9.7 M-9.0 -9.7 L-17.7 -9.7 L-18.7 -0.8 L-16.4 -1.9 L-12.9 -1.9 L-9.7 -0.4 L-8.0 2.9 L-8.0 5.8 L-9.7 8.7 L-12.9 9.7 L-15.8 9.7 L-18.7 7.8 M7.8 -10.7 L-1.9 11.6 M14.2 -5.8 L19.1 -9.7 L19.1 9.7 M14.2 9.7 L24.0 9.7 M30.2 -9.7 L33.9 9.7 L37.8 -3.9 L41.7 9.7 L45.4 -9.7" fill="none" stroke="#0fa0a4" stroke-width="3.01" stroke-linecap="round" stroke-linejoin="round"/>
<path transform="translate(1336.3,1406.0)" d="M-22.9 5.5 L-22.9 -5.5 L-18.9 2.2 L-15.0 -5.5 L-15.0 5.5 M-9.8 -1.4 L-9.8 5.5 M-9.8 -4.8 L-9.8 -4.1 M-4.1 -5.5 L-4.1 5.5 M1.6 -1.4 L-4.1 3.1 M-2.0 1.7 L2.0 5.5 M6.0 2.2 L12.0 2.2 L12.0 0.9 L11.3 -0.8 L9.8 -1.4 L8.2 -1.4 L6.6 -0.8 L6.0 0.6 L6.0 3.3 L6.6 4.9 L8.2 5.5 L10.0 5.5 L11.6 4.8 M16.6 -3.3 L19.7 -5.5 L19.7 5.5 M16.6 5.5 L22.9 5.5" fill="none" stroke="#0fa0a4" stroke-width="1.72" stroke-linecap="round" stroke-linejoin="round"/>
<circle cx="1340.0" cy="1436.6" r="20.6" fill="none" stroke="#0fa0a4" stroke-width="2"/>
<circle cx="1331.9" cy="1442.5" r="6.0" fill="#9a9a2a" stroke="#c8c800" stroke-width="1.2"/>
<circle cx="1348.1" cy="1442.5" r="6.0" fill="#9a9a2a" stroke="#c8c800" stroke-width="1.2"/>
<circle cx="1331.9" cy="1442.5" r="2.5" fill="#000"/>
<circle cx="1348.1" cy="1442.5" r="2.5" fill="#000"/>
<path transform="translate(1344.3,1464.5)" d="M-14.6 6.1 L-14.6 -6.1 L-9.9 2.4 L-5.3 -6.1 L-5.3 6.1 M1.1 -1.6 L1.1 6.1 M1.1 -5.2 L1.1 -4.5 M14.6 -0.6 L13.1 -1.6 L10.8 -1.6 L8.7 -0.9 L7.8 0.6 L7.8 3.7 L8.7 5.4 L10.8 6.1 L13.1 6.1 L14.6 5.2" fill="none" stroke="#0fa0a4" stroke-width="1.89" stroke-linecap="round" stroke-linejoin="round"/>
<polyline points="1322.0,1427.0 1322.0,1439.0" fill="none" stroke="#0fa0a4" stroke-width="2"/>
<polyline points="1316.0,1433.0 1328.0,1433.0" fill="none" stroke="#0fa0a4" stroke-width="2"/>
<path transform="translate(1337.5,1491.7)" d="M-45.5 5.7 L-45.5 -5.7 L-41.9 2.3 L-38.3 -5.7 L-38.3 5.7 M-33.4 -1.5 L-33.4 5.7 M-33.4 -4.9 L-33.4 -4.2 M-22.8 -0.6 L-24.0 -1.5 L-25.8 -1.5 L-27.4 -0.8 L-28.1 0.6 L-28.1 3.4 L-27.4 5.0 L-25.8 5.7 L-24.0 5.7 L-22.8 4.9 M-12.4 -5.7 L-18.7 -5.7 L-18.7 5.7 L-12.4 5.7 M-18.7 -0.2 L-14.1 -0.2 M-7.8 -5.7 L-7.8 5.7 M-2.5 2.3 L3.1 2.3 L3.1 0.9 L2.4 -0.8 L1.0 -1.5 L-0.4 -1.5 L-1.9 -0.8 L-2.5 0.6 L-2.5 3.4 L-1.9 5.0 L-0.4 5.7 L1.2 5.7 L2.7 4.9 M12.3 -0.6 L11.2 -1.5 L9.4 -1.5 L7.8 -0.8 L7.1 0.6 L7.1 3.4 L7.8 5.0 L9.4 5.7 L11.2 5.7 L12.3 4.9 M17.9 -4.8 L17.9 4.3 L18.7 5.5 L20.5 5.7 M16.2 -1.5 L20.5 -1.5 M24.1 -1.5 L24.1 5.7 M24.1 0.6 L25.1 -0.8 L26.5 -1.5 L28.0 -1.5 M31.8 2.3 L37.4 2.3 L37.4 0.9 L36.7 -0.8 L35.3 -1.5 L33.9 -1.5 L32.4 -0.8 L31.8 0.6 L31.8 3.4 L32.4 5.0 L33.9 5.7 L35.6 5.7 L37.1 4.9 M42.9 -4.8 L42.9 4.3 L43.7 5.5 L45.5 5.7 M41.2 -1.5 L45.5 -1.5" fill="none" stroke="#c8c800" stroke-width="1.77" stroke-linecap="round" stroke-linejoin="round"/>
<rect x="1055.7" y="1483.5" width="72.6" height="22.9" fill="none" stroke="#b4b4b4" stroke-width="1.3"/>
<rect x="1057.0" y="1484.5" width="17.0" height="21.0" fill="#8c0000"/>
<rect x="1103.0" y="1484.5" width="24.6" height="21.0" fill="#8c0000"/>
<rect x="1074.0" y="1485.2" width="29.0" height="19.5" fill="none" stroke="#c8c800" stroke-width="1.4"/>
<path transform="translate(1092.2,1474.7)" d="M-2.2 -3.4 L-3.5 -5.1 L-5.3 -5.7 L-6.9 -5.7 L-8.8 -4.6 L-9.8 -2.3 L-9.8 2.3 L-8.8 4.6 L-6.9 5.7 L-5.3 5.7 L-3.5 5.1 L-2.2 3.4 M2.5 -5.7 L9.4 -5.7 L5.3 -1.1 L7.0 -1.1 L9.0 -0.2 L9.8 2.3 L9.0 4.6 L7.4 5.7 L4.2 5.7 L2.5 4.8" fill="none" stroke="#d8d898" stroke-width="1.77" stroke-linecap="round" stroke-linejoin="round"/>
<path transform="translate(1091.7,1516.9)" d="M-13.7 6.1 L-13.7 -6.1 L-18.9 2.4 L-11.4 2.4 M-8.2 -6.1 L-0.9 -6.1 L-5.9 6.1 M2.9 -1.6 L2.9 4.3 L3.5 5.6 L4.7 6.1 L6.1 6.1 L7.4 5.5 L8.4 4.0 M8.4 -1.6 L8.4 6.1 M18.9 -6.1 L12.5 -6.1 L12.5 6.1 M12.5 -0.2 L17.2 -0.2" fill="none" stroke="#c8c800" stroke-width="1.89" stroke-linecap="round" stroke-linejoin="round"/>
<path transform="translate(1065.0,1490.5)" d="M-3.0 -2.1 L0.0 -3.5 L0.0 3.5 M-3.0 3.5 L3.0 3.5" fill="none" stroke="#f0f0f0" stroke-width="1.08" stroke-linecap="round" stroke-linejoin="round"/>
<path transform="translate(1065.5,1499.5)" d="M-6.5 3.5 L-6.5 -3.5 L-5.1 -3.5 L-4.5 -2.9 L-4.3 -1.8 L-4.5 -0.7 L-5.1 -0.1 L-6.5 -0.1 M-5.1 -0.1 L-4.5 0.3 L-4.2 1.6 L-4.4 2.9 L-5.0 3.5 L-6.5 3.5 M-3.1 3.5 L-1.7 -3.5 L-0.4 3.5 M-2.6 1.1 L-0.8 1.1 M0.6 -3.5 L3.3 -3.5 M1.9 -3.5 L1.9 3.5 M4.3 0.1 L6.5 0.1 M5.4 -1.8 L5.4 2.0" fill="none" stroke="#f0f0f0" stroke-width="1.08" stroke-linecap="round" stroke-linejoin="round"/>
<path transform="translate(1113.0,1490.5)" d="M-3.0 -2.1 L-2.0 -3.1 L-0.9 -3.5 L1.1 -3.5 L2.2 -2.9 L2.7 -1.8 L2.2 -0.7 L-3.0 3.5 L3.0 3.5" fill="none" stroke="#f0f0f0" stroke-width="1.08" stroke-linecap="round" stroke-linejoin="round"/>
<path transform="translate(1115.0,1499.5)" d="M-4.8 -2.5 L-5.5 -3.3 L-6.6 -3.5 L-7.4 -3.5 L-8.5 -2.8 L-9.0 -1.4 L-9.0 1.4 L-8.5 2.8 L-7.4 3.5 L-6.3 3.5 L-5.2 3.0 L-4.6 2.1 L-4.6 0.3 L-6.6 0.3 M-2.1 3.5 L-2.1 -3.5 L2.1 3.5 L2.1 -3.5 M4.7 3.5 L4.7 -3.5 L6.6 -3.5 L7.8 -2.9 L8.6 -1.8 L9.0 0.0 L8.6 1.8 L7.8 2.9 L6.6 3.5 L4.7 3.5" fill="none" stroke="#f0f0f0" stroke-width="1.08" stroke-linecap="round" stroke-linejoin="round"/>
<path transform="translate(880.5,1001.2) rotate(90)" d="M-59.9 -2.9 L-61.9 0.6 L-64.8 1.9 L-66.8 1.9 L-69.7 0.6 L-71.0 -2.3 L-71.0 -4.9 L-69.7 -8.2 L-66.8 -9.8 L-64.8 -9.8 L-61.9 -8.2 L-59.9 -3.9 L-59.9 3.9 L-61.9 8.2 L-64.8 9.8 L-67.7 9.8 L-70.7 8.4 M-52.9 -3.9 L-52.9 3.9 L-50.9 7.8 L-49.0 9.8 L-46.1 9.8 L-44.1 7.8 L-42.2 3.9 L-42.2 -3.9 L-44.1 -7.8 L-46.1 -9.8 L-49.0 -9.8 L-50.9 -7.8 L-52.9 -3.9 M-34.2 8.4 L-34.2 10.3 L-35.3 12.9 M-15.4 -2.9 L-17.4 0.6 L-20.3 1.9 L-22.3 1.9 L-25.2 0.6 L-26.5 -2.3 L-26.5 -4.9 L-25.2 -8.2 L-22.3 -9.8 L-20.3 -9.8 L-17.4 -8.2 L-15.4 -3.9 L-15.4 3.9 L-17.4 8.2 L-20.3 9.8 L-23.2 9.8 L-26.2 8.4 M-8.4 -5.8 L-6.4 -8.8 L-4.5 -9.8 L-0.6 -9.8 L1.4 -8.2 L2.3 -4.9 L1.4 -2.0 L-8.4 9.8 L2.9 9.8 M19.1 -9.8 L10.3 -9.8 L9.4 -0.8 L11.7 -2.0 L15.2 -2.0 L18.3 -0.4 L20.1 2.9 L20.1 5.8 L18.3 8.8 L15.2 9.8 L12.3 9.8 L9.4 7.8 M39.0 -2.5 L39.0 9.8 M39.0 0.0 L41.0 -2.1 L43.3 -2.1 L45.3 0.0 L45.3 9.8 M45.3 0.0 L47.2 -2.1 L49.6 -2.1 L51.5 0.0 L51.5 9.8 M58.6 -2.5 L58.6 9.8 M58.6 0.0 L60.5 -2.1 L62.9 -2.1 L64.8 0.0 L64.8 9.8 M64.8 0.0 L66.8 -2.1 L69.1 -2.1 L71.0 0.0 L71.0 9.8" fill="none" stroke="#c8c8c8" stroke-width="3.02" stroke-linecap="round" stroke-linejoin="round"/>
<rect x="1623.1" y="514.7" width="78.9" height="84.1" fill="none" stroke="#c00000" stroke-width="1.2"/>
<rect x="1625.7" y="517.0" width="74.9" height="79.6" fill="#840000"/>
<rect x="1625.4" y="539.5" width="74.4" height="57.1" fill="none" stroke="#a8a8a8" stroke-width="2"/>
<polyline points="1626.0,519.7 1698.0,592.8" fill="none" stroke="#9010b0" stroke-width="1.2"/>
<path transform="translate(1661.5,556.7) rotate(-90)" d="M-6.7 -6.3 L-4.4 -9.4 L-2.1 -10.5 L2.5 -10.5 L4.9 -8.8 L6.0 -5.2 L4.9 -2.1 L-6.7 10.5 L6.7 10.5" fill="none" stroke="#f0f0f0" stroke-width="2.52" stroke-linecap="round" stroke-linejoin="round"/>
<rect x="1623.1" y="1461.7" width="78.9" height="82.4" fill="none" stroke="#c00000" stroke-width="1.2"/>
<rect x="1625.7" y="1464.0" width="74.9" height="77.9" fill="#840000"/>
<rect x="1625.4" y="1462.7" width="74.4" height="56.6" fill="none" stroke="#a8a8a8" stroke-width="2"/>
<polyline points="1626.0,1466.7 1698.0,1538.1" fill="none" stroke="#9010b0" stroke-width="1.2"/>
<path transform="translate(1661.5,1502.2) rotate(-90)" d="M-5.8 -6.0 L0.0 -10.0 L0.0 10.0 M-5.8 10.0 L5.8 10.0" fill="none" stroke="#f0f0f0" stroke-width="2.41" stroke-linecap="round" stroke-linejoin="round"/>
<rect x="1551.8" y="596.2" width="227.0" height="866.5" fill="none" stroke="#0fa0a4" stroke-width="2.3"/>
<polyline points="1561.0,603.0 1561.0,621.0" fill="none" stroke="#0fa0a4" stroke-width="2"/>
<polyline points="1565.7,1440.0 1565.7,1458.0" fill="none" stroke="#0fa0a4" stroke-width="2"/>
<polyline points="1557.0,1449.0 1575.0,1449.0" fill="none" stroke="#0fa0a4" stroke-width="2"/>
<path transform="translate(1526.2,1028.0) rotate(-90)" d="M-70.4 -3.8 L-67.4 -6.2 L-67.4 6.2 M-70.4 6.2 L-64.4 6.2 M-56.6 -0.5 L-58.6 -1.2 L-59.4 -2.5 L-59.4 -4.4 L-58.0 -6.1 L-55.3 -6.1 L-53.8 -4.4 L-53.8 -2.5 L-54.7 -1.2 L-56.6 -0.5 L-58.6 0.2 L-59.8 1.9 L-59.8 4.5 L-58.2 6.2 L-55.0 6.2 L-53.4 4.5 L-53.4 1.9 L-54.5 0.2 L-56.6 -0.5 M-43.0 -5.6 L-44.8 -6.2 L-46.0 -6.2 L-47.7 -5.0 L-48.9 -2.5 L-48.9 2.5 L-47.7 5.4 L-46.0 6.2 L-44.2 6.2 L-43.0 5.4 L-42.0 3.1 L-42.0 1.9 L-43.0 -0.4 L-44.2 -1.2 L-46.0 -1.2 L-47.7 -0.4 L-48.9 1.9 M-32.1 -6.2 L-37.5 -6.2 L-38.1 -0.5 L-36.7 -1.2 L-34.5 -1.2 L-32.6 -0.2 L-31.5 1.9 L-31.5 3.8 L-32.6 5.6 L-34.5 6.2 L-36.3 6.2 L-38.1 5.0 M-27.2 -2.5 L-27.2 2.5 L-26.0 5.0 L-24.9 6.2 L-23.1 6.2 L-21.9 5.0 L-20.7 2.5 L-20.7 -2.5 L-21.9 -5.0 L-23.1 -6.2 L-24.9 -6.2 L-26.0 -5.0 L-27.2 -2.5 M-16.4 6.2 L-16.4 -6.2 L-12.2 -6.2 L-10.4 -5.2 L-9.8 -3.1 L-10.4 -1.2 L-12.2 -0.2 L-16.4 -0.2 M-12.2 -0.2 L-10.4 0.6 L-9.5 2.9 L-10.2 5.2 L-11.9 6.2 L-16.4 6.2 M0.1 -1.6 L0.1 6.2 M-0.1 0.0 L-1.3 -1.2 L-2.4 -1.6 L-3.6 -1.6 L-5.1 -0.9 L-5.7 0.6 L-5.7 3.8 L-5.1 5.5 L-3.6 6.2 L-2.4 6.2 L-1.3 5.8 L-0.1 4.4 M5.9 -5.2 L5.9 4.8 L6.7 6.0 L8.5 6.2 M4.1 -1.6 L8.5 -1.6 M13.8 -5.2 L13.8 4.8 L14.6 6.0 L16.4 6.2 M12.0 -1.6 L16.4 -1.6 M20.1 -6.2 L20.1 6.2 M26.8 -6.2 L26.8 6.2 M20.1 -0.2 L26.8 -0.2 M33.4 -1.6 L31.8 -0.9 L31.1 0.6 L31.1 3.8 L31.8 5.5 L33.4 6.2 L34.6 6.2 L36.1 5.5 L36.8 3.8 L36.8 0.6 L36.1 -0.9 L34.6 -1.6 L33.4 -1.6 M41.5 -6.2 L41.5 6.2 M52.4 -6.2 L52.4 6.2 M52.3 0.0 L51.1 -1.2 L49.9 -1.6 L48.7 -1.6 L47.3 -0.9 L46.7 0.6 L46.7 3.8 L47.3 5.5 L48.7 6.2 L49.9 6.2 L51.1 5.8 L52.3 4.4 M56.7 2.5 L62.4 2.5 L62.4 1.0 L61.7 -0.9 L60.3 -1.6 L58.8 -1.6 L57.3 -0.9 L56.7 0.6 L56.7 3.8 L57.3 5.5 L58.8 6.2 L60.5 6.2 L62.1 5.4 M66.5 -1.6 L66.5 6.2 M66.5 0.6 L67.4 -0.9 L68.9 -1.6 L70.4 -1.6" fill="none" stroke="#c8c800" stroke-width="1.94" stroke-linecap="round" stroke-linejoin="round"/>
<path transform="translate(1667.8,1030.2) rotate(-90)" d="M-91.8 -3.8 L-88.8 -6.2 L-88.8 6.2 M-91.8 6.2 L-85.8 6.2 M-77.9 -0.5 L-79.9 -1.2 L-80.8 -2.5 L-80.8 -4.4 L-79.3 -6.1 L-76.6 -6.1 L-75.1 -4.4 L-75.1 -2.5 L-75.9 -1.2 L-77.9 -0.5 L-79.9 0.2 L-81.1 1.9 L-81.1 4.5 L-79.6 6.2 L-76.3 6.2 L-74.6 4.5 L-74.6 1.9 L-75.8 0.2 L-77.9 -0.5 M-64.2 -5.6 L-66.0 -6.2 L-67.2 -6.2 L-69.0 -5.0 L-70.2 -2.5 L-70.2 2.5 L-69.0 5.4 L-67.2 6.2 L-65.4 6.2 L-64.2 5.4 L-63.2 3.1 L-63.2 1.9 L-64.2 -0.4 L-65.4 -1.2 L-67.2 -1.2 L-69.0 -0.4 L-70.2 1.9 M-53.3 -6.2 L-58.7 -6.2 L-59.3 -0.5 L-57.8 -1.2 L-55.7 -1.2 L-53.7 -0.2 L-52.7 1.9 L-52.7 3.8 L-53.7 5.6 L-55.7 6.2 L-57.5 6.2 L-59.3 5.0 M-48.3 -2.5 L-48.3 2.5 L-47.1 5.0 L-45.9 6.2 L-44.1 6.2 L-42.9 5.0 L-41.7 2.5 L-41.7 -2.5 L-42.9 -5.0 L-44.1 -6.2 L-45.9 -6.2 L-47.1 -5.0 L-48.3 -2.5 M-30.1 6.2 L-30.1 -6.2 L-25.9 -6.2 L-24.1 -5.2 L-23.5 -3.1 L-24.1 -1.2 L-25.9 -0.2 L-30.1 -0.2 M-25.9 -0.2 L-24.1 0.6 L-23.1 2.9 L-23.8 5.2 L-25.5 6.2 L-30.1 6.2 M-13.5 -1.6 L-13.5 6.2 M-13.6 0.0 L-14.8 -1.2 L-16.0 -1.6 L-17.2 -1.6 L-18.7 -0.9 L-19.3 0.6 L-19.3 3.8 L-18.7 5.5 L-17.2 6.2 L-16.0 6.2 L-14.8 5.8 L-13.6 4.4 M-7.6 -5.2 L-7.6 4.8 L-6.8 6.0 L-5.0 6.2 M-9.4 -1.6 L-5.0 -1.6 M0.3 -5.2 L0.3 4.8 L1.1 6.0 L2.9 6.2 M-1.5 -1.6 L2.9 -1.6 M6.7 2.5 L12.4 2.5 L12.4 1.0 L11.7 -0.9 L10.3 -1.6 L8.8 -1.6 L7.3 -0.9 L6.7 0.6 L6.7 3.8 L7.3 5.5 L8.8 6.2 L10.5 6.2 L12.1 5.4 M16.5 -1.6 L16.5 6.2 M16.5 0.6 L17.5 -0.9 L18.9 -1.6 L20.5 -1.6 M23.8 -1.6 L27.0 6.2 M30.1 -1.6 L26.4 8.8 L25.2 10.4 L23.8 10.4 M41.1 -6.2 L41.1 6.2 M47.9 -6.2 L47.9 6.2 M41.1 -0.2 L47.9 -0.2 M54.6 -1.6 L52.9 -0.9 L52.2 0.6 L52.2 3.8 L52.9 5.5 L54.6 6.2 L55.8 6.2 L57.2 5.5 L57.9 3.8 L57.9 0.6 L57.2 -0.9 L55.8 -1.6 L54.6 -1.6 M62.7 -6.2 L62.7 6.2 M73.7 -6.2 L73.7 6.2 M73.5 0.0 L72.3 -1.2 L71.1 -1.6 L69.9 -1.6 L68.5 -0.9 L67.9 0.6 L67.9 3.8 L68.5 5.5 L69.9 6.2 L71.1 6.2 L72.3 5.8 L73.5 4.4 M78.0 2.5 L83.8 2.5 L83.8 1.0 L83.0 -0.9 L81.6 -1.6 L80.2 -1.6 L78.6 -0.9 L78.0 0.6 L78.0 3.8 L78.6 5.5 L80.2 6.2 L81.8 6.2 L83.4 5.4 M87.8 -1.6 L87.8 6.2 M87.8 0.6 L88.8 -0.9 L90.2 -1.6 L91.8 -1.6" fill="none" stroke="#0fa0a4" stroke-width="1.94" stroke-linecap="round" stroke-linejoin="round"/>
<path transform="translate(1809.7,1053.4) rotate(-90)" d="M-22.9 6.6 L-22.9 -6.6 L-18.4 -6.6 L-16.5 -5.6 L-15.8 -3.3 L-16.5 -1.3 L-18.4 -0.3 L-22.9 -0.3 M-18.4 -0.3 L-16.5 0.7 L-15.4 3.1 L-16.2 5.6 L-18.0 6.6 L-22.9 6.6 M-5.2 -1.7 L-5.2 6.6 M-5.4 0.0 L-6.6 -1.3 L-7.9 -1.7 L-9.2 -1.7 L-10.7 -0.9 L-11.4 0.7 L-11.4 4.0 L-10.7 5.9 L-9.2 6.6 L-7.9 6.6 L-6.6 6.1 L-5.4 4.7 M1.0 -5.6 L1.0 5.1 L1.9 6.4 L3.8 6.6 M-0.9 -1.7 L3.8 -1.7 M9.4 -5.6 L9.4 5.1 L10.3 6.4 L12.3 6.6 M7.5 -1.7 L12.3 -1.7 M16.5 -4.0 L19.7 -6.6 L19.7 6.6 M16.5 6.6 L22.9 6.6" fill="none" stroke="#0fa0a4" stroke-width="2.06" stroke-linecap="round" stroke-linejoin="round"/>
<polyline points="2620.0,1635.8 1706.0,1635.8 1706.0,1780.0" fill="none" stroke="#a00000" stroke-width="2.5"/>
<path transform="translate(1057.6,783.2) rotate(90) scale(1,-1)" d="M-36.8 -5.1 L-36.8 2.6 L-36.0 4.4 L-34.5 5.1 L-32.8 5.1 L-31.3 4.4 L-30.6 2.6 L-30.6 -5.1 M-23.6 -0.4 L-25.5 -1.0 L-26.3 -2.1 L-26.3 -3.6 L-24.9 -5.0 L-22.4 -5.0 L-21.1 -3.6 L-21.1 -2.1 L-21.8 -1.0 L-23.6 -0.4 L-25.5 0.2 L-26.6 1.5 L-26.6 3.7 L-25.1 5.1 L-22.2 5.1 L-20.6 3.7 L-20.6 1.5 L-21.7 0.2 L-23.6 -0.4 M-3.8 -5.1 L-9.8 -5.1 L-9.8 5.1 L-3.8 5.1 M-9.8 -0.2 L-5.4 -0.2 M6.0 -3.6 L4.9 -4.8 L3.3 -5.1 L2.2 -5.1 L0.5 -4.6 L-0.3 -3.3 L-0.3 -2.1 L0.5 -0.8 L2.2 -0.2 L4.1 0.4 L5.7 1.3 L6.4 2.9 L5.8 4.4 L4.1 5.1 L2.2 5.1 L0.5 4.6 L-0.6 3.6 M10.1 5.1 L10.1 -5.1 L14.0 -5.1 L15.6 -4.3 L16.4 -2.6 L15.6 -0.5 L14.0 0.3 L10.1 0.3 M20.3 -5.1 L26.1 -5.1 L22.7 -1.0 L24.1 -1.0 L25.8 -0.2 L26.5 2.1 L25.8 4.1 L24.5 5.1 L21.7 5.1 L20.3 4.3 M30.3 -3.1 L31.4 -4.6 L32.5 -5.1 L34.8 -5.1 L35.9 -4.3 L36.4 -2.6 L35.9 -1.0 L30.3 5.1 L36.8 5.1" fill="none" stroke="#a010b0" stroke-width="1.60" stroke-linecap="round" stroke-linejoin="round"/>
<path transform="translate(1058.0,834.0) rotate(90) scale(1,-1)" d="M-8.0 -5.0 L0.0 5.0 L8.0 -5.0" fill="none" stroke="#a010b0" stroke-width="1.55" stroke-linecap="round" stroke-linejoin="round"/>
<path transform="translate(1065.5,777.5) rotate(-90)" d="M-9.7 -5.5 L-17.5 -5.5 L-17.5 5.5 M-17.5 -0.2 L-11.7 -0.2 M-4.7 5.5 L-4.7 -5.5 L-0.2 2.2 L4.3 -5.5 L4.3 5.5 M16.8 -5.5 L10.2 -5.5 L9.5 -0.4 L11.3 -1.1 L13.9 -1.1 L16.2 -0.2 L17.5 1.7 L17.5 3.3 L16.2 5.0 L13.9 5.5 L11.7 5.5 L9.5 4.4" fill="none" stroke="#d8d898" stroke-width="1.71" stroke-linecap="round" stroke-linejoin="round"/>
<circle cx="1080.5" cy="557.2" r="3.2" fill="#000" stroke="#d4d4d4" stroke-width="1.0"/>
<circle cx="1092.4" cy="571.8" r="3.2" fill="#000" stroke="#d4d4d4" stroke-width="1.0"/>
<circle cx="1060.5" cy="623.3" r="3.2" fill="#000" stroke="#d4d4d4" stroke-width="1.0"/>
<circle cx="1027.9" cy="653.4" r="3.2" fill="#000" stroke="#d4d4d4" stroke-width="1.0"/>
<circle cx="1134.5" cy="668.8" r="3.2" fill="#000" stroke="#d4d4d4" stroke-width="1.0"/>
<circle cx="1137.7" cy="691.7" r="3.2" fill="#000" stroke="#d4d4d4" stroke-width="1.0"/>
<circle cx="1108.4" cy="714.4" r="3.2" fill="#000" stroke="#d4d4d4" stroke-width="1.0"/>
<circle cx="1133.3" cy="720.5" r="3.2" fill="#000" stroke="#d4d4d4" stroke-width="1.0"/>
<circle cx="1025.3" cy="723.0" r="3.2" fill="#000" stroke="#d4d4d4" stroke-width="1.0"/>
<circle cx="1212.3" cy="726.6" r="3.2" fill="#000" stroke="#d4d4d4" stroke-width="1.0"/>
<circle cx="1356.4" cy="692.2" r="3.2" fill="#000" stroke="#d4d4d4" stroke-width="1.0"/>
<circle cx="1080.4" cy="817.3" r="3.2" fill="#000" stroke="#d4d4d4" stroke-width="1.0"/>
<circle cx="1117.6" cy="821.4" r="3.2" fill="#000" stroke="#d4d4d4" stroke-width="1.0"/>
<circle cx="1300.2" cy="826.2" r="3.2" fill="#000" stroke="#d4d4d4" stroke-width="1.0"/>
<circle cx="1038.6" cy="938.5" r="3.2" fill="#000" stroke="#d4d4d4" stroke-width="1.0"/>
<circle cx="1172.3" cy="903.7" r="3.2" fill="#000" stroke="#d4d4d4" stroke-width="1.0"/>
<circle cx="1172.3" cy="927.3" r="3.2" fill="#000" stroke="#d4d4d4" stroke-width="1.0"/>
<circle cx="1169.3" cy="940.6" r="3.2" fill="#000" stroke="#d4d4d4" stroke-width="1.0"/>
<circle cx="1082.3" cy="1003.0" r="3.2" fill="#000" stroke="#d4d4d4" stroke-width="1.0"/>
<circle cx="1104.4" cy="1006.4" r="3.2" fill="#000" stroke="#d4d4d4" stroke-width="1.0"/>
<circle cx="1043.2" cy="1020.2" r="3.2" fill="#000" stroke="#d4d4d4" stroke-width="1.0"/>
<circle cx="1081.6" cy="1027.0" r="3.2" fill="#000" stroke="#d4d4d4" stroke-width="1.0"/>
<circle cx="1119.5" cy="1053.1" r="3.2" fill="#000" stroke="#d4d4d4" stroke-width="1.0"/>
<circle cx="1197.6" cy="892.4" r="3.2" fill="#000" stroke="#d4d4d4" stroke-width="1.0"/>
<circle cx="1213.6" cy="863.3" r="3.2" fill="#000" stroke="#d4d4d4" stroke-width="1.0"/>
<circle cx="1265.5" cy="896.3" r="3.2" fill="#000" stroke="#d4d4d4" stroke-width="1.0"/>
<circle cx="1201.8" cy="905.3" r="3.2" fill="#000" stroke="#d4d4d4" stroke-width="1.0"/>
<circle cx="1300.2" cy="914.5" r="3.2" fill="#000" stroke="#d4d4d4" stroke-width="1.0"/>
<circle cx="1234.6" cy="919.4" r="3.2" fill="#000" stroke="#d4d4d4" stroke-width="1.0"/>
<circle cx="1205.4" cy="925.2" r="3.2" fill="#000" stroke="#d4d4d4" stroke-width="1.0"/>
<circle cx="1260.4" cy="924.8" r="3.2" fill="#000" stroke="#d4d4d4" stroke-width="1.0"/>
<circle cx="1260.4" cy="937.3" r="3.2" fill="#000" stroke="#d4d4d4" stroke-width="1.0"/>
<circle cx="1203.3" cy="942.5" r="3.2" fill="#000" stroke="#d4d4d4" stroke-width="1.0"/>
<circle cx="1267.5" cy="945.5" r="3.2" fill="#000" stroke="#d4d4d4" stroke-width="1.0"/>
<circle cx="1281.5" cy="1030.3" r="3.2" fill="#000" stroke="#d4d4d4" stroke-width="1.0"/>
<circle cx="1201.4" cy="1031.4" r="3.2" fill="#000" stroke="#d4d4d4" stroke-width="1.0"/>
<circle cx="1210.2" cy="1046.2" r="3.2" fill="#000" stroke="#d4d4d4" stroke-width="1.0"/>
<circle cx="1149.2" cy="1070.0" r="3.2" fill="#000" stroke="#d4d4d4" stroke-width="1.0"/>
<circle cx="1205.5" cy="1070.0" r="3.2" fill="#000" stroke="#d4d4d4" stroke-width="1.0"/>
<circle cx="1259.4" cy="1085.1" r="3.2" fill="#000" stroke="#d4d4d4" stroke-width="1.0"/>
<circle cx="1278.2" cy="1083.2" r="3.2" fill="#000" stroke="#d4d4d4" stroke-width="1.0"/>
<circle cx="1324.6" cy="1105.4" r="3.2" fill="#000" stroke="#d4d4d4" stroke-width="1.0"/>
<circle cx="1282.0" cy="1108.1" r="3.2" fill="#000" stroke="#d4d4d4" stroke-width="1.0"/>
<circle cx="1301.2" cy="1113.0" r="3.2" fill="#000" stroke="#d4d4d4" stroke-width="1.0"/>
<circle cx="1257.0" cy="1125.0" r="3.2" fill="#000" stroke="#d4d4d4" stroke-width="1.0"/>
<circle cx="1302.0" cy="1131.5" r="3.2" fill="#000" stroke="#d4d4d4" stroke-width="1.0"/>
<circle cx="1169.3" cy="1150.0" r="3.2" fill="#000" stroke="#d4d4d4" stroke-width="1.0"/>
<circle cx="1277.9" cy="1148.4" r="3.2" fill="#000" stroke="#d4d4d4" stroke-width="1.0"/>
<circle cx="1126.7" cy="1177.3" r="3.2" fill="#000" stroke="#d4d4d4" stroke-width="1.0"/>
<circle cx="1043.5" cy="1094.6" r="3.2" fill="#000" stroke="#d4d4d4" stroke-width="1.0"/>
<circle cx="1207.3" cy="1202.2" r="3.2" fill="#000" stroke="#d4d4d4" stroke-width="1.0"/>
<circle cx="1309.8" cy="1205.2" r="3.2" fill="#000" stroke="#d4d4d4" stroke-width="1.0"/>
<circle cx="1198.4" cy="1225.5" r="3.2" fill="#000" stroke="#d4d4d4" stroke-width="1.0"/>
<circle cx="1309.8" cy="1228.8" r="3.2" fill="#000" stroke="#d4d4d4" stroke-width="1.0"/>
<circle cx="1327.8" cy="1228.8" r="3.2" fill="#000" stroke="#d4d4d4" stroke-width="1.0"/>
<circle cx="1054.3" cy="1281.7" r="3.2" fill="#000" stroke="#d4d4d4" stroke-width="1.0"/>
<circle cx="1038.6" cy="1348.5" r="3.2" fill="#000" stroke="#d4d4d4" stroke-width="1.0"/>
<circle cx="1098.5" cy="1344.7" r="3.2" fill="#000" stroke="#d4d4d4" stroke-width="1.0"/>
<circle cx="1069.3" cy="1365.8" r="3.2" fill="#000" stroke="#d4d4d4" stroke-width="1.0"/>
<circle cx="1034.7" cy="1374.2" r="3.2" fill="#000" stroke="#d4d4d4" stroke-width="1.0"/>
<circle cx="1064.2" cy="1372.7" r="3.2" fill="#000" stroke="#d4d4d4" stroke-width="1.0"/>
<circle cx="1096.6" cy="1377.1" r="3.2" fill="#000" stroke="#d4d4d4" stroke-width="1.0"/>
<circle cx="1122.4" cy="1384.2" r="3.2" fill="#000" stroke="#d4d4d4" stroke-width="1.0"/>
<circle cx="1153.7" cy="1392.3" r="3.2" fill="#000" stroke="#d4d4d4" stroke-width="1.0"/>
<circle cx="1098.0" cy="1405.6" r="3.2" fill="#000" stroke="#d4d4d4" stroke-width="1.0"/>
<circle cx="1141.3" cy="1405.2" r="3.2" fill="#000" stroke="#d4d4d4" stroke-width="1.0"/>
<circle cx="1076.0" cy="1424.3" r="3.2" fill="#000" stroke="#d4d4d4" stroke-width="1.0"/>
<circle cx="1068.1" cy="1433.6" r="3.2" fill="#000" stroke="#d4d4d4" stroke-width="1.0"/>
<circle cx="1182.9" cy="1426.3" r="3.2" fill="#000" stroke="#d4d4d4" stroke-width="1.0"/>
<circle cx="1039.8" cy="1465.3" r="3.2" fill="#000" stroke="#d4d4d4" stroke-width="1.0"/>
<circle cx="1318.6" cy="1262.5" r="3.2" fill="#000" stroke="#d4d4d4" stroke-width="1.0"/>
<circle cx="1361.4" cy="1279.5" r="3.2" fill="#000" stroke="#d4d4d4" stroke-width="1.0"/>
<circle cx="1311.3" cy="1339.2" r="3.2" fill="#000" stroke="#d4d4d4" stroke-width="1.0"/>
<circle cx="1357.7" cy="1337.0" r="3.2" fill="#000" stroke="#d4d4d4" stroke-width="1.0"/>
<circle cx="1263.8" cy="1352.1" r="3.2" fill="#000" stroke="#d4d4d4" stroke-width="1.0"/>
<circle cx="1264.8" cy="1361.4" r="3.2" fill="#000" stroke="#d4d4d4" stroke-width="1.0"/>
<circle cx="1309.8" cy="1359.4" r="3.2" fill="#000" stroke="#d4d4d4" stroke-width="1.0"/>
<circle cx="1201.8" cy="1384.2" r="3.2" fill="#000" stroke="#d4d4d4" stroke-width="1.0"/>
<circle cx="1216.1" cy="1408.6" r="3.2" fill="#000" stroke="#d4d4d4" stroke-width="1.0"/>
<circle cx="1309.8" cy="1405.2" r="3.2" fill="#000" stroke="#d4d4d4" stroke-width="1.0"/>
<circle cx="1183.2" cy="1426.3" r="3.2" fill="#000" stroke="#d4d4d4" stroke-width="1.0"/>
<circle cx="1309.8" cy="1437.3" r="3.2" fill="#000" stroke="#d4d4d4" stroke-width="1.0"/>
<circle cx="1093.9" cy="1503.2" r="3.2" fill="#000" stroke="#d4d4d4" stroke-width="1.0"/>
<polyline points="1090.6,634.0 1090.6,654.0" fill="none" stroke="#a0a0a0" stroke-width="2"/>
<polyline points="1090.6,683.5 1090.6,702.5" fill="none" stroke="#a0a0a0" stroke-width="2"/>
<polyline points="1090.6,731.5 1090.6,750.5" fill="none" stroke="#a0a0a0" stroke-width="2"/>
<polyline points="1090.6,780.0 1090.6,800.5" fill="none" stroke="#a0a0a0" stroke-width="2"/>
<polyline points="1090.6,831.0 1090.6,851.0" fill="none" stroke="#a0a0a0" stroke-width="2"/>
<polyline points="1090.6,880.5 1090.6,900.0" fill="none" stroke="#a0a0a0" stroke-width="2"/>
<polyline points="1090.6,926.5 1090.6,945.0" fill="none" stroke="#a0a0a0" stroke-width="2"/>
<polyline points="1090.6,963.5 1090.6,998.5" fill="none" stroke="#a0a0a0" stroke-width="2"/>
<polyline points="1317.0,634.0 1317.0,654.0" fill="none" stroke="#a0a0a0" stroke-width="2"/>
<polyline points="1308.7,634.0 1308.7,654.0" fill="none" stroke="#a09a20" stroke-width="1.3"/>
<polyline points="1317.0,683.5 1317.0,702.5" fill="none" stroke="#a0a0a0" stroke-width="2"/>
<polyline points="1308.7,683.5 1308.7,702.5" fill="none" stroke="#a09a20" stroke-width="1.3"/>
<polyline points="1317.0,731.5 1317.0,750.5" fill="none" stroke="#a0a0a0" stroke-width="2"/>
<polyline points="1308.7,731.5 1308.7,750.5" fill="none" stroke="#a09a20" stroke-width="1.3"/>
<polyline points="1317.0,780.0 1317.0,800.5" fill="none" stroke="#a0a0a0" stroke-width="2"/>
<polyline points="1308.7,780.0 1308.7,800.5" fill="none" stroke="#a09a20" stroke-width="1.3"/>
<polyline points="1317.0,831.0 1317.0,851.0" fill="none" stroke="#a0a0a0" stroke-width="2"/>
<polyline points="1308.7,831.0 1308.7,851.0" fill="none" stroke="#a09a20" stroke-width="1.3"/>
<polyline points="1317.0,880.5 1317.0,900.0" fill="none" stroke="#a0a0a0" stroke-width="2"/>
<polyline points="1308.7,880.5 1308.7,900.0" fill="none" stroke="#a09a20" stroke-width="1.3"/>
<polyline points="1317.0,926.5 1317.0,945.0" fill="none" stroke="#a0a0a0" stroke-width="2"/>
<polyline points="1308.7,926.5 1308.7,945.0" fill="none" stroke="#a09a20" stroke-width="1.3"/>
<polyline points="1317.0,966.0 1317.0,1001.0" fill="none" stroke="#a0a0a0" stroke-width="2"/>
<polyline points="1308.7,966.0 1308.7,1001.0" fill="none" stroke="#a09a20" stroke-width="1.3"/>
<polyline points="1121.5,583.6 1141.6,583.6" fill="none" stroke="#a0a0a0" stroke-width="2"/>
<polyline points="1173.0,583.6 1192.5,583.6" fill="none" stroke="#a0a0a0" stroke-width="2"/>
<polyline points="1221.0,583.6 1242.0,583.6" fill="none" stroke="#a0a0a0" stroke-width="2"/>
<polyline points="1273.6,583.6 1292.2,583.6" fill="none" stroke="#a0a0a0" stroke-width="2"/>
<polyline points="1091.5,999.9 1183.6,999.9" fill="none" stroke="#a0a0a0" stroke-width="2"/>
<polyline points="1225.8,999.9 1317.1,999.9" fill="none" stroke="#a0a0a0" stroke-width="2"/>
<polyline points="1110.6,731.5 1110.6,750.5" fill="none" stroke="#a09a20" stroke-width="1.3"/>
<polyline points="1110.6,780.0 1110.6,800.5" fill="none" stroke="#a09a20" stroke-width="1.3"/>
<polyline points="1110.6,831.0 1110.6,851.0" fill="none" stroke="#a09a20" stroke-width="1.3"/>
<polyline points="1110.6,880.5 1110.6,900.0" fill="none" stroke="#a09a20" stroke-width="1.3"/>
<polyline points="1110.6,926.5 1110.6,945.0" fill="none" stroke="#a09a20" stroke-width="1.3"/>
<polyline points="1110.6,963.5 1110.6,998.5" fill="none" stroke="#a09a20" stroke-width="1.3"/></svg>
</body></html>
